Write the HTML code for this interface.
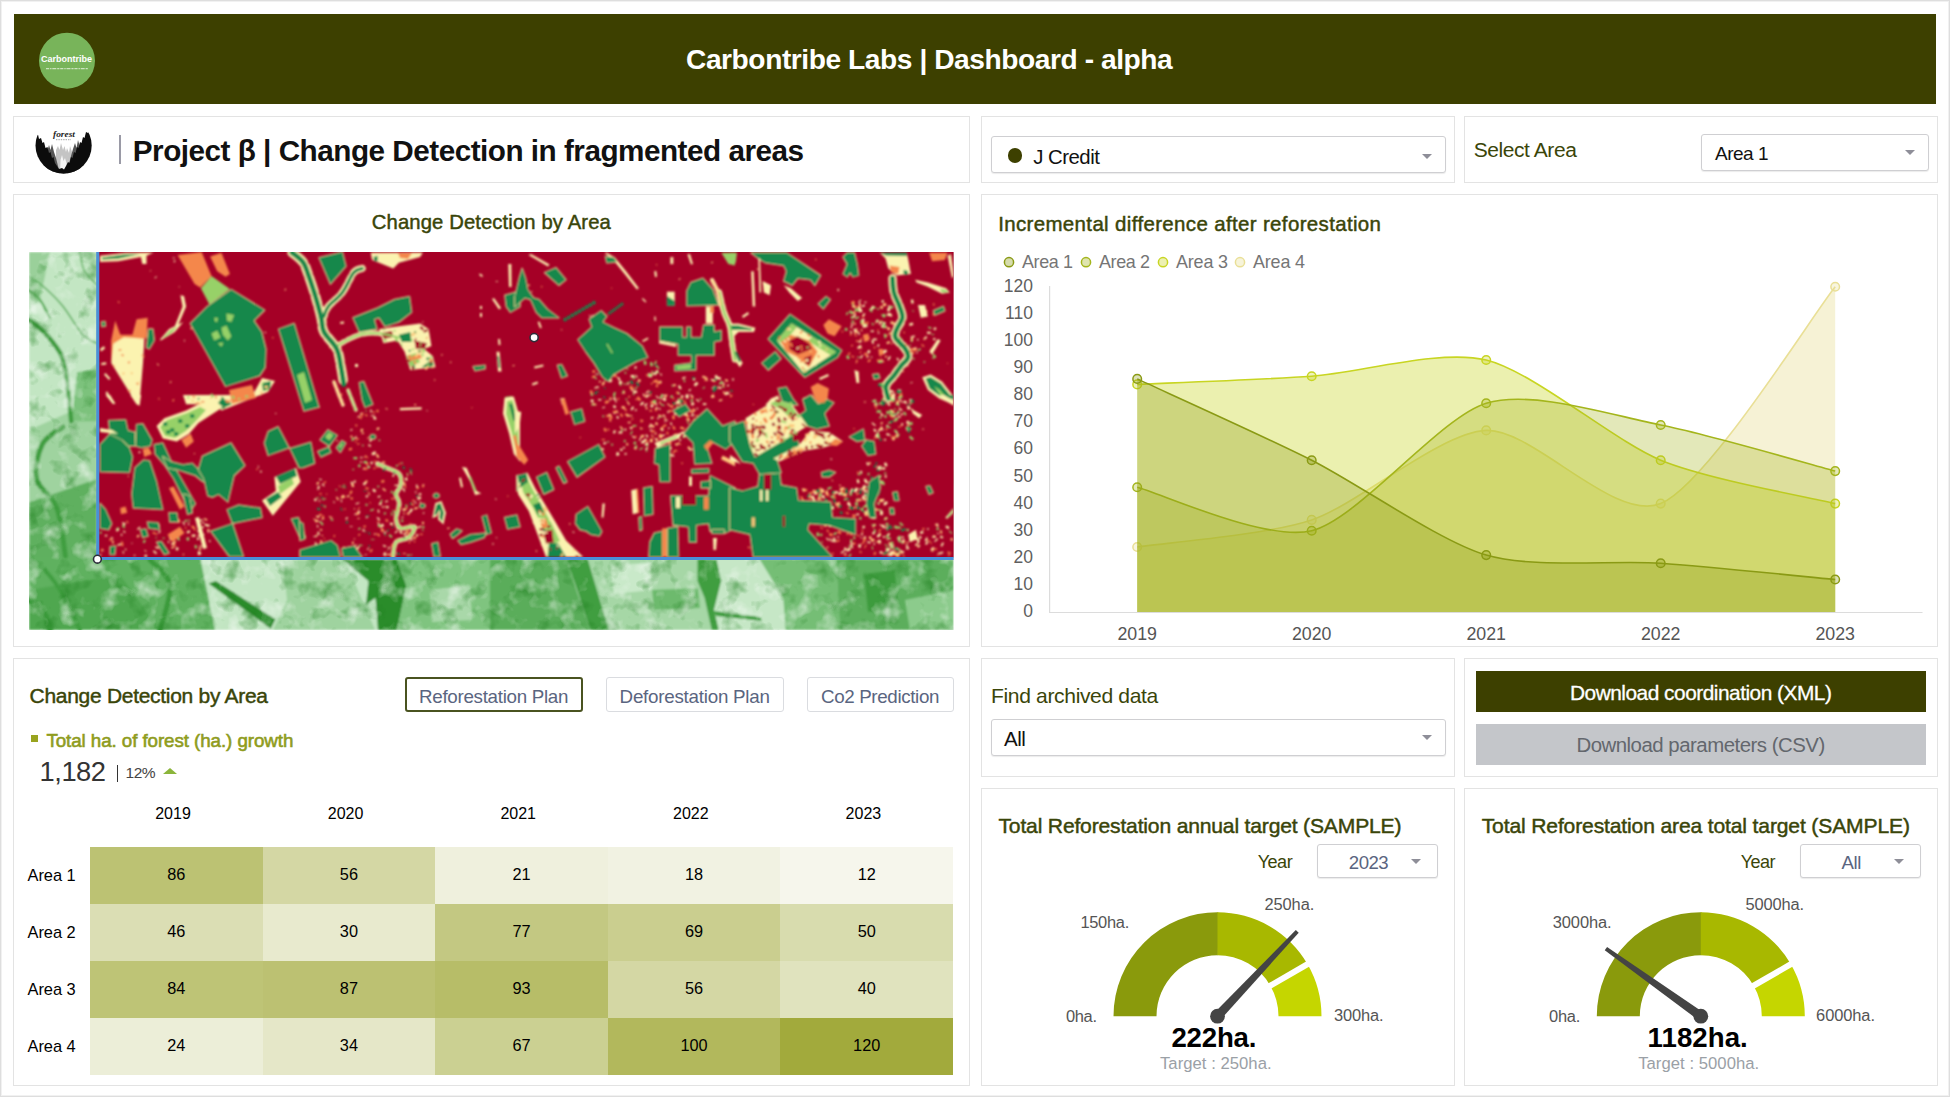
<!DOCTYPE html>
<html lang="en"><head><meta charset="utf-8"><title>Carbontribe Labs | Dashboard - alpha</title>
<style>
html,body{margin:0;padding:0;background:#fff;}
body{width:1950px;height:1097px;overflow:hidden;font-family:"Liberation Sans",sans-serif;}
#page{position:relative;width:1950px;height:1097px;background:#fff;box-shadow:inset 0 0 0 1px #dedede, inset 0 0 0 2px #f1f1f1;overflow:hidden;}
.t{position:absolute;white-space:pre;font-family:"Liberation Sans",sans-serif;display:block;}
.p{position:absolute;box-sizing:border-box;border:1px solid #e3e3e3;background:#fff;}
.sel{position:absolute;box-sizing:border-box;border:1px solid #cfcfd2;border-radius:3px;background:#fff;box-shadow:0 1px 1px rgba(0,0,0,0.08);}
.arr{position:absolute;width:0;height:0;border-left:5px solid transparent;border-right:5px solid transparent;border-top:5.5px solid #8e8e98;}
.btn{position:absolute;box-sizing:border-box;border:1px solid #dadce0;border-radius:3px;background:#fff;}
svg{position:absolute;left:0;top:0;}

</style></head>
<body>
<div id="page">
<div id="hdr" style="position:absolute;left:14px;top:14px;width:1922px;height:89.5px;background:#3d4000;"></div>
<div class="p" style="left:13px;top:116px;width:957px;height:67px;"></div>
<div class="p" style="left:981px;top:116px;width:474px;height:67px;"></div>
<div class="p" style="left:1464px;top:116px;width:474px;height:67px;"></div>
<div class="p" style="left:13px;top:194px;width:957px;height:453px;"></div>
<div class="p" style="left:981px;top:194px;width:957px;height:453px;"></div>
<div class="p" style="left:13px;top:658px;width:957px;height:428px;"></div>
<div class="p" style="left:981px;top:658px;width:474px;height:119px;"></div>
<div class="p" style="left:1464px;top:658px;width:474px;height:119px;"></div>
<div class="p" style="left:981px;top:788px;width:474px;height:298px;"></div>
<div class="p" style="left:1464px;top:788px;width:474px;height:298px;"></div>
<!-- title divider -->
<div style="position:absolute;left:119px;top:135px;width:2px;height:29px;background:#9a9aa6;"></div>
<!-- selects -->
<div class="sel" style="left:991px;top:136px;width:454.5px;height:37px;"></div>
<div style="position:absolute;left:1007.5px;top:148px;width:14.5px;height:14.5px;border-radius:50%;background:#3d4000;"></div>
<div class="arr" style="left:1422px;top:154px;"></div>
<div class="sel" style="left:1701px;top:134px;width:227.5px;height:36.5px;"></div>
<div class="arr" style="left:1905px;top:150px;"></div>
<div class="sel" style="left:991px;top:719px;width:454.5px;height:36.5px;"></div>
<div class="arr" style="left:1422px;top:734.5px;"></div>
<div class="sel" style="left:1317px;top:844px;width:120.5px;height:33.5px;"></div>
<div class="arr" style="left:1411px;top:858.5px;"></div>
<div class="sel" style="left:1800px;top:844px;width:120.5px;height:33.5px;"></div>
<div class="arr" style="left:1894px;top:858.5px;"></div>
<!-- plan buttons -->
<div class="btn" style="left:405px;top:677px;width:177.5px;height:34.5px;border:2px solid #4a5320;"></div>
<div class="btn" style="left:605.5px;top:677px;width:178.5px;height:34.5px;"></div>
<div class="btn" style="left:807px;top:677px;width:146.5px;height:34.5px;"></div>
<!-- kpi -->
<div style="position:absolute;left:30.5px;top:734.5px;width:7.5px;height:7.5px;background:#99a41f;"></div>
<div style="position:absolute;left:116.8px;top:765px;width:1.6px;height:17px;background:#333;"></div>
<div style="position:absolute;left:162.5px;top:768px;width:0;height:0;border-left:7px solid transparent;border-right:7px solid transparent;border-bottom:6.5px solid #8bb53b;"></div>
<!-- download buttons -->
<div style="position:absolute;left:1476px;top:670.5px;width:450px;height:41px;background:#3d4000;"></div>
<div style="position:absolute;left:1476px;top:723.5px;width:450px;height:41px;background:#c4c6ca;"></div>

<svg width="1950" height="1097" viewBox="0 0 1950 1097" style="pointer-events:none">
<g id="heat" shape-rendering="crispEdges">
<rect x="90.0" y="846.5" width="172.9" height="57.3" fill="rgb(188,194,115)"/>
<rect x="262.6" y="846.5" width="172.9" height="57.3" fill="rgb(212,215,164)"/>
<rect x="435.2" y="846.5" width="172.9" height="57.3" fill="rgb(239,240,221)"/>
<rect x="607.8" y="846.5" width="172.9" height="57.3" fill="rgb(241,242,226)"/>
<rect x="780.4" y="846.5" width="172.9" height="57.3" fill="rgb(246,246,236)"/>
<rect x="90.0" y="903.5" width="172.9" height="57.4" fill="rgb(219,222,180)"/>
<rect x="262.6" y="903.5" width="172.9" height="57.4" fill="rgb(232,234,206)"/>
<rect x="435.2" y="903.5" width="172.9" height="57.4" fill="rgb(195,200,130)"/>
<rect x="607.8" y="903.5" width="172.9" height="57.4" fill="rgb(202,206,143)"/>
<rect x="780.4" y="903.5" width="172.9" height="57.4" fill="rgb(216,220,174)"/>
<rect x="90.0" y="960.6" width="172.9" height="57.3" fill="rgb(190,196,118)"/>
<rect x="262.6" y="960.6" width="172.9" height="57.3" fill="rgb(188,193,114)"/>
<rect x="435.2" y="960.6" width="172.9" height="57.3" fill="rgb(183,189,104)"/>
<rect x="607.8" y="960.6" width="172.9" height="57.3" fill="rgb(212,215,164)"/>
<rect x="780.4" y="960.6" width="172.9" height="57.3" fill="rgb(224,227,190)"/>
<rect x="90.0" y="1017.6" width="172.9" height="57.4" fill="rgb(236,238,216)"/>
<rect x="262.6" y="1017.6" width="172.9" height="57.4" fill="rgb(229,231,200)"/>
<rect x="435.2" y="1017.6" width="172.9" height="57.4" fill="rgb(203,208,146)"/>
<rect x="607.8" y="1017.6" width="172.9" height="57.4" fill="rgb(178,184,92)"/>
<rect x="780.4" y="1017.6" width="172.9" height="57.4" fill="rgb(162,170,60)"/>
</g></svg>
<svg width="1950" height="1097" viewBox="0 0 1950 1097" style="pointer-events:none">
<defs><clipPath id="mapclip"><rect x="29" y="252" width="924.6" height="378"/></clipPath><clipPath id="redclip"><rect x="99" y="252" width="854.6" height="305.4"/></clipPath>
<filter id="soft" x="0" y="0" width="100%" height="100%"><feGaussianBlur stdDeviation="0.8"/></filter>
<filter id="tex" x="0" y="0" width="100%" height="100%" color-interpolation-filters="sRGB"><feTurbulence type="fractalNoise" baseFrequency="0.05" numOctaves="3" seed="4" result="n"/><feColorMatrix in="n" type="matrix" values="0 0 0 0 1  0 0 0 0 1  0 0 0 0 1  1.5 0 0 0 -0.78" result="lt"/><feColorMatrix in="n" type="matrix" values="0 0 0 0 0.12  0 0 0 0 0.5  0 0 0 0 0.12  0 -1.6 0 0 0.74" result="dk"/><feComposite in="lt" in2="SourceGraphic" operator="in" result="lt2"/><feComposite in="dk" in2="SourceGraphic" operator="in" result="dk2"/><feMerge><feMergeNode in="SourceGraphic"/><feMergeNode in="dk2"/><feMergeNode in="lt2"/></feMerge></filter></defs>
<g id="map" clip-path="url(#mapclip)">
<g filter="url(#tex)"><g filter="url(#soft)">
<rect x="29" y="252" width="925" height="378" fill="#c3e6c3"/>
<polygon points="29.0,430.0 97.0,400.0 97.0,560.0 29.0,560.0" fill="#9fd39f"/>
<polygon points="29.3,502.2 97.0,479.0 97.0,560.0 29.3,560.0" fill="#5eb05e"/>
<polygon points="77.0,372.2 97.0,369.3 97.0,421.3 71.2,421.3" fill="#7cc27c"/>
<polygon points="29.0,252.0 50.0,252.0 40.0,300.0 29.0,310.0" fill="#9ad09a"/>
<polygon points="29.0,557.0 200.0,557.0 215.0,630.0 29.0,630.0" fill="#5fb15f"/>
<polygon points="29.0,590.0 120.0,575.0 160.0,630.0 29.0,630.0" fill="#4fa74f"/>
<polygon points="215.8,562.0 282.5,560.0 287.3,600.0 273.0,630.0 220.5,630.0 227.7,612.0 213.4,573.8" fill="#c2e5c2"/>
<polygon points="208.6,583.4 215.8,581.0 275.4,619.2 270.6,628.7" fill="#2c8c2c"/>
<polygon points="283.0,560.0 345.0,560.0 375.0,630.0 273.0,630.0 287.0,600.0" fill="#9fd39f"/>
<polygon points="342.2,559.0 397.0,559.0 406.5,585.8 397.0,630.0 377.9,630.0 375.5,597.7 366.0,604.8 368.4,581.0" fill="#2c8c2c"/>
<polygon points="397.0,559.0 566.0,559.0 585.0,630.0 397.0,630.0 406.5,585.8" fill="#7fc47f"/>
<polygon points="430.0,590.0 470.0,585.0 472.0,620.0 432.0,622.0" fill="#a9d8a9"/>
<polygon points="490.0,559.0 566.0,559.0 590.0,630.0 490.0,630.0" fill="#5aad5a"/>
<polygon points="566.3,559.0 587.8,559.0 609.2,630.0 590.2,630.0 578.2,592.9" fill="#3f9e3f"/>
<polygon points="588.0,559.0 697.5,559.0 712.0,630.0 609.0,630.0" fill="#a6d7a6"/>
<polygon points="652.0,590.0 698.0,588.0 700.0,608.0 654.0,610.0" fill="#6dba6d"/>
<polygon points="610.0,565.0 650.0,563.0 652.0,590.0 614.0,594.0" fill="#c9e9c9"/>
<polygon points="697.5,559.0 716.5,559.0 721.3,581.0 714.2,609.6 718.9,630.0 711.8,630.0 704.6,597.7 697.5,581.0" fill="#3f9e3f"/>
<polygon points="716.5,559.0 759.5,559.0 783.3,597.7 785.7,630.0 718.9,630.0 714.2,609.6 721.3,581.0" fill="#c6e7c6"/>
<polygon points="714.0,611.0 760.0,617.0 762.0,621.0 716.0,616.0" fill="#3f9e3f"/>
<polygon points="759.5,559.0 836.0,559.0 840.0,630.0 785.7,630.0 783.3,597.7" fill="#74be74"/>
<polygon points="836.0,559.0 954.0,559.0 954.0,630.0 840.0,630.0" fill="#5cae5c"/>
<polygon points="864.0,574.0 895.0,570.0 898.0,608.0 868.0,612.0" fill="#3e9b3e"/>
<polygon points="905.0,600.0 954.0,590.0 954.0,630.0 910.0,630.0" fill="#8ccb8c"/>
<path d="M29.3,320.2 C31.9,322.3 39.5,326.8 45.0,333.0 C50.5,339.2 58.7,348.2 62.5,357.7 C66.3,367.2 66.5,379.4 68.0,390.0 C69.5,400.6 70.7,416.1 71.2,421.3" fill="none" stroke="#3f9e3f" stroke-width="4.5" stroke-linecap="round"/>
<path d="M62.5,427.0 C59.1,429.9 46.6,435.7 42.3,444.4 C38.0,453.1 34.2,468.4 36.6,479.0 C39.0,489.6 52.0,495.1 56.8,507.9 C61.6,520.7 64.0,548.0 65.4,556.0" fill="none" stroke="#3f9e3f" stroke-width="5" stroke-linecap="round"/>
<path d="M29.3,276.9 C31.5,278.3 36.8,280.7 42.3,285.5 C47.8,290.3 55.8,297.6 62.5,305.8 C69.2,314.0 77.0,328.4 82.8,334.6 C88.6,340.9 94.8,341.9 97.2,343.3" fill="none" stroke="#5aae5a" stroke-width="1.6" stroke-linecap="round"/>
<path d="M29.0,290.0 C30.8,291.7 36.5,295.3 40.0,300.0 C43.5,304.7 48.3,315.0 50.0,318.0" fill="none" stroke="#5aae5a" stroke-width="2.5" stroke-linecap="round"/>
<path d="M80.0,252.0 C80.7,255.0 81.2,264.5 84.0,270.0 C86.8,275.5 94.8,282.5 97.0,285.0" fill="none" stroke="#6db96d" stroke-width="1.6" stroke-linecap="round"/>
<path d="M45.0,570.0 C47.5,573.3 54.2,580.0 60.0,590.0 C65.8,600.0 76.7,623.3 80.0,630.0" fill="none" stroke="#3f9e3f" stroke-width="4" stroke-linecap="round"/>
<path d="M150.0,560.0 C153.3,564.2 168.3,573.3 170.0,585.0 C171.7,596.7 161.7,622.5 160.0,630.0" fill="none" stroke="#3a9a3a" stroke-width="5" stroke-linecap="round"/>
<path d="M29.0,600.0 C31.7,602.5 41.5,610.0 45.0,615.0 C48.5,620.0 49.2,627.5 50.0,630.0" fill="none" stroke="#3a9a3a" stroke-width="6" stroke-linecap="round"/>
</g></g>
<rect x="99" y="252" width="855" height="305.4" fill="#a50026"/>
<g clip-path="url(#redclip)"><g filter="url(#soft)">
<path d="M292.0,252.5 C293.8,254.1 300.1,258.2 302.8,262.0 C305.6,265.8 306.4,269.6 308.5,275.4 C310.6,281.2 313.4,289.5 315.5,296.6 C317.6,303.7 319.8,311.9 321.2,317.8 C322.6,323.7 321.4,326.8 324.0,332.0 C326.6,337.2 333.9,343.0 336.7,348.9 C339.5,354.8 339.8,361.4 341.0,367.3 C342.2,373.2 343.3,381.4 343.8,384.2" fill="none" stroke="#fbf3b0" stroke-width="9.5" stroke-linecap="round" stroke-dasharray="15.2 4.8 7.6 3.8"/>
<path d="M362.2,268.4 C360.8,269.1 357.0,268.6 353.7,272.6 C350.4,276.6 346.6,286.8 342.4,292.4 C338.2,298.0 331.4,302.5 328.3,306.5 C325.2,310.5 324.7,314.8 324.0,316.4" fill="none" stroke="#fbf3b0" stroke-width="7" stroke-linecap="round" stroke-dasharray="11.2 3.5 5.6 2.8"/>
<path d="M338.0,345.0 C341.6,343.3 352.4,336.7 359.3,334.8 C366.2,332.9 372.5,332.9 379.1,333.4 C385.7,333.9 395.6,336.9 398.9,337.6" fill="none" stroke="#fbf3b0" stroke-width="5" stroke-linecap="round" stroke-dasharray="8.0 2.5 4.0 2.0"/>
<path d="M334.0,382.0 C334.8,384.2 337.5,391.2 339.0,395.0 C340.5,398.8 342.3,403.3 343.0,405.0" fill="none" stroke="#fbf3b0" stroke-width="3.5" stroke-linecap="round" stroke-dasharray="5.6 1.8 2.8 1.4"/>
<path d="M348.0,390.0 C348.7,391.7 350.7,396.7 352.0,400.0 C353.3,403.3 355.3,408.3 356.0,410.0" fill="none" stroke="#fbf3b0" stroke-width="3.5" stroke-linecap="round" stroke-dasharray="5.6 1.8 2.8 1.4"/>
<path d="M377.5,463.9 C379.1,464.5 383.2,466.1 386.8,467.8 C390.4,469.5 396.9,471.1 399.2,474.0 C401.5,476.9 401.2,481.5 400.7,484.9 C400.2,488.3 396.4,491.1 396.1,494.2 C395.9,497.3 399.2,499.4 399.2,503.5 C399.2,507.6 395.9,514.8 396.1,518.9 C396.4,523.0 397.6,526.9 400.7,528.2 C403.8,529.5 413.3,525.2 414.6,526.7 C415.9,528.2 411.6,534.9 408.5,537.5 C405.4,540.1 398.7,539.1 396.1,542.2 C393.5,545.3 393.5,553.8 393.0,556.1" fill="none" stroke="#fbf3b0" stroke-width="4.6" stroke-linecap="round" stroke-dasharray="7.4 2.3 3.7 1.8"/>
<path d="M892.5,278.3 C892.7,280.6 892.7,287.7 893.9,292.4 C895.1,297.1 898.2,302.3 899.6,306.5 C901.0,310.7 902.9,314.0 902.4,317.8 C901.9,321.6 898.0,325.8 896.8,329.1 C895.6,332.4 894.0,334.3 895.4,337.6 C896.8,340.9 903.2,345.6 905.3,348.9 C907.4,352.2 908.8,354.6 908.1,357.4 C907.4,360.2 903.4,362.8 901.0,365.9 C898.6,369.0 896.4,372.4 893.9,375.8 C891.4,379.2 886.9,382.2 886.0,386.0 C885.1,389.8 887.9,396.3 888.3,398.4" fill="none" stroke="#fbf3b0" stroke-width="8.5" stroke-linecap="round" stroke-dasharray="13.6 4.2 6.8 3.4"/>
<path d="M719.2,292.4 C720.0,295.7 722.3,306.5 724.1,312.2 C725.9,317.9 728.4,320.6 729.8,326.3 C731.2,332.0 731.7,340.5 732.6,346.1 C733.5,351.7 734.6,357.7 735.0,360.0" fill="none" stroke="#fbf3b0" stroke-width="6" stroke-linecap="round" stroke-dasharray="9.6 3.0 4.8 2.4"/>
<path d="M712.0,280.0 C713.0,282.0 716.5,287.8 718.0,292.0 C719.5,296.2 720.5,302.8 721.0,305.0" fill="none" stroke="#fbf3b0" stroke-width="4" stroke-linecap="round" stroke-dasharray="6.4 2.0 3.2 1.6"/>
<path d="M357.2,417.1 359.5,415.2 360.2,415.9 357.8,417.8zM367.2,463.3 368.1,464.8 367.3,465.3 366.4,463.8zM367.3,466.0 370.1,466.0 370.1,467.4 367.3,467.4zM374.4,416.8 376.6,418.6 375.4,420.0 373.3,418.2zM371.4,409.4 371.9,412.6 370.6,412.8 370.1,409.6zM371.6,461.3 373.2,462.7 371.7,464.5 370.1,463.1zM360.5,460.9 361.8,461.4 361.3,462.9 360.0,462.4zM354.4,438.5 355.9,436.0 357.0,436.6 355.5,439.1zM359.7,414.1 362.0,412.2 362.6,412.9 360.3,414.8zM352.0,428.8 352.6,429.9 350.7,431.0 350.1,429.9zM362.7,468.4 365.1,467.5 365.5,468.8 363.1,469.7zM371.3,454.3 372.5,452.1 374.2,453.0 372.9,455.2zM360.1,458.0 361.0,456.4 362.4,457.2 361.5,458.8zM373.1,452.4 374.8,451.0 376.3,452.8 374.6,454.2zM373.2,453.0 375.1,454.6 374.4,455.5 372.5,453.9zM369.1,444.0 371.2,445.8 370.2,447.1 368.0,445.2zM370.8,415.2 374.7,415.2 374.7,416.3 370.8,416.3zM372.9,418.5 374.2,416.3 375.9,417.3 374.6,419.4zM369.0,441.0 370.3,438.8 372.0,439.8 370.8,442.1zM394.5,484.8 398.2,484.8 398.2,485.9 394.5,485.9zM349.8,526.2 352.5,526.2 352.5,527.1 349.8,527.1zM415.6,527.0 419.0,527.0 419.0,528.0 415.6,528.0zM363.0,529.1 364.9,529.8 364.1,531.7 362.3,531.1zM417.3,484.4 417.9,487.9 416.4,488.1 415.8,484.7zM335.7,545.3 338.2,547.4 337.6,548.2 335.1,546.2zM406.5,477.3 407.9,479.8 406.0,480.9 404.5,478.4zM341.7,499.5 342.2,502.0 341.1,502.2 340.7,499.7zM341.7,552.2 345.7,552.2 345.7,553.9 341.7,553.9zM420.1,501.0 421.2,502.9 420.4,503.3 419.3,501.4zM365.6,517.6 366.5,516.0 367.9,516.9 367.0,518.4zM355.4,503.6 359.1,502.3 359.5,503.3 355.8,504.6zM403.4,533.5 405.9,532.6 406.4,534.0 403.9,534.9zM395.3,521.9 398.8,521.9 398.8,522.8 395.3,522.8zM318.7,487.2 319.1,489.4 318.1,489.6 317.7,487.4zM319.5,478.4 322.0,479.4 321.6,480.5 319.1,479.6zM362.6,483.8 365.5,481.4 367.0,483.1 364.1,485.6zM322.4,548.6 324.4,548.6 324.4,549.5 322.4,549.5zM378.6,503.5 381.5,502.5 382.1,504.3 379.3,505.3zM345.2,518.5 347.2,516.9 348.2,518.1 346.2,519.7zM336.8,552.3 337.5,556.1 336.6,556.3 336.0,552.5zM322.3,483.5 324.8,485.6 324.0,486.6 321.5,484.5zM313.4,536.0 317.0,536.0 317.0,537.1 313.4,537.1zM399.1,538.0 400.3,540.1 399.5,540.5 398.3,538.4zM395.9,528.2 397.8,527.5 398.1,528.4 396.3,529.0zM385.0,501.3 387.6,500.3 388.0,501.7 385.5,502.6zM422.6,513.2 423.9,512.1 424.6,513.0 423.4,514.0zM351.3,484.5 353.2,484.5 353.2,485.7 351.3,485.7zM350.5,482.1 352.4,481.4 353.2,483.6 351.3,484.3zM356.7,513.9 358.6,510.6 360.5,511.6 358.5,515.0zM319.0,531.4 319.6,535.0 318.1,535.3 317.4,531.7zM418.4,527.1 420.4,525.4 421.4,526.6 419.4,528.3zM366.3,494.9 368.1,495.5 367.3,497.7 365.5,497.1zM368.3,548.0 369.0,549.2 367.4,550.0 366.8,548.9zM337.4,554.4 338.2,553.1 339.0,553.5 338.2,554.9zM355.8,548.5 358.6,546.1 359.9,547.6 357.1,550.0zM386.1,507.3 388.2,506.5 388.7,507.8 386.6,508.6zM313.7,499.6 315.4,498.2 316.9,500.0 315.2,501.4zM420.5,492.7 421.6,494.6 419.7,495.7 418.6,493.8zM355.0,547.0 355.7,548.2 354.4,548.9 353.7,547.8zM354.2,513.7 357.7,513.7 357.7,514.7 354.2,514.7zM394.5,532.5 397.4,530.1 398.2,531.1 395.3,533.5zM318.6,500.3 320.2,500.3 320.2,501.5 318.6,501.5zM354.4,546.3 355.6,544.2 356.7,544.8 355.5,546.9zM383.9,532.3 385.6,533.7 385.0,534.4 383.4,533.0zM319.2,555.0 320.5,555.0 320.5,557.0 319.2,557.0zM318.4,515.2 319.7,517.4 318.4,518.1 317.2,515.9zM395.0,492.8 395.6,493.9 393.7,495.0 393.1,493.9zM402.4,509.6 405.9,508.3 406.4,509.8 403.0,511.0zM381.8,506.0 384.2,506.9 383.9,507.9 381.4,507.0zM381.8,525.2 383.6,525.2 383.6,526.7 381.8,526.7zM318.5,520.5 321.0,522.6 320.5,523.3 317.9,521.1zM379.0,509.6 379.5,512.6 378.0,512.8 377.5,509.8zM317.9,524.9 318.4,527.4 317.2,527.6 316.7,525.1zM403.3,508.2 404.3,509.1 403.4,510.2 402.4,509.3zM400.9,517.4 403.7,516.4 404.0,517.2 401.2,518.3zM415.1,500.8 416.7,503.6 415.9,504.1 414.3,501.3zM387.8,547.6 389.1,546.5 390.4,548.1 389.1,549.2zM384.2,553.1 386.4,555.0 385.2,556.4 383.0,554.6zM396.7,494.0 397.7,495.7 396.2,496.6 395.1,494.9zM353.3,482.4 354.6,480.2 356.1,481.1 354.8,483.3zM379.4,522.9 379.7,524.7 377.9,525.0 377.6,523.2zM328.6,551.2 330.1,550.0 330.8,550.9 329.3,552.1zM383.2,544.7 386.4,545.9 385.9,547.2 382.7,546.1zM415.7,535.5 416.7,533.8 418.6,535.0 417.7,536.6zM371.9,509.9 373.4,508.7 374.0,509.4 372.5,510.6zM334.3,501.0 334.7,503.1 333.8,503.2 333.4,501.2zM316.2,542.1 316.7,545.3 315.2,545.6 314.6,542.4zM383.6,553.5 384.5,551.9 386.4,553.1 385.5,554.6zM410.1,539.1 412.2,538.3 412.8,540.0 410.7,540.8zM317.0,486.7 319.8,485.7 320.2,486.7 317.4,487.7zM316.9,489.4 319.2,487.5 319.8,488.2 317.5,490.1zM403.6,491.5 404.2,490.5 405.2,491.1 404.6,492.1zM400.2,530.6 402.8,532.8 401.6,534.2 399.0,532.0zM377.5,516.9 380.3,519.3 379.3,520.5 376.5,518.1zM383.6,532.2 386.1,531.3 386.5,532.5 384.0,533.4zM417.0,497.7 420.6,496.4 421.4,498.6 417.8,500.0zM389.9,522.7 392.9,522.7 392.9,524.9 389.9,524.9zM373.7,488.6 376.3,490.8 374.8,492.5 372.2,490.3zM387.2,505.6 389.1,507.1 387.9,508.6 386.1,507.0zM408.7,512.4 409.8,510.5 411.3,511.4 410.2,513.3zM392.0,476.3 393.3,474.1 394.7,474.9 393.4,477.1zM409.8,510.5 411.0,508.3 413.0,509.5 411.7,511.7zM380.2,525.5 382.6,523.5 384.1,525.2 381.7,527.2zM404.7,534.9 407.3,535.8 406.9,537.0 404.3,536.0zM376.0,463.1 378.4,461.1 379.1,461.8 376.7,463.8zM402.6,488.3 405.2,489.3 404.6,490.8 402.0,489.8zM377.5,496.3 380.2,495.4 380.7,496.8 378.0,497.7zM630.7,374.9 634.5,374.9 634.5,377.4 630.7,377.4zM595.8,374.5 596.6,373.1 597.9,373.9 597.1,375.3zM649.9,376.8 652.1,372.9 653.6,373.7 651.4,377.6zM631.5,386.4 633.7,390.2 631.8,391.3 629.6,387.5zM621.1,365.8 625.5,365.8 625.5,368.5 621.1,368.5zM658.0,369.9 658.6,372.9 656.3,373.3 655.8,370.3zM660.6,373.3 662.2,374.7 661.5,375.7 659.8,374.3zM648.4,374.5 650.2,375.2 649.8,376.2 648.0,375.5zM615.4,361.6 618.0,360.7 618.5,362.1 615.9,363.0zM595.8,386.6 598.8,386.6 598.8,388.1 595.8,388.1zM633.1,390.8 637.1,390.8 637.1,392.9 633.1,392.9zM650.2,372.9 650.9,376.9 648.5,377.3 647.8,373.3zM591.2,399.3 593.9,400.3 593.1,402.6 590.3,401.6zM632.1,360.5 634.4,358.5 635.6,359.9 633.2,361.9zM626.4,384.5 628.8,382.5 629.5,383.3 627.1,385.3zM634.1,368.1 635.3,366.0 637.0,367.0 635.8,369.1zM606.8,379.9 609.2,379.0 609.6,380.1 607.2,381.0zM608.7,381.1 611.2,379.0 612.6,380.8 610.2,382.8zM598.2,399.1 601.3,399.1 601.3,400.5 598.2,400.5zM618.8,376.7 620.8,380.2 619.2,381.1 617.2,377.7zM636.3,374.8 637.8,377.4 636.8,378.0 635.3,375.4zM615.7,366.0 617.3,366.6 616.4,369.0 614.8,368.5zM653.4,374.3 654.9,371.8 657.0,373.0 655.5,375.5zM615.4,366.5 617.0,369.2 614.7,370.5 613.1,367.8zM609.4,400.2 610.5,398.3 611.5,398.9 610.4,400.7zM645.5,392.8 648.7,390.0 649.5,391.0 646.3,393.7zM603.3,372.7 605.2,372.7 605.2,374.7 603.3,374.7zM638.9,379.8 640.5,379.8 640.5,381.0 638.9,381.0zM618.4,381.9 621.7,380.7 622.5,383.2 619.3,384.3zM597.9,367.8 600.8,365.4 601.6,366.3 598.7,368.7zM718.4,377.5 720.0,377.5 720.0,379.0 718.4,379.0zM693.6,384.4 696.8,381.7 698.5,383.7 695.3,386.4zM682.0,377.8 685.3,376.6 685.8,378.1 682.5,379.3zM696.6,398.7 699.6,401.2 698.8,402.2 695.8,399.7zM727.0,392.7 729.6,392.7 729.6,394.2 727.0,394.2zM718.4,386.2 721.7,387.4 721.0,389.3 717.7,388.1zM694.1,377.8 695.7,379.1 694.1,381.0 692.6,379.7zM711.2,378.7 714.2,379.8 713.6,381.4 710.6,380.3zM679.8,385.0 681.7,388.4 679.8,389.5 677.9,386.1zM712.1,386.9 715.3,388.1 714.6,389.7 711.5,388.6zM713.6,385.4 715.0,385.9 714.1,388.2 712.7,387.7zM724.4,393.5 727.2,391.2 728.9,393.2 726.1,395.6zM717.8,376.5 721.2,377.7 720.3,380.0 716.9,378.7zM702.9,403.2 706.3,403.2 706.3,405.1 702.9,405.1zM678.1,386.0 679.7,385.4 680.5,387.4 678.8,388.0zM680.6,396.5 681.4,395.2 683.0,396.1 682.2,397.5zM726.8,385.5 728.2,384.3 729.2,385.5 727.8,386.7zM688.3,390.4 690.3,388.8 691.2,389.8 689.2,391.5zM690.8,403.3 693.7,402.2 694.5,404.6 691.6,405.7zM724.2,382.5 725.0,383.9 723.2,384.9 722.4,383.5zM732.2,378.6 733.8,378.6 733.8,380.4 732.2,380.4zM716.5,374.7 718.5,378.2 716.4,379.4 714.4,376.0zM686.4,393.9 688.7,395.8 687.6,397.2 685.3,395.2zM661.1,429.8 663.5,428.9 664.0,430.3 661.6,431.2zM670.4,436.7 671.3,438.2 669.7,439.1 668.8,437.6zM649.4,429.9 651.7,429.1 652.1,430.1 649.8,431.0zM650.5,402.7 653.5,400.2 654.3,401.2 651.4,403.7zM616.0,454.0 618.8,453.0 619.5,455.0 616.7,456.0zM657.0,406.8 658.1,408.6 656.3,409.7 655.2,407.8zM658.8,447.2 661.0,449.1 659.5,450.9 657.3,449.0zM656.4,395.4 659.4,397.9 658.6,398.9 655.6,396.3zM643.8,405.4 646.7,403.0 647.7,404.2 644.8,406.6zM630.5,409.6 632.5,406.3 634.1,407.2 632.1,410.6zM617.7,415.8 619.1,418.1 617.5,419.0 616.2,416.7zM680.8,432.3 683.7,431.2 684.4,433.2 681.5,434.2zM635.9,446.4 636.9,448.2 634.9,449.3 633.9,447.6zM634.6,409.7 636.5,409.1 637.0,410.4 635.1,411.1zM601.7,447.8 604.2,448.7 603.6,450.2 601.2,449.3zM655.1,402.3 657.7,404.5 656.9,405.5 654.3,403.3zM618.5,431.4 622.3,431.4 622.3,433.4 618.5,433.4zM614.2,404.9 616.4,406.7 614.9,408.5 612.7,406.6zM663.4,416.2 664.1,414.9 665.5,415.7 664.8,417.0zM682.1,395.1 683.8,396.6 682.6,398.1 680.9,396.6zM638.8,440.3 640.6,437.1 641.6,437.7 639.8,440.9zM632.6,435.5 635.5,438.0 634.7,438.8 631.8,436.4zM672.1,454.5 674.5,455.4 674.1,456.7 671.6,455.8zM625.4,428.2 626.6,429.3 625.2,431.0 623.9,429.9zM612.7,398.4 615.3,397.4 615.9,399.1 613.4,400.0zM605.7,442.0 606.1,444.0 603.6,444.4 603.3,442.5zM659.8,407.7 660.8,409.4 659.6,410.1 658.6,408.3zM613.8,413.1 615.3,413.1 615.3,414.1 613.8,414.1zM622.2,448.4 622.6,450.7 620.4,451.1 620.0,448.8zM639.8,404.2 642.9,401.6 644.2,403.1 641.1,405.7zM690.5,393.9 693.5,396.4 692.8,397.3 689.8,394.8zM671.2,422.3 672.4,424.5 671.1,425.3 669.8,423.1zM690.7,397.4 691.7,395.6 693.6,396.7 692.6,398.4zM612.8,432.7 614.3,430.1 616.0,431.1 614.5,433.7zM693.4,412.6 694.0,416.4 692.9,416.6 692.3,412.8zM689.2,449.7 692.4,448.5 692.8,449.8 689.6,451.0zM657.0,418.5 658.6,417.3 659.4,418.2 657.8,419.5zM670.8,446.2 672.2,448.7 670.5,449.6 669.1,447.2zM644.1,438.9 646.9,438.9 646.9,440.6 644.1,440.6zM644.2,444.6 647.5,443.4 647.8,444.4 644.6,445.6zM646.9,434.2 648.5,436.8 647.0,437.7 645.4,435.0zM602.1,407.5 604.9,406.5 605.2,407.4 602.4,408.4zM668.5,410.8 668.9,413.0 667.6,413.2 667.2,411.0zM670.4,453.8 672.8,454.7 672.2,456.4 669.8,455.6zM623.9,446.4 625.2,447.5 624.0,448.9 622.7,447.9zM648.5,427.0 650.4,423.6 652.3,424.6 650.3,428.0zM678.1,400.4 678.4,401.9 676.3,402.3 676.0,400.7zM653.6,456.4 657.1,455.2 657.8,457.3 654.4,458.6zM660.2,452.4 663.2,451.3 663.9,453.2 660.9,454.3zM630.5,426.6 632.4,428.2 631.3,429.5 629.4,427.9zM661.0,396.1 661.6,399.8 660.6,400.0 660.0,396.3zM666.3,441.2 669.7,440.0 670.3,441.6 666.9,442.9zM640.9,441.6 644.5,440.3 645.2,442.4 641.6,443.7zM690.5,415.3 691.9,414.2 692.7,415.3 691.4,416.4zM643.1,440.2 645.1,438.6 646.3,440.1 644.4,441.7zM675.9,402.9 678.9,400.3 680.6,402.3 677.5,404.8zM645.0,396.4 647.7,394.1 649.2,395.9 646.5,398.1zM644.9,448.9 647.2,446.9 648.3,448.3 646.0,450.2zM686.7,395.1 689.0,397.0 687.4,398.9 685.1,397.0zM664.2,420.9 667.7,419.6 668.0,420.6 664.5,421.9zM618.5,452.1 618.9,454.3 616.7,454.7 616.3,452.5zM615.9,398.8 616.6,402.6 615.5,402.8 614.8,399.0zM624.3,453.4 626.3,452.7 626.9,454.3 624.9,455.1zM667.7,428.4 669.3,427.1 670.0,427.9 668.4,429.2zM645.5,443.0 648.4,443.0 648.4,445.1 645.5,445.1zM650.1,406.4 651.4,404.2 653.7,405.6 652.4,407.7zM692.0,431.8 695.8,430.4 696.6,432.7 692.8,434.0zM650.5,418.4 651.6,416.5 653.2,417.4 652.1,419.3zM679.3,412.8 681.9,414.9 680.4,416.7 677.8,414.5zM663.8,397.3 666.5,399.5 664.9,401.4 662.3,399.2zM686.1,395.8 688.4,393.9 689.1,394.7 686.8,396.6zM661.4,394.8 665.5,394.8 665.5,396.1 661.4,396.1zM694.8,438.1 697.4,440.4 696.7,441.3 694.0,439.0zM657.1,437.9 657.6,440.8 655.6,441.2 655.1,438.3zM687.7,409.6 688.0,411.5 685.8,411.9 685.4,410.0zM673.6,413.5 677.0,410.6 678.6,412.5 675.2,415.4zM685.6,412.5 688.9,415.2 687.4,417.0 684.1,414.2zM662.1,435.1 664.5,434.2 665.0,435.5 662.6,436.4zM678.9,440.1 680.4,438.8 681.4,440.1 680.0,441.3zM643.8,393.4 645.4,396.2 644.2,396.9 642.6,394.1zM682.5,435.5 685.8,434.3 686.6,436.6 683.4,437.8zM697.4,407.6 698.2,409.1 697.2,409.8 696.3,408.2zM908.9,323.7 912.6,322.4 913.4,324.7 909.8,326.0zM872.7,338.5 876.8,338.5 876.8,340.2 872.7,340.2zM866.3,357.0 868.7,356.1 869.0,357.1 866.7,358.0zM904.7,356.8 907.8,358.0 906.9,360.4 903.8,359.2zM857.9,301.9 860.7,299.5 861.4,300.4 858.6,302.8zM858.6,331.5 860.2,334.4 858.9,335.1 857.3,332.3zM913.1,299.4 913.8,303.3 911.5,303.7 910.8,299.8zM870.7,330.4 873.9,330.4 873.9,331.9 870.7,331.9zM899.6,346.7 903.3,346.7 903.3,348.2 899.6,348.2zM882.7,299.7 884.3,301.0 882.7,302.9 881.1,301.6zM912.2,348.4 916.1,347.0 916.9,349.2 913.0,350.6zM927.0,331.7 930.8,331.7 930.8,333.7 927.0,333.7zM870.6,357.0 871.7,356.2 872.5,357.2 871.5,358.1zM850.7,324.8 851.5,323.4 853.4,324.5 852.6,325.9zM875.2,321.3 877.7,319.2 879.3,321.0 876.7,323.1zM858.2,341.1 861.2,340.0 861.9,342.0 858.9,343.1zM896.7,303.6 898.8,302.9 899.2,304.2 897.1,304.9zM877.9,344.1 879.6,344.7 878.8,346.9 877.1,346.3zM877.6,332.6 879.1,332.0 879.6,333.3 878.0,333.9zM878.6,324.0 880.3,321.1 881.8,322.0 880.1,324.9zM889.4,305.1 890.9,307.8 889.4,308.7 887.8,306.0zM887.4,359.6 889.5,355.9 890.9,356.7 888.8,360.4zM850.9,330.5 852.4,333.0 851.2,333.6 849.8,331.2zM851.4,326.0 852.5,327.0 851.3,328.4 850.2,327.4zM853.3,329.3 855.9,328.4 856.8,330.8 854.2,331.8zM917.6,338.7 918.9,339.7 918.0,340.8 916.7,339.8zM902.8,347.1 905.4,349.3 904.6,350.2 902.0,348.0zM864.0,301.7 866.7,301.7 866.7,302.8 864.0,302.8zM910.4,336.7 914.4,335.2 915.0,336.8 910.9,338.3zM933.3,337.9 935.3,337.9 935.3,340.3 933.3,340.3zM935.0,327.1 936.6,328.4 934.9,330.4 933.3,329.1zM857.0,347.5 860.4,344.7 861.8,346.3 858.4,349.2zM882.3,352.1 885.6,349.3 887.3,351.2 883.9,354.0zM873.4,339.9 874.0,343.4 872.1,343.7 871.5,340.2zM904.2,347.7 905.9,347.7 905.9,349.0 904.2,349.0zM897.7,357.6 899.3,360.3 897.9,361.1 896.4,358.4zM866.9,352.5 868.5,349.8 870.6,351.0 869.0,353.8zM924.4,338.2 925.7,335.9 927.3,336.9 926.0,339.1zM916.1,352.4 917.6,351.8 918.0,353.1 916.5,353.6zM860.0,358.1 861.9,354.8 863.1,355.4 861.2,358.7zM862.1,315.9 863.8,312.9 865.4,313.8 863.7,316.8zM860.6,309.8 862.6,310.6 862.1,312.0 860.1,311.2zM882.5,321.9 885.6,321.9 885.6,324.0 882.5,324.0zM880.7,326.8 882.3,323.9 883.9,324.9 882.3,327.7zM861.5,305.8 864.7,304.6 865.3,306.0 862.0,307.2zM858.6,311.6 860.2,308.7 862.2,309.9 860.5,312.7zM860.4,302.7 861.0,306.2 859.3,306.5 858.7,303.0zM887.8,307.7 890.6,308.7 889.7,311.0 887.0,310.0zM889.5,312.7 892.6,315.3 891.2,317.1 888.0,314.4zM852.7,317.1 854.7,313.7 856.3,314.6 854.3,318.0zM870.2,308.9 872.3,305.4 874.5,306.6 872.4,310.2zM859.8,306.2 862.0,310.1 859.7,311.4 857.5,307.5zM863.4,320.4 865.7,324.3 863.5,325.6 861.3,321.6zM883.8,325.1 887.3,326.4 886.8,327.7 883.3,326.5zM861.4,319.1 864.6,319.1 864.6,321.0 861.4,321.0zM887.2,313.3 891.1,313.3 891.1,316.1 887.2,316.1zM866.2,324.2 868.0,325.7 866.6,327.5 864.7,325.9zM862.2,325.4 866.5,323.8 867.5,326.5 863.2,328.0zM882.3,325.6 885.0,325.6 885.0,327.6 882.3,327.6zM896.5,430.4 898.2,433.3 896.5,434.2 894.8,431.4zM900.1,398.3 902.5,402.4 901.5,402.9 899.2,398.9zM901.7,412.9 903.1,414.1 901.7,415.7 900.3,414.5zM881.5,426.3 883.6,430.0 882.3,430.8 880.2,427.0zM906.1,421.4 908.7,420.5 909.6,423.0 907.0,424.0zM872.4,422.3 875.9,425.2 875.0,426.2 871.5,423.2zM877.8,430.1 881.0,428.9 881.5,430.4 878.3,431.5zM892.1,415.2 895.4,415.2 895.4,417.2 892.1,417.2zM885.8,427.0 887.2,424.5 888.4,425.2 886.9,427.7zM903.8,400.4 907.1,401.5 906.3,403.7 903.0,402.5zM909.8,398.8 912.0,399.6 911.3,401.7 909.0,400.9zM909.1,405.8 910.7,408.6 908.2,410.1 906.6,407.3zM874.3,403.1 878.2,404.5 877.7,405.8 873.9,404.4zM880.1,414.1 881.6,412.9 883.5,415.2 882.0,416.4zM905.7,429.7 907.5,426.6 910.1,428.1 908.3,431.2zM874.1,399.7 875.6,399.2 876.4,401.5 874.9,402.0zM878.5,432.1 879.0,434.7 877.2,435.0 876.7,432.4zM890.0,395.4 893.7,394.1 894.6,396.8 891.0,398.1zM875.0,428.5 876.6,431.3 874.9,432.3 873.2,429.5zM899.4,407.4 902.6,410.1 901.6,411.3 898.4,408.6zM894.0,414.5 898.5,412.8 898.9,414.0 894.4,415.6zM886.7,432.9 890.1,434.2 889.4,436.0 886.0,434.7zM901.7,422.9 903.4,423.6 902.7,425.5 901.0,424.8zM889.8,400.2 892.0,396.3 894.4,397.7 892.2,401.5zM885.8,438.7 886.1,440.4 884.3,440.7 884.0,439.0zM876.9,433.7 879.0,437.4 877.0,438.6 874.8,434.8zM897.8,415.4 900.9,416.5 900.4,417.9 897.3,416.7zM911.8,408.3 913.2,410.6 912.1,411.3 910.8,408.9zM865.0,494.2 866.5,493.7 867.1,495.4 865.7,496.0zM871.3,517.6 876.0,517.6 876.0,519.1 871.3,519.1zM885.9,462.3 887.7,465.5 885.6,466.7 883.8,463.6zM879.4,513.9 881.1,511.1 882.7,512.0 881.0,514.9zM859.6,471.7 861.2,470.4 862.6,472.0 861.0,473.3zM877.6,504.4 878.8,502.4 879.9,503.1 878.7,505.1zM884.8,474.9 886.5,474.9 886.5,477.8 884.8,477.8zM876.6,467.0 880.5,465.5 881.2,467.3 877.2,468.8zM865.7,478.5 868.1,482.6 866.0,483.8 863.6,479.7zM882.0,467.6 885.3,467.6 885.3,469.6 882.0,469.6zM876.8,488.5 877.6,492.7 876.0,493.0 875.3,488.8zM883.1,503.7 886.4,500.9 888.0,502.9 884.8,505.7zM883.3,498.5 884.5,500.6 883.4,501.3 882.2,499.2zM863.2,490.8 866.3,489.7 866.9,491.5 863.8,492.6zM867.5,462.0 869.2,465.0 867.7,465.8 866.0,462.9zM881.1,509.9 883.4,511.8 882.2,513.3 879.9,511.3zM866.4,504.4 869.1,504.4 869.1,506.8 866.4,506.8zM881.6,512.3 883.4,513.8 882.0,515.5 880.2,514.0zM858.8,479.2 859.5,482.9 857.3,483.3 856.6,479.6zM861.4,489.1 863.9,484.8 866.4,486.2 863.9,490.5zM863.7,495.5 865.8,499.2 863.5,500.5 861.4,496.8zM881.2,467.5 881.6,469.8 879.2,470.3 878.7,467.9zM864.1,512.6 867.1,510.1 867.9,511.0 864.9,513.5zM881.3,479.9 883.6,481.8 881.7,484.0 879.4,482.1zM827.8,515.7 831.2,512.8 832.8,514.7 829.4,517.5zM853.6,491.3 856.0,487.2 858.5,488.7 856.1,492.7zM813.4,493.8 814.9,491.2 817.0,492.4 815.5,495.0zM820.6,489.6 822.3,488.2 823.9,490.1 822.2,491.5zM807.5,496.0 809.7,494.2 811.5,496.4 809.3,498.2zM867.4,501.8 869.6,498.0 871.2,498.9 869.0,502.7zM856.4,513.4 859.1,513.4 859.1,515.2 856.4,515.2zM813.1,495.3 815.2,498.9 813.1,500.2 811.0,496.5zM833.4,491.2 838.2,491.2 838.2,493.4 833.4,493.4zM838.0,493.8 841.0,491.3 842.4,493.0 839.4,495.5zM859.6,488.2 862.2,489.2 861.7,490.6 859.1,489.7zM813.5,513.3 815.2,510.5 817.4,511.8 815.8,514.6zM819.7,489.7 823.8,489.7 823.8,492.4 819.7,492.4zM823.5,494.8 825.1,497.5 823.0,498.8 821.4,496.0zM864.0,514.0 867.8,510.8 869.2,512.5 865.4,515.7zM831.5,506.4 834.4,507.4 833.7,509.5 830.7,508.4zM849.3,492.3 851.8,488.1 853.5,489.2 851.1,493.3zM863.7,494.0 868.1,494.0 868.1,496.4 863.7,496.4zM829.6,507.8 831.4,506.3 833.0,508.2 831.2,509.7zM812.0,501.9 813.6,499.0 815.7,500.2 814.0,503.1zM847.8,502.9 851.1,504.1 850.4,505.7 847.1,504.5zM807.7,502.1 810.5,502.1 810.5,504.1 807.7,504.1zM849.0,501.6 851.1,505.3 849.0,506.5 846.9,502.8zM892.3,554.1 895.0,551.8 895.8,552.8 893.1,555.0zM823.5,548.8 824.2,552.6 823.2,552.8 822.5,549.0zM848.5,527.3 849.6,528.3 848.6,529.5 847.5,528.6zM901.3,537.3 902.0,536.0 904.2,537.3 903.4,538.6zM820.8,550.0 822.2,547.7 823.3,548.4 822.0,550.7zM830.7,524.3 831.2,526.9 828.8,527.3 828.3,524.7zM853.0,542.7 853.8,544.0 852.1,545.0 851.4,543.7zM882.5,537.1 883.4,535.7 885.3,536.8 884.5,538.2zM915.2,537.2 918.7,538.5 917.9,540.8 914.3,539.5zM880.0,552.8 881.9,551.3 883.0,552.6 881.2,554.2zM880.5,539.7 881.2,543.2 878.6,543.7 877.9,540.1zM901.2,542.0 903.0,538.9 905.3,540.2 903.5,543.3zM924.6,539.9 925.9,538.8 927.4,540.6 926.1,541.7zM885.4,549.3 889.6,547.8 890.5,550.3 886.3,551.8zM860.5,543.9 861.1,547.4 858.7,547.8 858.1,544.4zM926.5,542.0 928.0,543.2 926.7,544.7 925.2,543.5zM926.9,528.7 928.4,528.1 928.9,529.5 927.4,530.1zM846.0,552.6 846.6,553.8 844.4,555.1 843.8,553.9zM835.2,537.6 835.5,539.0 832.9,539.5 832.7,538.0zM876.4,535.9 879.5,533.3 881.1,535.2 878.0,537.8zM874.6,532.4 874.9,534.0 873.2,534.3 873.0,532.7zM840.6,552.7 843.5,550.2 844.5,551.3 841.5,553.8zM830.6,538.1 832.5,541.4 831.4,542.0 829.6,538.7zM838.8,536.2 839.1,537.8 837.6,538.1 837.3,536.4zM938.8,552.9 942.8,551.4 943.4,553.1 939.4,554.5zM940.5,545.8 942.6,542.3 944.0,543.1 942.0,546.7zM917.9,539.3 919.9,537.7 920.7,538.6 918.7,540.3zM907.1,544.3 908.4,546.7 907.0,547.6 905.6,545.2zM865.4,535.9 866.3,537.5 864.1,538.8 863.2,537.2zM860.8,536.7 862.1,537.8 861.5,538.6 860.2,537.6zM932.3,536.1 935.9,536.1 935.9,537.7 932.3,537.7zM924.9,543.5 927.5,541.4 928.5,542.6 925.9,544.8zM846.2,547.4 846.7,550.4 844.5,550.8 843.9,547.8zM880.2,551.0 882.4,551.8 881.6,553.9 879.4,553.1zM905.9,547.6 909.2,547.6 909.2,549.3 905.9,549.3zM862.1,526.4 864.4,525.6 865.2,527.7 862.9,528.5zM871.7,533.2 873.6,531.6 874.9,533.1 873.0,534.7zM917.6,547.3 919.2,544.6 920.4,545.3 918.8,547.9zM861.7,533.0 863.2,534.3 862.1,535.5 860.6,534.3zM915.5,543.5 917.6,544.2 916.9,545.9 914.9,545.2zM849.7,543.3 851.1,541.0 852.3,541.7 851.0,544.1zM874.6,542.8 875.0,544.9 873.8,545.1 873.4,543.0zM940.0,530.7 942.1,530.7 942.1,532.9 940.0,532.9zM938.0,523.2 938.6,526.7 937.3,526.9 936.7,523.4zM886.4,539.1 887.5,538.2 888.5,539.4 887.3,540.3zM826.7,537.6 829.6,540.1 828.8,541.0 825.9,538.6zM930.4,549.2 933.2,546.8 934.5,548.3 931.7,550.7zM946.6,525.2 949.5,527.7 948.1,529.3 945.2,526.9zM924.6,540.4 926.6,537.0 927.8,537.8 925.9,541.1zM883.4,524.2 885.5,527.8 883.6,528.8 881.6,525.3zM833.3,539.1 836.0,540.1 835.1,542.6 832.4,541.6zM940.4,535.7 943.4,536.8 942.7,538.5 939.8,537.5zM934.1,541.0 937.3,538.2 938.3,539.3 935.0,542.0zM844.9,524.7 846.7,523.2 847.6,524.3 845.8,525.8zM880.2,523.9 882.5,525.9 881.7,526.8 879.4,524.9zM852.1,525.2 853.6,522.5 855.1,523.3 853.5,526.0zM817.8,547.3 819.7,545.6 820.8,546.9 818.9,548.6zM851.5,544.2 853.4,547.6 851.9,548.4 849.9,545.1zM846.4,549.9 849.5,547.3 851.1,549.2 848.0,551.8zM895.8,555.3 899.1,554.1 899.7,555.7 896.4,557.0zM919.8,535.4 921.9,537.2 920.9,538.4 918.7,536.6zM919.7,532.0 922.9,530.8 923.7,533.0 920.5,534.1zM948.4,526.0 948.7,527.6 947.3,527.9 947.0,526.2zM916.6,543.1 918.3,540.1 920.0,541.1 918.3,544.1zM894.5,550.5 895.3,551.9 893.5,552.9 892.8,551.5zM937.7,532.5 938.9,533.5 938.1,534.5 936.9,533.5zM867.6,541.1 870.8,542.2 870.3,543.7 867.1,542.5zM900.3,550.1 904.4,551.6 903.8,553.3 899.7,551.8zM887.4,526.1 888.1,530.3 886.5,530.6 885.7,526.4zM821.8,550.1 823.1,549.7 823.6,551.1 822.3,551.5zM895.9,549.1 897.8,547.5 899.0,549.0 897.1,550.5zM886.9,534.5 889.0,532.7 890.3,534.3 888.2,536.0zM889.6,554.2 893.1,551.3 894.9,553.5 891.4,556.4zM888.9,553.0 892.3,550.2 893.5,551.6 890.1,554.5zM889.2,553.2 891.2,554.0 890.2,556.5 888.3,555.8zM898.5,536.2 901.3,538.6 899.6,540.6 896.7,538.3zM890.4,548.3 892.7,544.4 894.4,545.4 892.2,549.3zM891.1,542.8 891.8,546.7 889.7,547.1 889.0,543.2zM144.9,549.7 146.6,551.2 146.0,552.0 144.2,550.5zM115.6,529.9 118.1,527.8 119.6,529.6 117.1,531.7zM186.5,531.4 189.5,530.3 190.3,532.3 187.3,533.4zM197.1,531.7 198.1,530.1 199.5,530.9 198.6,532.5zM120.5,535.2 121.5,533.6 122.6,534.2 121.7,535.9zM125.3,548.6 126.5,549.1 126.0,550.5 124.8,550.0zM102.3,521.0 102.6,522.3 100.9,522.6 100.7,521.3zM158.0,532.6 160.1,530.8 160.9,531.8 158.8,533.5zM171.2,543.4 174.8,543.4 174.8,544.9 171.2,544.9zM117.3,544.4 120.6,543.2 121.2,544.8 117.9,546.0zM101.9,549.7 103.9,550.4 103.6,551.3 101.6,550.5zM122.9,522.7 125.4,522.7 125.4,525.0 122.9,525.0zM122.8,522.1 124.2,524.5 123.3,525.0 121.9,522.6zM197.6,553.5 200.8,552.3 201.4,553.8 198.1,555.0zM168.9,540.7 169.3,543.0 168.2,543.2 167.8,540.9zM154.0,550.3 157.1,552.9 156.0,554.2 152.9,551.6zM192.4,534.6 195.4,534.6 195.4,536.8 192.4,536.8zM135.1,554.6 135.3,556.0 134.0,556.2 133.8,554.9zM105.9,521.3 108.1,520.5 108.4,521.3 106.2,522.1zM187.3,537.9 188.3,537.1 189.1,538.1 188.1,538.9zM178.4,532.6 178.9,535.2 177.4,535.5 177.0,532.9zM199.7,551.1 200.4,554.8 198.4,555.1 197.7,551.4zM159.4,523.8 160.1,527.2 158.1,527.6 157.5,524.1zM155.7,546.2 159.1,547.5 158.5,548.9 155.1,547.7zM183.4,521.4 185.2,524.6 184.1,525.2 182.3,522.0zM175.4,549.5 176.8,547.0 178.9,548.2 177.4,550.7zM107.1,534.7 107.3,536.2 105.0,536.6 104.7,535.1zM169.9,536.9 171.6,539.8 170.4,540.5 168.8,537.6zM136.9,528.9 139.8,526.5 140.7,527.6 137.8,530.0zM146.7,554.5 147.1,557.0 144.8,557.4 144.4,554.9zM98.4,556.0 101.0,553.8 101.7,554.6 99.1,556.8zM171.6,543.1 174.9,541.9 175.3,543.0 172.0,544.2zM123.9,530.4 125.7,531.9 124.8,533.0 123.0,531.5zM123.7,551.1 124.1,553.5 123.0,553.7 122.5,551.3zM111.5,536.8 113.6,538.5 113.0,539.3 110.8,537.5zM105.6,518.9 108.9,520.2 108.2,522.2 104.8,521.0zM188.5,522.8 189.7,525.0 188.8,525.5 187.6,523.4zM206.7,524.6 209.6,524.6 209.6,526.6 206.7,526.6zM199.1,520.3 202.4,519.1 202.8,520.3 199.5,521.5zM197.0,537.8 198.9,537.8 198.9,539.9 197.0,539.9zM201.7,522.8 203.4,521.4 204.2,522.4 202.5,523.7zM199.0,545.7 202.1,545.7 202.1,546.8 199.0,546.8zM202.7,534.5 203.9,533.5 204.7,534.4 203.5,535.4zM205.5,523.3 207.8,525.2 206.6,526.6 204.3,524.7zM201.9,539.0 204.9,540.1 204.1,542.3 201.1,541.2zM199.3,534.4 199.7,536.9 198.4,537.2 197.9,534.6zM208.6,530.5 209.0,532.8 207.9,533.0 207.5,530.7zM201.7,527.1 203.0,526.0 204.1,527.3 202.8,528.4zM888.1,402.4 890.7,404.7 889.5,406.1 886.9,403.9zM891.4,389.6 894.4,392.1 893.4,393.3 890.4,390.8zM897.5,389.5 901.2,389.5 901.2,392.5 897.5,392.5zM891.9,397.6 893.8,396.1 895.7,398.4 893.8,399.9zM888.4,390.8 890.8,390.8 890.8,392.6 888.4,392.6zM890.2,394.8 894.6,393.2 895.6,396.0 891.2,397.6zM882.8,397.8 887.5,397.8 887.5,399.4 882.8,399.4zM154.4,277.8 156.4,276.2 157.0,276.8 155.0,278.5zM300.6,349.5 302.2,350.8 301.3,351.9 299.7,350.5zM594.2,388.0 595.3,387.0 596.2,388.1 595.1,389.1zM838.7,288.7 839.1,290.9 837.8,291.2 837.4,288.9zM589.3,314.8 591.2,316.4 590.7,317.0 588.8,315.4zM679.4,392.4 680.2,393.8 679.2,394.4 678.4,393.0zM143.7,508.4 145.5,507.8 145.8,508.4 144.0,509.1zM900.4,327.8 900.9,326.8 902.0,327.5 901.4,328.4zM830.7,458.3 832.2,458.9 831.8,459.9 830.4,459.4zM422.1,322.0 422.9,321.2 423.6,322.1 422.8,322.8zM572.8,531.3 574.5,531.9 574.1,532.9 572.4,532.3zM496.0,536.9 497.4,538.0 497.0,538.6 495.6,537.4zM172.8,257.4 174.7,257.4 174.7,258.4 172.8,258.4zM173.5,262.0 174.5,260.1 175.6,260.7 174.5,262.6zM427.0,410.1 427.7,410.8 427.2,411.4 426.4,410.7zM495.5,498.3 496.7,499.3 496.1,500.0 494.9,499.0zM201.8,536.1 202.2,538.4 200.8,538.7 200.4,536.4zM138.2,452.3 139.8,451.0 140.7,452.2 139.2,453.5zM422.9,483.9 424.5,484.5 424.3,485.2 422.6,484.6zM910.2,382.7 912.4,381.9 912.7,382.7 910.5,383.5zM209.8,539.9 210.8,541.7 209.7,542.3 208.7,540.5zM319.5,406.6 319.7,407.7 318.7,407.8 318.5,406.7zM811.6,416.4 813.7,417.2 813.2,418.5 811.2,417.8zM118.3,441.9 120.4,441.9 120.4,442.9 118.3,442.9zM184.7,339.7 185.0,341.5 184.2,341.6 183.9,339.8zM409.5,335.9 412.0,335.9 412.0,336.6 409.5,336.6zM414.9,491.6 416.5,491.6 416.5,492.7 414.9,492.7zM772.4,420.6 772.8,422.8 771.6,423.0 771.2,420.9zM259.8,472.0 260.7,470.5 262.0,471.3 261.1,472.8zM591.6,315.0 593.0,314.5 593.4,315.6 592.0,316.1zM493.4,543.1 493.7,544.5 492.5,544.7 492.3,543.3zM275.1,413.8 275.6,412.8 276.5,413.3 276.0,414.3zM887.9,310.1 889.1,311.1 888.5,311.9 887.3,310.9zM598.8,358.7 599.8,360.5 598.4,361.2 597.4,359.5zM352.4,398.0 353.6,399.0 352.8,399.9 351.6,398.9zM364.3,555.0 366.7,554.1 366.9,554.8 364.5,555.6zM687.3,406.0 687.7,408.5 686.2,408.7 685.7,406.2zM257.1,345.1 259.2,344.4 259.6,345.2 257.4,346.0zM249.6,377.6 250.7,375.6 252.0,376.3 250.8,378.3zM658.1,417.4 659.3,415.4 659.9,415.7 658.7,417.8zM495.7,281.3 498.0,281.3 498.0,282.1 495.7,282.1zM738.7,497.8 740.4,497.2 740.9,498.6 739.2,499.2zM771.2,340.0 772.1,339.1 773.1,340.3 772.1,341.1zM258.2,465.5 259.3,467.4 258.7,467.8 257.5,465.8zM336.2,440.5 337.7,439.9 338.1,441.0 336.6,441.5zM131.3,543.7 132.0,542.6 132.6,543.0 132.0,544.1zM264.8,331.4 266.4,332.8 265.8,333.5 264.2,332.1zM530.7,291.9 532.0,290.8 532.5,291.4 531.2,292.5zM521.4,271.4 522.7,271.0 523.2,272.2 521.9,272.6z" fill="#fbf3b0"/>
<path d="M355.3,440.9 356.6,440.9 356.6,442.6 355.3,442.6zM365.5,414.2 367.8,415.0 367.2,416.6 365.0,415.8zM357.0,443.7 359.3,442.9 359.8,444.1 357.4,444.9zM373.5,410.9 375.0,412.2 374.0,413.4 372.4,412.1zM365.5,455.1 368.2,457.3 367.3,458.4 364.6,456.1zM374.8,460.2 376.3,461.5 375.3,462.6 373.8,461.4zM376.4,466.8 378.0,466.8 378.0,467.9 376.4,467.9zM361.0,413.9 363.7,413.0 364.1,413.9 361.4,414.9zM364.1,467.1 367.5,468.4 366.8,470.2 363.4,468.9zM359.4,415.8 361.9,418.0 360.9,419.2 358.3,417.1zM373.1,468.4 374.8,466.9 375.8,468.0 374.0,469.5zM364.9,414.7 365.8,414.0 367.3,415.8 366.4,416.6zM355.7,424.3 357.5,425.0 356.9,426.6 355.1,426.0zM362.2,413.3 362.8,417.0 361.5,417.2 360.8,413.5zM365.7,463.3 368.0,462.5 368.8,464.6 366.5,465.4zM376.4,409.8 378.6,409.8 378.6,412.2 376.4,412.2zM355.4,438.2 358.9,438.2 358.9,439.8 355.4,439.8zM348.4,448.7 351.6,447.5 352.4,449.6 349.2,450.8zM391.6,554.2 393.4,555.7 392.4,556.9 390.6,555.4zM408.0,528.7 408.7,532.5 407.2,532.7 406.5,529.0zM323.1,482.9 325.5,480.9 326.4,482.1 324.0,484.1zM344.6,486.4 345.2,487.4 343.1,488.6 342.5,487.6zM380.9,480.8 383.9,479.7 384.7,481.9 381.7,483.0zM319.5,493.1 321.5,493.1 321.5,494.4 319.5,494.4zM404.7,507.7 407.3,507.7 407.3,509.6 404.7,509.6zM342.8,485.8 344.0,483.8 344.8,484.2 343.6,486.2zM357.8,534.9 359.6,533.4 360.6,534.5 358.7,536.0zM411.9,500.8 413.7,499.3 414.6,500.4 412.9,501.9zM414.4,538.2 416.2,535.1 417.3,535.7 415.5,538.8zM323.7,515.2 324.3,518.6 322.7,518.9 322.1,515.5zM396.8,508.8 398.0,510.8 396.6,511.6 395.4,509.6zM323.5,538.9 324.1,537.8 325.0,538.3 324.4,539.4zM349.1,493.6 351.0,490.3 352.7,491.3 350.8,494.6zM319.2,513.8 321.5,513.8 321.5,516.1 319.2,516.1zM411.4,504.7 412.4,503.0 414.4,504.2 413.5,505.9zM404.9,484.6 406.5,487.4 405.2,488.1 403.6,485.4zM413.5,541.8 414.3,540.5 415.7,541.3 414.9,542.6zM380.7,530.8 383.2,528.7 384.6,530.3 382.0,532.5zM341.2,496.0 342.8,496.0 342.8,498.2 341.2,498.2zM423.8,484.6 424.3,487.0 422.2,487.4 421.8,484.9zM371.1,549.4 372.6,549.4 372.6,551.0 371.1,551.0zM357.5,511.5 359.3,514.6 357.5,515.6 355.7,512.5zM369.4,502.6 370.6,502.1 371.0,503.2 369.7,503.6zM318.3,545.6 321.3,543.1 322.3,544.3 319.3,546.8zM334.0,534.8 335.3,535.2 334.5,537.2 333.3,536.8zM339.2,485.3 340.6,486.5 340.0,487.2 338.6,486.0zM391.5,497.6 394.1,498.5 393.6,499.9 391.0,499.0zM325.8,494.2 327.0,493.2 327.5,493.9 326.4,494.9zM365.7,486.9 368.9,488.1 368.3,489.8 365.1,488.6zM350.1,498.7 351.2,496.9 353.2,498.0 352.1,499.9zM395.3,539.3 396.2,538.5 397.3,539.8 396.3,540.6zM357.4,510.1 359.2,506.9 360.1,507.4 358.2,510.6zM416.3,488.7 417.8,486.2 419.4,487.1 418.0,489.6zM419.8,533.7 422.7,533.7 422.7,535.1 419.8,535.1zM363.2,526.0 365.4,525.2 366.0,527.0 363.8,527.8zM398.2,508.8 399.4,506.6 401.5,507.8 400.2,510.0zM406.2,514.0 407.1,512.5 408.5,513.3 407.6,514.8zM369.4,551.7 371.0,548.9 372.6,549.8 371.0,552.6zM345.2,508.3 345.9,509.3 344.6,510.1 343.9,509.0zM409.7,541.1 410.7,541.9 409.3,543.6 408.3,542.7zM409.2,523.5 411.0,522.9 411.4,523.8 409.6,524.5zM385.1,533.8 386.2,535.6 385.3,536.2 384.2,534.3zM399.8,462.7 400.8,463.6 399.5,465.1 398.5,464.3zM376.8,521.5 379.6,520.5 380.0,521.6 377.2,522.6zM377.5,532.9 380.3,535.3 379.1,536.7 376.3,534.3zM386.3,518.7 388.6,520.6 387.3,522.2 385.0,520.3zM390.9,544.5 393.1,544.5 393.1,546.4 390.9,546.4zM407.4,533.7 410.6,532.6 411.0,533.8 407.8,534.9zM644.4,394.2 646.6,396.1 645.8,397.0 643.6,395.2zM657.9,380.0 658.6,384.1 657.0,384.4 656.3,380.3zM591.5,377.1 594.3,374.8 595.5,376.2 592.7,378.5zM592.0,372.0 593.3,369.8 595.5,371.0 594.2,373.3zM652.8,380.7 656.8,379.2 657.6,381.4 653.7,382.9zM604.5,401.5 608.4,400.1 609.2,402.5 605.4,403.9zM650.5,383.7 652.1,382.3 653.0,383.3 651.3,384.7zM647.1,373.9 648.2,375.8 646.8,376.6 645.7,374.7zM656.2,384.5 658.4,385.3 657.6,387.4 655.4,386.6zM631.0,385.6 632.2,387.8 630.4,388.9 629.1,386.7zM614.0,374.3 617.3,375.5 616.6,377.4 613.3,376.2zM627.9,396.8 629.4,395.5 630.4,396.7 628.9,398.0zM612.5,366.2 615.2,368.4 614.2,369.6 611.5,367.4zM656.6,381.2 660.8,382.7 660.1,384.6 655.9,383.1zM630.2,389.5 632.0,386.3 633.9,387.4 632.1,390.5zM591.5,390.0 593.1,392.7 590.9,394.0 589.3,391.3zM597.6,359.8 599.1,360.3 598.6,361.6 597.1,361.1zM677.9,391.1 679.2,393.3 677.1,394.5 675.8,392.3zM731.7,394.4 732.7,396.1 730.4,397.5 729.4,395.8zM704.3,379.2 707.2,379.2 707.2,380.9 704.3,380.9zM722.9,384.4 724.9,386.1 723.7,387.6 721.7,385.9zM689.4,431.9 692.2,434.2 691.6,435.0 688.8,432.6zM680.0,426.7 683.2,426.7 683.2,429.0 680.0,429.0zM649.5,409.7 652.2,409.7 652.2,411.5 649.5,411.5zM637.8,399.5 639.8,397.8 641.3,399.6 639.3,401.3zM693.7,438.5 694.5,439.9 692.6,441.0 691.8,439.6zM672.3,399.1 673.3,397.3 674.6,398.1 673.6,399.8zM625.0,408.3 627.1,410.1 626.0,411.4 623.9,409.6zM635.2,399.0 639.1,397.5 639.6,398.9 635.7,400.3zM605.3,427.6 607.0,430.7 605.0,431.9 603.3,428.8zM675.5,402.3 676.7,403.3 675.1,405.2 673.9,404.2zM608.6,414.6 609.0,416.8 606.5,417.2 606.1,415.0zM668.7,453.3 671.0,455.3 670.3,456.1 668.0,454.1zM621.5,413.3 623.2,416.3 621.5,417.3 619.8,414.2zM669.0,409.4 672.1,410.6 671.4,412.6 668.2,411.4zM691.7,410.4 693.5,407.4 694.4,407.9 692.6,410.9zM687.4,417.4 689.1,416.8 689.5,417.9 687.8,418.5zM684.7,399.9 686.4,402.9 685.5,403.4 683.8,400.5zM681.4,397.1 682.9,399.6 681.5,400.4 680.1,397.8zM649.0,395.1 650.5,393.9 651.7,395.2 650.2,396.5zM654.1,416.7 654.3,418.0 652.3,418.3 652.1,417.0zM674.7,449.5 677.6,450.6 677.2,451.8 674.2,450.8zM678.4,442.0 681.4,444.5 680.8,445.2 677.7,442.7zM689.8,411.7 692.3,409.6 693.7,411.3 691.3,413.4zM634.5,436.1 636.1,435.5 636.8,437.4 635.2,438.0zM612.0,415.2 612.6,418.7 610.9,419.1 610.3,415.5zM610.7,417.3 611.5,421.4 609.5,421.8 608.7,417.6zM649.8,424.8 651.2,425.3 650.9,426.4 649.4,425.8zM672.4,453.2 674.0,450.2 675.4,451.0 673.7,453.9zM617.1,399.8 618.3,397.7 619.3,398.3 618.1,400.4zM622.4,405.8 625.1,406.8 624.3,409.0 621.6,408.1zM631.0,419.5 633.0,417.8 633.7,418.6 631.7,420.3zM632.6,425.7 633.8,426.2 633.0,428.5 631.7,428.1zM626.6,413.0 627.6,414.7 625.7,415.9 624.6,414.1zM641.0,427.9 643.2,427.9 643.2,429.0 641.0,429.0zM686.1,416.8 687.4,414.5 689.1,415.6 687.8,417.8zM601.6,439.1 605.0,439.1 605.0,440.3 601.6,440.3zM611.4,397.0 611.7,398.9 609.5,399.3 609.1,397.4zM612.9,410.7 616.8,410.7 616.8,412.9 612.9,412.9zM607.3,429.1 608.8,428.6 609.4,430.2 608.0,430.8zM638.6,396.2 639.3,397.4 637.7,398.3 637.0,397.1zM650.1,403.1 651.5,400.8 652.5,401.4 651.2,403.7zM684.9,401.4 686.1,403.4 685.1,404.0 684.0,402.0zM656.6,438.5 658.4,438.5 658.4,440.5 656.6,440.5zM673.9,433.6 677.5,433.6 677.5,434.8 673.9,434.8zM695.1,415.0 697.8,415.0 697.8,416.2 695.1,416.2zM682.8,428.5 684.7,427.8 685.2,429.4 683.4,430.0zM640.9,421.6 642.8,420.0 643.6,420.9 641.7,422.5zM691.6,396.0 693.5,397.7 692.4,399.0 690.4,397.3zM660.9,427.6 664.2,424.9 665.4,426.3 662.1,429.1zM697.0,433.2 699.2,433.2 699.2,435.6 697.0,435.6zM663.7,424.4 666.6,424.4 666.6,426.0 663.7,426.0zM649.9,438.5 652.6,438.5 652.6,440.4 649.9,440.4zM668.5,441.4 671.5,441.4 671.5,444.1 668.5,444.1zM673.9,425.7 675.8,428.9 673.9,430.0 672.1,426.8zM656.3,408.2 657.5,410.3 655.6,411.4 654.4,409.3zM692.6,420.4 693.9,418.1 696.2,419.4 694.9,421.7zM674.4,415.3 675.0,419.0 672.5,419.5 671.9,415.8zM696.6,417.6 698.1,418.2 697.2,420.6 695.7,420.1zM677.2,405.2 679.1,408.5 678.1,409.0 676.2,405.7zM658.7,435.3 661.0,437.2 660.2,438.1 657.9,436.1zM693.5,422.1 696.9,424.9 695.4,426.7 692.0,423.8zM646.7,439.4 648.4,442.3 646.8,443.2 645.1,440.3zM684.4,407.1 686.8,408.0 685.9,410.4 683.5,409.5zM687.8,430.7 691.9,429.2 692.3,430.5 688.3,431.9zM650.7,431.1 654.3,429.8 655.0,431.8 651.4,433.1zM652.5,436.5 654.6,437.3 654.2,438.5 652.1,437.7zM676.3,407.5 677.9,408.1 677.2,410.0 675.6,409.4zM640.5,419.6 642.3,419.6 642.3,422.2 640.5,422.2zM668.1,431.6 668.6,434.4 666.8,434.8 666.3,432.0zM670.8,404.8 673.7,405.9 672.9,408.2 669.9,407.1zM652.4,401.8 655.4,404.3 654.4,405.5 651.4,403.0zM865.2,352.3 868.6,355.2 867.1,357.0 863.7,354.1zM934.1,303.0 934.6,305.8 933.5,306.0 933.0,303.2zM913.4,348.6 917.0,348.6 917.0,350.9 913.4,350.9zM911.7,353.2 912.8,351.2 914.8,352.4 913.7,354.3zM922.0,343.9 924.6,346.0 923.7,347.1 921.1,344.9zM858.8,341.4 861.1,337.5 862.3,338.3 860.1,342.1zM854.5,334.4 857.3,335.4 856.8,336.6 854.1,335.6zM852.4,344.6 853.1,345.8 851.6,346.7 850.9,345.4zM906.7,343.8 907.1,345.8 905.0,346.2 904.7,344.1zM932.6,313.2 935.1,313.2 935.1,315.6 932.6,315.6zM850.8,302.5 853.4,300.4 854.1,301.2 851.5,303.4zM849.6,334.9 850.7,333.0 852.1,333.8 851.0,335.7zM855.6,340.9 857.1,339.7 858.2,341.0 856.7,342.2zM851.3,301.6 854.8,301.6 854.8,303.9 851.3,303.9zM909.1,351.4 911.2,347.8 913.3,349.0 911.2,352.6zM904.9,352.8 907.4,351.9 908.3,354.3 905.8,355.2zM847.6,353.9 849.7,352.2 850.7,353.4 848.6,355.1zM878.6,321.0 883.0,321.0 883.0,322.1 878.6,322.1zM867.2,361.1 869.8,358.9 871.0,360.4 868.4,362.6zM856.6,306.9 860.0,304.1 861.0,305.3 857.6,308.2zM862.4,315.4 864.5,317.1 863.6,318.2 861.5,316.4zM855.4,362.9 856.8,360.5 857.9,361.1 856.5,363.5zM903.0,332.6 903.7,331.4 905.2,332.3 904.5,333.5zM879.9,354.8 881.7,356.3 881.1,357.0 879.3,355.5zM878.7,329.6 878.9,331.1 877.4,331.4 877.1,329.9zM860.2,351.0 861.4,351.4 860.7,353.3 859.5,352.9zM884.6,334.8 888.2,334.8 888.2,336.0 884.6,336.0zM855.7,360.3 857.4,359.6 857.8,360.7 856.1,361.3zM873.3,347.4 874.8,346.2 875.8,347.5 874.4,348.7zM851.5,355.4 854.4,356.5 854.0,357.7 851.1,356.6zM865.2,323.2 867.5,321.3 868.9,322.9 866.6,324.8zM930.3,348.7 932.3,348.7 932.3,350.3 930.3,350.3zM877.0,359.4 880.8,359.4 880.8,361.8 877.0,361.8zM866.6,335.9 870.2,337.2 869.6,338.7 866.1,337.4zM892.0,400.7 892.4,402.9 891.0,403.2 890.6,401.0zM873.5,438.0 875.9,436.0 876.7,437.0 874.3,438.9zM885.1,429.2 887.3,428.4 887.8,429.8 885.6,430.6zM895.8,435.0 896.7,436.6 894.3,438.0 893.3,436.4zM888.4,395.6 891.9,394.3 892.7,396.5 889.2,397.8zM898.4,396.4 900.6,392.7 902.8,394.0 900.7,397.7zM875.2,404.4 877.3,408.1 876.0,408.8 873.9,405.1zM897.9,426.7 902.4,425.0 902.8,426.1 898.3,427.7zM890.8,413.9 893.9,416.5 892.3,418.3 889.2,415.8zM892.1,435.2 892.7,438.6 891.5,438.8 890.9,435.4zM855.8,493.9 857.5,492.5 858.8,494.0 857.1,495.5zM871.3,490.6 875.9,488.9 876.8,491.2 872.1,492.9zM868.0,495.0 872.3,496.6 871.4,499.1 867.0,497.6zM856.9,472.1 858.5,471.5 859.2,473.3 857.6,473.9zM874.3,493.3 876.2,494.9 875.4,495.8 873.5,494.2zM826.2,492.3 829.6,495.1 828.2,496.7 824.9,493.9zM801.9,496.0 804.2,500.1 802.5,501.0 800.2,497.0zM798.6,503.8 802.0,501.0 803.5,502.7 800.1,505.6zM808.1,492.9 812.3,491.4 813.0,493.5 808.9,495.0zM835.2,494.9 835.8,498.4 834.2,498.7 833.6,495.1zM840.9,490.5 843.9,490.5 843.9,493.0 840.9,493.0zM808.8,496.8 811.0,496.0 811.9,498.6 809.8,499.4zM821.2,487.5 822.0,492.2 819.8,492.6 819.0,487.8zM846.0,511.9 849.1,513.1 848.6,514.4 845.5,513.3zM847.6,508.9 848.9,506.7 851.0,507.9 849.7,510.1zM799.8,506.5 801.3,509.2 799.9,510.0 798.3,507.4zM804.8,503.0 805.5,506.9 802.9,507.4 802.2,503.5zM823.1,509.6 825.3,509.6 825.3,511.1 823.1,511.1zM803.7,488.0 807.5,489.4 806.7,491.6 802.9,490.2zM852.3,514.4 855.7,514.4 855.7,517.2 852.3,517.2zM829.7,532.8 833.0,534.1 832.1,536.5 828.8,535.3zM930.4,541.1 932.0,543.9 931.2,544.3 929.6,541.6zM859.2,552.1 859.9,550.8 862.0,552.0 861.2,553.3zM838.8,530.3 841.6,532.6 840.0,534.5 837.2,532.2zM941.4,530.1 942.1,534.2 940.9,534.4 940.2,530.3zM903.8,540.0 905.6,543.1 904.7,543.7 902.9,540.5zM903.2,554.5 904.9,556.0 904.1,557.0 902.3,555.5zM848.3,532.6 849.1,534.0 847.1,535.2 846.3,533.7zM851.6,532.5 852.1,535.4 850.4,535.7 849.9,532.8zM827.6,529.3 829.1,531.8 827.8,532.5 826.4,530.0zM835.8,540.8 839.3,539.5 839.8,541.0 836.3,542.2zM857.0,535.8 858.7,534.4 859.6,535.4 857.9,536.8zM862.6,529.3 863.3,533.3 862.4,533.4 861.7,529.5zM933.3,548.3 936.9,548.3 936.9,549.8 933.3,549.8zM913.2,531.6 913.9,535.2 912.3,535.5 911.7,531.9zM863.9,547.9 866.0,544.2 866.9,544.7 864.8,548.4zM862.6,539.5 864.8,537.6 866.4,539.5 864.2,541.4zM947.1,552.4 948.6,551.2 949.8,552.6 948.3,553.9zM948.0,555.9 950.1,552.1 951.1,552.7 948.9,556.4zM878.1,532.1 880.2,528.5 881.3,529.2 879.3,532.7zM831.3,553.6 833.6,552.7 834.0,553.8 831.7,554.6zM916.6,536.7 917.9,537.8 916.4,539.5 915.2,538.4zM886.4,555.3 888.0,552.5 889.0,553.1 887.5,555.9zM861.7,543.1 862.8,544.1 862.0,545.1 860.8,544.1zM862.2,541.9 864.4,541.1 865.0,542.7 862.8,543.5zM820.4,526.9 823.3,527.9 822.9,529.1 820.0,528.0zM922.1,528.6 924.1,527.8 924.7,529.4 922.7,530.2zM874.9,551.8 876.5,553.1 874.8,555.2 873.2,553.8zM844.0,553.7 847.0,556.2 846.3,557.1 843.3,554.6zM927.5,538.9 930.0,541.0 929.2,541.9 926.8,539.8zM896.4,556.7 898.3,553.3 900.3,554.4 898.4,557.8zM852.8,543.3 854.3,542.0 855.8,543.7 854.2,545.1zM894.7,551.3 897.0,553.3 896.4,554.0 894.0,552.0zM107.4,523.3 108.5,525.1 107.6,525.6 106.5,523.8zM127.3,520.5 128.6,522.9 127.5,523.5 126.1,521.2zM179.8,518.9 180.5,522.4 178.3,522.8 177.7,519.3zM194.5,527.9 195.9,530.3 194.7,531.0 193.3,528.6zM122.0,541.0 123.6,543.8 122.6,544.4 120.9,541.6zM174.5,531.8 176.6,531.8 176.6,533.0 174.5,533.0zM192.5,525.2 195.4,527.6 193.9,529.3 191.0,527.0zM122.3,543.0 123.7,545.5 122.1,546.4 120.6,543.9zM173.5,543.6 176.3,546.0 175.4,547.0 172.6,544.6zM108.9,539.5 110.9,537.8 112.3,539.5 110.3,541.2zM168.7,520.6 170.0,520.6 170.0,521.7 168.7,521.7zM156.1,533.2 157.6,534.4 156.9,535.2 155.4,534.0zM185.3,526.8 186.7,527.9 185.9,528.9 184.5,527.8zM152.9,531.8 156.1,533.0 155.6,534.5 152.3,533.3zM100.4,551.2 102.0,548.3 103.4,549.1 101.8,552.0zM161.9,542.5 163.3,545.1 161.8,546.0 160.3,543.4zM610.8,287.9 612.0,287.5 612.3,288.2 611.1,288.7zM580.4,436.8 581.0,437.7 579.9,438.3 579.4,437.5zM540.8,286.7 541.8,285.8 542.6,286.8 541.6,287.7zM842.7,330.6 843.0,332.4 841.9,332.6 841.6,330.8zM752.8,403.7 754.3,404.2 754.0,405.1 752.5,404.5zM620.0,350.8 620.4,352.9 618.9,353.2 618.6,351.0zM362.1,415.7 363.1,416.5 362.5,417.2 361.5,416.4zM172.1,401.0 173.3,398.9 174.5,399.6 173.3,401.7zM470.9,408.0 472.3,406.9 472.7,407.4 471.4,408.6zM681.7,462.3 683.0,462.7 682.5,464.2 681.2,463.7zM748.4,546.2 750.2,547.6 749.3,548.7 747.5,547.2zM159.2,397.7 159.6,399.8 158.7,400.0 158.3,397.8zM947.9,362.8 948.0,363.9 947.2,364.1 947.0,363.0zM783.8,512.0 784.8,511.6 785.2,512.7 784.2,513.1zM874.7,323.2 876.0,322.7 876.3,323.5 875.0,324.0zM815.5,258.6 816.6,259.0 816.1,260.4 815.0,260.0zM272.3,336.9 273.8,337.4 273.4,338.6 271.8,338.0zM655.8,264.2 656.9,263.9 657.4,265.2 656.3,265.6zM853.1,428.6 854.6,428.1 854.9,429.0 853.4,429.5zM817.2,366.8 819.2,366.8 819.2,368.0 817.2,368.0zM118.7,300.9 119.7,302.7 118.6,303.3 117.6,301.5zM812.3,397.2 813.4,396.3 814.1,397.1 813.0,398.0zM596.3,317.7 596.7,319.8 595.9,319.9 595.5,317.8zM520.8,271.3 521.4,270.3 522.1,270.7 521.5,271.7zM213.5,482.5 214.5,480.7 215.4,481.3 214.4,483.1zM255.9,469.4 257.6,468.0 258.3,468.8 256.6,470.2zM403.7,533.8 404.8,534.2 404.5,535.0 403.4,534.6zM376.0,453.8 377.3,453.8 377.3,455.3 376.0,455.3zM340.4,395.3 341.6,393.2 342.7,393.8 341.5,395.9zM507.9,495.3 508.7,495.9 507.8,496.9 507.1,496.3z" fill="#f4874c"/>
<path d="M366.2,410.1 366.9,411.3 365.9,411.8 365.2,410.7zM361.9,444.8 363.2,444.4 363.8,445.9 362.4,446.4zM357.6,465.7 359.4,464.1 361.0,465.9 359.1,467.5zM367.3,467.5 369.5,465.7 370.5,466.9 368.3,468.7zM378.2,440.6 379.1,439.2 380.5,440.0 379.7,441.4zM353.4,457.0 357.3,457.0 357.3,459.2 353.4,459.2zM354.0,468.8 354.2,470.0 352.5,470.3 352.3,469.1zM351.2,440.2 353.0,437.1 354.8,438.1 353.0,441.3zM353.3,409.9 354.0,408.6 355.4,409.4 354.6,410.7zM363.4,461.0 367.2,461.0 367.2,463.3 363.4,463.3zM323.8,507.1 324.9,505.2 326.3,506.0 325.2,507.9zM322.2,499.3 325.7,498.0 326.1,499.1 322.6,500.4zM395.4,492.2 395.9,495.4 393.6,495.8 393.1,492.6zM365.9,503.5 367.8,504.2 367.1,506.1 365.2,505.4zM370.9,539.2 374.5,539.2 374.5,540.1 370.9,540.1zM387.3,549.2 388.7,550.4 388.2,551.1 386.8,549.9zM358.0,528.3 360.4,527.4 360.9,529.0 358.5,529.9zM410.2,555.3 411.7,554.1 412.4,554.8 410.9,556.0zM330.7,518.4 333.5,519.5 333.0,520.9 330.2,519.8zM422.1,529.0 423.9,530.5 423.3,531.2 421.5,529.7zM358.4,544.7 362.4,544.7 362.4,546.1 358.4,546.1zM422.5,525.7 424.7,526.5 424.0,528.5 421.8,527.7zM319.9,521.4 322.0,521.4 322.0,523.1 319.9,523.1zM320.6,524.0 322.3,522.5 323.7,524.2 322.0,525.6zM335.8,488.9 337.3,489.4 336.8,490.7 335.3,490.1zM315.8,497.6 319.0,497.6 319.0,498.5 315.8,498.5zM383.5,513.4 385.1,512.0 386.3,513.4 384.7,514.8zM369.9,510.1 373.5,508.8 373.9,509.9 370.3,511.2zM377.2,485.8 379.3,485.8 379.3,487.3 377.2,487.3zM412.6,531.8 413.1,534.7 411.1,535.1 410.6,532.1zM379.6,502.5 381.3,499.5 382.7,500.3 380.9,503.3zM407.1,504.5 407.6,507.2 405.7,507.5 405.3,504.8zM402.0,519.2 403.7,520.6 402.3,522.3 400.6,520.9zM393.3,509.7 395.0,512.6 393.9,513.1 392.3,510.2zM392.1,512.2 392.7,515.7 391.5,515.9 390.8,512.5zM390.4,492.5 391.6,490.4 393.2,491.4 392.0,493.4zM397.4,464.5 398.2,465.8 396.3,466.9 395.6,465.6zM377.6,525.3 380.3,524.3 381.1,526.5 378.4,527.5zM406.8,473.1 408.1,473.1 408.1,475.1 406.8,475.1zM401.0,462.8 402.0,462.0 403.2,463.4 402.2,464.2zM410.3,471.0 412.3,474.4 411.3,474.9 409.4,471.6zM389.7,533.9 392.6,536.4 391.3,537.9 388.4,535.5zM409.2,554.3 409.5,555.9 407.1,556.3 406.9,554.7zM394.4,512.0 397.0,512.0 397.0,513.5 394.4,513.5zM594.8,376.4 597.2,378.3 596.2,379.5 593.9,377.5zM626.6,368.2 628.7,368.9 628.2,370.0 626.2,369.3zM591.4,403.6 595.5,403.6 595.5,405.5 591.4,405.5zM656.5,372.1 658.2,371.4 658.8,373.1 657.1,373.7zM633.6,376.3 635.4,377.0 634.5,379.4 632.7,378.8zM633.0,393.1 634.7,393.7 634.2,395.2 632.5,394.5zM620.8,364.8 624.1,362.1 625.6,363.9 622.3,366.7zM613.6,392.6 615.6,391.9 616.2,393.6 614.3,394.3zM651.3,373.7 652.8,375.0 651.6,376.4 650.1,375.1zM625.0,371.6 626.7,373.1 625.8,374.1 624.1,372.7zM660.6,403.6 664.6,405.1 664.2,406.2 660.1,404.8zM653.9,363.8 655.8,360.6 657.1,361.4 655.3,364.6zM646.0,360.5 646.7,364.6 644.2,365.0 643.4,361.0zM659.6,397.4 661.7,393.8 663.7,395.0 661.6,398.6zM634.0,389.1 637.0,386.6 637.7,387.4 634.7,390.0zM598.6,360.9 600.3,359.5 601.0,360.3 599.3,361.8zM623.5,383.8 625.3,383.1 625.7,384.3 623.9,384.9zM623.4,389.9 625.1,391.3 624.0,392.6 622.3,391.2zM656.4,365.3 659.7,368.1 658.7,369.3 655.4,366.5zM621.6,392.7 623.3,392.1 623.8,393.4 622.1,394.1zM652.3,362.1 653.0,366.1 650.5,366.5 649.8,362.5zM619.4,384.3 621.1,383.6 621.7,385.2 620.0,385.9zM614.8,393.3 615.5,397.2 613.6,397.6 612.9,393.6zM648.0,373.8 652.4,373.8 652.4,375.9 648.0,375.9zM604.2,380.8 606.3,377.1 607.2,377.6 605.1,381.3zM626.6,382.9 628.2,381.5 629.1,382.6 627.5,383.9zM591.7,393.0 593.6,394.6 592.1,396.3 590.2,394.7zM601.7,371.6 603.1,370.4 604.7,372.4 603.3,373.5zM679.0,392.3 679.4,394.3 678.3,394.5 678.0,392.5zM700.0,398.0 701.7,399.4 700.9,400.4 699.2,399.0zM679.0,404.2 680.8,402.7 682.0,404.2 680.2,405.7zM702.4,388.2 704.4,386.5 705.2,387.4 703.1,389.1zM722.5,385.8 724.6,386.6 724.1,387.9 722.0,387.1zM672.4,384.5 673.5,386.3 672.4,387.0 671.3,385.1zM690.1,400.2 692.8,399.2 693.6,401.1 690.8,402.1zM718.7,383.4 721.9,380.6 723.4,382.4 720.1,385.1zM670.0,396.1 672.6,395.2 673.3,397.0 670.7,397.9zM683.3,380.1 684.8,379.5 685.6,381.7 684.1,382.2zM653.0,402.2 655.2,400.4 656.4,401.8 654.2,403.6zM633.9,448.2 635.8,445.1 637.6,446.1 635.8,449.3zM646.6,444.3 648.4,445.8 647.4,446.9 645.6,445.4zM611.6,443.5 613.3,444.1 612.7,445.8 611.0,445.2zM602.1,416.5 603.0,415.0 604.4,415.9 603.6,417.4zM679.1,397.8 680.6,400.5 678.9,401.5 677.4,398.8zM652.8,400.0 656.4,400.0 656.4,402.2 652.8,402.2zM633.1,442.9 635.1,441.3 636.6,443.1 634.6,444.7zM645.5,451.3 646.5,449.5 647.7,450.2 646.6,452.0zM659.7,414.5 662.4,416.9 661.4,418.1 658.6,415.8zM621.5,428.9 623.1,429.5 622.4,431.7 620.7,431.1zM629.9,434.3 631.9,430.8 633.0,431.4 630.9,434.9zM632.5,425.0 636.5,425.0 636.5,426.5 632.5,426.5zM626.7,398.2 627.5,399.5 626.0,400.3 625.2,399.1zM673.8,434.5 677.6,435.9 676.9,437.9 673.1,436.5zM606.7,441.8 609.0,441.0 609.4,442.1 607.2,442.9zM678.2,405.8 679.4,407.8 677.4,408.9 676.2,407.0zM683.5,436.0 684.6,437.8 683.5,438.5 682.4,436.6zM687.5,420.7 689.4,424.0 688.5,424.5 686.6,421.2zM672.1,438.5 674.9,438.5 674.9,440.2 672.1,440.2zM639.0,449.0 642.7,447.6 643.1,448.7 639.4,450.0zM624.3,439.7 626.0,440.3 625.2,442.4 623.5,441.7zM909.4,345.7 910.1,344.4 911.2,345.0 910.5,346.3zM862.4,320.1 863.1,324.2 860.8,324.6 860.1,320.5zM932.1,357.3 935.7,356.0 936.3,357.6 932.7,358.9zM848.1,355.1 849.9,358.2 847.7,359.5 845.9,356.4zM845.7,314.5 847.3,311.7 848.6,312.5 847.0,315.3zM918.5,350.0 920.6,348.2 921.3,349.0 919.1,350.8zM885.8,333.8 886.6,337.9 884.5,338.3 883.7,334.1zM857.0,356.8 860.2,356.8 860.2,357.8 857.0,357.8zM910.7,339.5 912.8,339.5 912.8,342.1 910.7,342.1zM844.8,328.1 847.4,328.1 847.4,330.7 844.8,330.7zM931.7,333.9 934.1,333.9 934.1,334.9 931.7,334.9zM923.9,361.0 925.4,361.6 924.9,362.9 923.5,362.4zM878.2,361.0 882.4,361.0 882.4,362.9 878.2,362.9zM928.5,326.6 931.8,327.8 931.3,329.1 928.0,327.9zM877.7,319.5 878.0,321.1 876.3,321.4 876.0,319.8zM899.9,337.2 901.7,337.8 900.8,340.2 899.0,339.6zM877.7,307.8 879.3,308.4 878.6,310.1 877.1,309.5zM933.1,353.4 936.2,356.0 935.0,357.3 931.9,354.7zM862.4,323.9 866.2,323.9 866.2,325.0 862.4,325.0zM913.0,357.7 914.4,357.7 914.4,359.8 913.0,359.8zM881.2,320.1 883.8,322.4 883.2,323.1 880.6,320.9zM917.9,348.8 920.0,348.8 920.0,350.7 917.9,350.7zM913.1,310.0 913.9,311.5 913.0,312.1 912.2,310.5zM882.0,315.8 884.6,313.6 886.3,315.7 883.7,317.9zM872.6,307.5 874.5,305.9 876.0,307.7 874.1,309.3zM855.2,307.9 859.3,309.3 858.3,311.9 854.3,310.4zM850.9,315.9 853.3,315.9 853.3,318.8 850.9,318.8zM850.5,310.0 853.8,312.8 852.1,314.7 848.8,311.9zM872.8,322.8 874.0,324.8 872.7,325.5 871.5,323.5zM869.8,308.6 872.9,311.2 871.8,312.5 868.7,310.0zM852.7,320.2 854.3,321.5 852.7,323.4 851.1,322.0zM854.7,317.8 858.9,316.3 859.5,317.8 855.2,319.4zM881.4,314.3 884.4,314.3 884.4,315.9 881.4,315.9zM892.2,305.2 893.6,307.6 891.4,308.9 890.0,306.5zM885.1,323.2 886.0,328.1 883.1,328.6 882.3,323.7zM853.5,303.5 854.3,307.7 852.6,308.0 851.8,303.8zM886.3,414.9 886.8,417.6 884.6,418.0 884.1,415.3zM886.2,425.5 890.7,427.1 890.2,428.4 885.7,426.8zM872.3,400.0 876.2,400.0 876.2,402.2 872.3,402.2zM888.1,422.1 890.7,422.1 890.7,423.5 888.1,423.5zM874.8,403.2 877.3,402.3 878.0,404.2 875.5,405.1zM890.2,413.0 894.8,414.7 894.2,416.6 889.5,414.9zM887.2,411.2 888.0,412.7 887.0,413.3 886.1,411.8zM907.3,426.0 908.7,428.4 906.7,429.5 905.3,427.2zM876.6,410.2 881.1,410.2 881.1,412.8 876.6,412.8zM879.1,433.1 880.0,437.9 877.8,438.3 876.9,433.5zM885.9,412.9 887.3,410.5 889.7,412.0 888.4,414.4zM890.4,398.9 892.6,398.9 892.6,400.7 890.4,400.7zM895.9,437.1 898.0,433.4 899.9,434.4 897.7,438.1zM904.9,411.4 906.8,414.8 904.9,415.8 903.0,412.5zM910.3,435.6 913.9,438.7 912.5,440.4 908.9,437.3zM893.2,420.1 896.9,417.0 898.7,419.1 895.0,422.2zM910.8,427.6 911.8,429.3 909.6,430.6 908.6,428.8zM894.9,429.3 898.1,432.0 896.8,433.5 893.7,430.8zM897.5,397.3 902.2,395.6 902.9,397.5 898.2,399.2zM896.7,412.3 897.9,410.3 900.2,411.6 899.0,413.6zM879.1,416.8 881.8,416.8 881.8,418.2 879.1,418.2zM892.1,399.5 894.6,398.6 895.5,401.2 893.1,402.1zM893.8,409.1 895.0,408.1 896.0,409.2 894.8,410.2zM890.5,409.2 893.8,411.9 891.9,414.1 888.7,411.4zM908.9,422.8 912.1,421.7 913.0,424.2 909.8,425.4zM878.8,403.4 880.7,401.8 882.3,403.7 880.3,405.3zM872.0,500.0 873.8,498.5 875.7,500.7 873.9,502.3zM864.7,510.5 866.3,513.3 864.9,514.2 863.2,511.3zM883.7,518.2 887.2,516.9 888.0,519.1 884.5,520.4zM883.1,480.5 885.2,484.2 882.9,485.5 880.8,481.9zM865.1,506.2 866.3,504.3 868.3,505.4 867.2,507.4zM862.4,507.0 865.6,504.4 866.7,505.7 863.5,508.3zM876.9,502.5 880.2,502.5 880.2,503.8 876.9,503.8zM868.6,472.6 870.0,473.8 868.5,475.6 867.1,474.4zM880.6,466.3 882.4,466.3 882.4,467.5 880.6,467.5zM879.7,474.7 881.8,475.5 880.8,478.2 878.7,477.4zM860.1,508.7 862.9,507.7 863.8,510.2 861.0,511.2zM878.1,509.2 881.4,509.2 881.4,510.8 878.1,510.8zM869.0,500.7 873.3,502.2 872.6,504.2 868.3,502.7zM878.2,481.4 881.1,480.4 882.0,482.7 879.0,483.8zM857.6,474.3 861.9,472.7 862.3,473.8 858.0,475.4zM884.2,472.5 886.3,472.5 886.3,474.1 884.2,474.1zM859.2,516.9 861.5,516.9 861.5,519.6 859.2,519.6zM873.7,482.6 875.2,483.2 874.4,485.6 872.8,485.1zM870.3,501.4 871.9,504.1 870.9,504.6 869.4,501.9zM866.3,502.7 867.7,501.5 869.1,503.1 867.6,504.3zM843.7,493.1 844.1,495.3 841.4,495.8 841.0,493.6zM851.9,493.0 852.3,495.2 849.5,495.7 849.1,493.5zM827.1,488.0 831.2,486.5 831.9,488.2 827.7,489.7zM866.4,512.4 869.0,510.2 870.8,512.4 868.2,514.6zM826.9,510.6 831.8,510.6 831.8,513.0 826.9,513.0zM817.8,496.3 820.1,492.5 822.4,493.8 820.2,497.7zM855.7,500.4 857.0,498.0 858.6,498.9 857.2,501.3zM843.6,498.8 846.6,497.7 847.2,499.6 844.3,500.7zM830.3,496.0 833.2,495.0 834.1,497.5 831.2,498.5zM865.0,498.9 868.8,495.7 870.7,497.9 866.8,501.1zM856.3,501.8 858.6,503.7 856.7,505.9 854.4,504.0zM854.9,536.1 855.4,539.1 853.7,539.4 853.2,536.4zM908.7,528.7 909.1,531.0 906.9,531.4 906.5,529.0zM897.7,538.3 899.3,535.6 901.1,536.6 899.5,539.4zM901.8,542.6 903.2,542.6 903.2,544.0 901.8,544.0zM885.6,535.7 887.9,534.8 888.7,537.0 886.5,537.9zM891.1,547.6 895.1,549.1 894.8,549.9 890.8,548.5zM884.6,552.6 885.6,554.1 883.5,555.4 882.6,553.8zM833.2,534.1 835.9,531.8 837.2,533.3 834.5,535.6zM936.0,529.3 937.2,527.3 939.3,528.6 938.2,530.5zM848.5,545.2 851.8,546.4 851.4,547.4 848.1,546.3zM818.8,532.3 819.4,535.9 816.9,536.4 816.3,532.8zM821.2,533.3 822.8,534.7 821.3,536.5 819.7,535.1zM884.8,544.0 888.5,545.4 888.2,546.3 884.5,545.0zM841.3,527.9 844.3,530.4 843.2,531.7 840.2,529.2zM850.6,538.9 852.7,539.7 851.8,542.0 849.8,541.3zM909.6,535.3 911.5,538.5 910.6,539.0 908.8,535.8zM911.4,538.2 912.8,540.7 911.8,541.3 910.4,538.8zM871.7,524.2 876.0,524.2 876.0,526.0 871.7,526.0zM872.8,546.3 873.3,549.6 872.2,549.8 871.6,546.5zM821.4,541.3 823.0,541.9 822.7,542.9 821.0,542.3zM875.3,529.0 875.9,532.5 874.2,532.8 873.6,529.3zM914.1,532.2 917.4,535.0 915.8,537.0 912.4,534.2zM899.1,525.9 901.1,527.6 899.8,529.2 897.8,527.5zM843.3,527.0 844.3,528.7 843.0,529.4 842.0,527.7zM848.3,556.6 850.2,553.4 851.5,554.2 849.7,557.4zM949.4,530.5 952.4,533.1 951.7,533.9 948.6,531.3zM897.8,548.1 900.8,549.2 900.3,550.7 897.2,549.6zM888.1,537.0 891.2,538.1 890.6,539.7 887.5,538.6zM894.7,525.3 898.6,526.7 897.7,529.2 893.8,527.8zM886.5,546.4 888.6,548.2 887.6,549.5 885.5,547.7zM896.5,554.4 898.2,551.5 900.3,552.7 898.6,555.6zM890.4,547.2 891.5,545.2 893.2,546.2 892.0,548.2zM898.6,538.9 901.7,541.5 900.4,543.0 897.3,540.4zM885.3,523.6 887.8,522.6 888.7,525.1 886.2,526.0zM896.4,547.0 897.7,549.2 895.7,550.3 894.5,548.1zM900.2,522.0 903.7,524.9 902.5,526.3 899.1,523.4zM895.2,551.4 896.9,554.4 895.6,555.2 893.9,552.2zM890.3,541.8 893.4,541.8 893.4,544.8 890.3,544.8zM164.5,537.4 164.7,538.7 162.8,539.0 162.6,537.8zM99.2,532.7 100.9,531.3 102.0,532.7 100.4,534.1zM196.6,544.9 197.2,548.2 195.0,548.6 194.4,545.2zM123.1,524.6 125.5,526.7 124.2,528.3 121.7,526.2zM184.3,520.5 186.9,519.6 187.5,521.2 184.9,522.2zM142.7,542.2 144.2,539.5 145.9,540.5 144.4,543.2zM156.0,536.9 157.0,537.8 156.3,538.7 155.2,537.8zM189.3,518.9 189.9,522.2 189.0,522.4 188.4,519.1zM179.3,536.9 179.9,540.5 177.9,540.8 177.2,537.3zM188.0,537.3 189.5,539.8 187.5,541.0 186.0,538.4zM118.2,527.1 119.1,528.5 117.0,529.7 116.2,528.3zM881.4,400.2 882.9,397.7 884.6,398.7 883.2,401.3zM882.8,383.3 884.3,386.0 882.5,387.0 881.0,384.3zM887.3,394.1 889.5,395.9 887.6,398.1 885.5,396.3zM898.4,390.4 898.9,393.2 897.3,393.5 896.8,390.7zM878.4,383.8 882.8,382.2 883.6,384.4 879.2,386.0zM895.2,403.8 898.7,402.5 899.2,403.9 895.7,405.2zM899.3,403.4 899.6,405.5 897.6,405.9 897.3,403.7zM881.6,387.4 884.4,386.4 885.1,388.3 882.3,389.3z" fill="#97d168"/>
<path d="M363.9,456.5 365.2,457.0 364.9,457.9 363.6,457.4zM367.3,437.5 369.1,437.5 369.1,438.7 367.3,438.7zM360.1,430.9 361.5,428.5 363.5,429.6 362.1,432.1zM377.7,454.0 379.5,457.2 377.7,458.2 375.9,455.1zM374.0,435.5 375.3,436.6 374.2,438.0 372.8,436.9zM350.1,437.1 351.2,435.3 352.6,436.1 351.5,437.9zM376.2,428.8 378.5,426.9 379.8,428.5 377.5,430.5zM361.6,432.6 363.9,432.6 363.9,433.9 361.6,433.9zM385.5,505.5 385.8,507.4 384.8,507.6 384.5,505.7zM317.0,533.7 317.5,536.4 316.4,536.6 315.9,533.9zM320.3,528.7 322.4,529.5 321.8,531.0 319.7,530.3zM346.5,495.9 349.2,494.9 349.8,496.5 347.1,497.4zM321.5,534.7 323.3,535.3 322.9,536.2 321.1,535.6zM403.1,552.9 405.6,552.9 405.6,554.1 403.1,554.1zM380.3,526.2 381.9,527.5 381.2,528.3 379.7,527.0zM383.2,487.8 386.2,490.3 385.2,491.5 382.2,488.9zM375.7,533.3 376.0,534.6 374.0,535.0 373.8,533.6zM321.3,518.2 324.1,518.2 324.1,519.6 321.3,519.6zM314.0,518.2 317.1,520.7 316.2,521.7 313.2,519.1zM316.2,515.6 319.1,516.7 318.6,518.1 315.7,517.0zM353.6,508.8 354.5,508.0 355.4,509.0 354.4,509.8zM369.3,491.9 369.9,495.2 368.8,495.4 368.2,492.1zM342.9,546.8 344.3,546.3 344.9,548.0 343.5,548.5zM353.6,538.7 354.9,538.2 355.3,539.3 354.0,539.8zM402.8,509.9 404.5,508.5 405.7,509.9 404.0,511.3zM314.7,521.1 317.0,519.2 318.5,520.9 316.2,522.8zM327.1,552.9 329.1,549.5 330.5,550.3 328.5,553.7zM413.9,508.0 417.4,506.8 418.0,508.5 414.5,509.7zM357.4,517.9 359.7,517.9 359.7,518.9 357.4,518.9zM316.1,483.4 318.3,481.5 319.6,483.0 317.3,484.9zM328.0,546.4 329.9,545.8 330.6,547.7 328.8,548.4zM329.1,516.0 332.6,517.3 332.2,518.4 328.7,517.1zM423.8,521.8 424.2,523.9 422.2,524.3 421.8,522.1zM321.7,540.1 322.3,543.7 320.6,544.0 319.9,540.4zM382.0,528.1 382.9,529.6 381.6,530.4 380.7,528.8zM342.9,494.5 345.4,496.6 343.9,498.4 341.4,496.2zM404.7,531.7 408.3,531.7 408.3,533.2 404.7,533.2zM413.1,536.8 415.9,537.8 415.3,539.2 412.6,538.3zM364.4,481.9 366.6,480.1 367.8,481.6 365.7,483.4zM353.7,483.7 354.2,486.8 352.1,487.2 351.6,484.1zM352.3,541.5 354.1,542.1 353.4,544.3 351.5,543.6zM337.2,496.5 339.1,499.7 337.7,500.5 335.8,497.3zM404.5,481.8 406.0,484.6 404.4,485.5 402.8,482.8zM381.9,461.6 385.1,461.6 385.1,462.9 381.9,462.9zM393.8,519.4 396.1,517.4 397.7,519.2 395.3,521.2zM408.9,512.0 409.5,514.9 408.2,515.1 407.7,512.2zM391.1,554.6 393.4,556.6 392.7,557.4 390.4,555.4zM386.9,553.8 390.5,553.8 390.5,555.2 386.9,555.2zM403.0,513.1 404.3,512.6 404.9,514.1 403.5,514.6zM401.7,478.9 403.0,478.4 403.7,480.3 402.4,480.8zM598.7,381.3 600.6,380.6 601.1,382.0 599.2,382.7zM637.3,381.3 638.7,379.0 641.0,380.3 639.6,382.6zM627.8,400.9 630.0,404.6 628.7,405.3 626.5,401.6zM628.5,359.8 628.8,361.7 626.2,362.1 625.9,360.2zM592.5,402.8 596.6,404.3 596.3,405.4 592.1,403.9zM652.5,370.8 653.1,374.1 651.9,374.3 651.3,371.0zM624.1,391.1 625.3,393.1 623.8,394.0 622.6,391.9zM660.0,380.2 662.2,382.0 660.9,383.6 658.7,381.8zM601.4,384.7 603.4,381.3 605.2,382.3 603.2,385.7zM713.3,394.1 714.9,396.9 713.4,397.7 711.8,394.9zM725.4,379.0 728.2,380.0 727.5,381.9 724.7,380.8zM712.1,394.9 713.8,396.4 712.2,398.2 710.5,396.8zM673.4,384.1 675.7,384.1 675.7,386.2 673.4,386.2zM724.0,391.0 725.8,394.2 724.5,394.9 722.7,391.8zM712.3,380.3 715.6,379.1 716.3,381.2 713.1,382.3zM667.7,403.1 670.5,405.5 669.8,406.4 666.9,404.0zM702.7,375.5 706.7,377.0 706.0,379.0 702.0,377.5zM718.5,400.1 722.0,398.9 722.6,400.4 719.1,401.6zM707.3,377.4 707.9,380.9 706.6,381.1 706.0,377.6zM640.2,435.8 643.7,434.6 644.5,436.8 641.0,438.0zM627.7,421.7 630.7,421.7 630.7,423.2 627.7,423.2zM608.2,414.4 610.6,413.5 611.5,415.8 609.0,416.7zM664.1,397.7 666.2,394.1 667.6,394.9 665.5,398.5zM664.8,417.2 666.4,417.8 665.6,420.0 664.0,419.4zM629.6,415.2 632.3,415.2 632.3,416.4 629.6,416.4zM686.6,430.2 687.7,431.2 687.0,432.1 685.8,431.1zM616.9,409.9 618.5,412.8 617.4,413.4 615.8,410.5zM658.7,414.4 661.2,415.3 660.6,417.1 658.0,416.2zM620.4,426.1 623.3,428.5 622.3,429.6 619.5,427.2zM622.0,406.1 625.3,407.3 624.6,409.1 621.3,407.9zM627.2,413.9 629.6,414.8 628.7,417.1 626.4,416.3zM640.7,427.1 641.9,429.2 640.9,429.8 639.7,427.7zM659.8,429.4 660.9,427.5 663.1,428.7 662.0,430.6zM676.0,444.7 678.9,442.3 679.8,443.4 676.9,445.9zM688.7,446.1 691.1,448.2 689.6,450.0 687.2,447.9zM634.4,447.4 636.7,448.2 636.2,449.7 633.8,448.8zM663.8,414.2 664.5,415.5 662.7,416.6 661.9,415.3zM656.9,422.0 658.2,424.3 656.2,425.4 654.9,423.1zM628.0,443.1 628.4,445.2 626.3,445.6 626.0,443.5zM684.0,414.5 687.8,414.5 687.8,415.7 684.0,415.7zM689.5,434.9 689.7,436.3 688.3,436.5 688.0,435.1zM674.8,443.5 676.4,442.9 677.1,444.8 675.5,445.4zM658.7,436.1 660.1,433.6 662.4,434.9 660.9,437.4zM686.7,418.1 690.3,419.4 689.7,421.2 686.1,419.9zM659.4,437.7 662.0,435.6 663.0,436.7 660.4,438.9zM653.4,424.6 654.7,426.9 652.5,428.1 651.2,425.9zM660.2,401.3 661.2,403.0 659.8,403.8 658.8,402.1zM649.4,440.2 652.2,439.1 653.1,441.6 650.3,442.7zM688.1,427.0 690.2,428.7 688.5,430.7 686.4,429.0zM651.0,434.9 652.6,434.4 653.1,435.8 651.5,436.4zM647.1,406.5 647.6,409.2 645.9,409.5 645.4,406.8zM655.2,432.2 656.8,432.7 655.9,435.0 654.4,434.4zM692.6,410.5 694.6,408.9 695.9,410.4 693.9,412.1zM642.1,435.2 643.5,436.4 642.6,437.5 641.2,436.3zM923.0,338.8 924.4,337.5 925.7,339.1 924.3,340.3zM859.3,347.9 860.0,346.6 862.2,347.8 861.4,349.1zM856.1,305.6 856.4,307.4 854.1,307.8 853.8,306.0zM855.9,328.4 857.8,328.4 857.8,329.4 855.9,329.4zM884.8,356.3 886.8,355.6 887.3,357.1 885.3,357.8zM855.3,322.4 855.8,324.9 854.4,325.1 854.0,322.7zM924.9,311.3 926.5,310.0 927.8,311.6 926.2,312.9zM888.7,332.6 892.2,332.6 892.2,334.2 888.7,334.2zM910.4,340.0 911.8,337.6 913.6,338.6 912.2,341.1zM886.3,342.3 889.6,341.1 890.3,343.1 887.0,344.3zM881.2,358.7 884.4,361.4 883.6,362.4 880.4,359.7zM853.8,332.7 857.0,330.0 858.3,331.6 855.1,334.2zM860.6,329.6 861.9,329.1 862.6,331.1 861.3,331.6zM851.9,306.3 853.8,304.6 855.2,306.3 853.2,308.0zM862.0,322.5 863.6,321.1 865.2,323.0 863.5,324.4zM861.0,324.1 862.8,322.6 863.8,323.8 862.0,325.3zM879.6,307.1 881.6,305.4 883.5,307.7 881.5,309.3zM882.4,304.1 885.7,302.8 886.6,305.4 883.3,306.6zM887.7,326.9 890.5,328.0 889.6,330.6 886.8,329.5zM891.1,320.9 895.1,322.4 894.1,324.9 890.1,323.5zM853.3,311.2 855.4,311.2 855.4,313.8 853.3,313.8zM907.9,423.6 909.6,425.0 908.5,426.3 906.8,424.9zM891.7,439.5 893.3,436.7 895.5,438.0 893.9,440.8zM881.8,421.8 883.1,422.8 881.5,424.8 880.2,423.7zM895.6,435.6 897.3,434.1 898.7,435.8 897.0,437.2zM895.8,403.1 897.7,399.8 899.8,401.0 897.9,404.3zM891.6,409.2 895.2,412.2 894.0,413.5 890.5,410.5zM878.4,429.4 881.9,426.5 883.0,427.9 879.6,430.8zM908.7,403.0 910.2,401.7 911.9,403.7 910.4,405.0zM879.3,499.0 883.2,499.0 883.2,501.9 879.3,501.9zM863.3,487.4 865.7,487.4 865.7,489.4 863.3,489.4zM864.0,498.6 865.3,500.9 864.4,501.5 863.0,499.2zM868.8,462.0 870.6,462.0 870.6,464.4 868.8,464.4zM867.2,511.6 867.9,515.8 865.3,516.2 864.5,512.0zM866.5,501.7 870.8,501.7 870.8,503.7 866.5,503.7zM869.7,481.5 871.7,483.2 870.5,484.5 868.6,482.9zM874.0,507.5 878.6,509.2 878.0,511.0 873.3,509.3zM884.3,519.2 885.8,516.7 887.0,517.4 885.6,519.9zM855.8,500.0 859.4,500.0 859.4,501.6 855.8,501.6zM859.6,498.0 862.1,500.2 861.1,501.5 858.5,499.3zM827.8,490.4 828.5,494.3 826.1,494.7 825.4,490.8zM839.3,488.4 843.8,486.7 844.8,489.5 840.3,491.1zM843.8,493.0 847.3,494.3 846.3,496.9 842.8,495.7zM821.7,490.2 824.5,490.2 824.5,492.6 821.7,492.6zM835.1,503.4 839.6,501.8 840.4,504.2 836.0,505.8zM815.9,491.7 817.9,491.7 817.9,494.5 815.9,494.5zM817.3,497.6 821.4,497.6 821.4,499.8 817.3,499.8zM802.1,488.3 804.2,489.1 803.7,490.4 801.6,489.7zM853.8,507.5 855.7,505.9 856.7,507.1 854.8,508.7zM866.0,497.8 869.3,497.8 869.3,499.6 866.0,499.6zM802.3,489.9 804.7,489.0 805.5,491.1 803.0,492.0zM833.1,491.5 835.6,493.6 834.4,495.0 831.9,492.9zM838.1,504.0 838.7,507.5 837.2,507.7 836.6,504.3zM813.2,489.6 816.5,490.8 815.8,492.9 812.4,491.7zM867.4,506.7 870.8,503.8 872.3,505.6 868.9,508.4zM821.0,489.6 823.5,489.6 823.5,492.1 821.0,492.1zM916.3,545.0 919.8,545.0 919.8,546.3 916.3,546.3zM823.8,525.5 827.0,522.8 828.4,524.5 825.3,527.2zM892.1,553.9 893.7,551.2 896.0,552.6 894.5,555.3zM894.9,553.2 898.7,553.2 898.7,555.8 894.9,555.8zM890.5,553.2 892.0,552.7 892.5,554.1 891.1,554.7zM876.5,540.8 880.3,542.2 879.8,543.5 876.0,542.1zM951.5,537.7 953.5,539.3 951.9,541.1 950.0,539.5zM931.1,549.0 933.6,549.0 933.6,551.4 931.1,551.4zM826.3,547.5 827.7,546.3 828.6,547.3 827.1,548.5zM935.7,523.4 938.0,525.3 937.0,526.5 934.6,524.6zM888.3,541.9 891.7,543.2 891.3,544.3 887.9,543.1zM844.5,527.6 846.8,526.8 847.2,527.8 844.9,528.7zM933.3,534.9 934.8,534.9 934.8,537.0 933.3,537.0zM901.5,550.5 902.8,551.6 902.0,552.6 900.7,551.5zM906.3,543.0 907.1,541.5 908.6,542.3 907.7,543.8zM872.4,527.5 874.7,523.6 875.6,524.2 873.4,528.0zM868.4,537.4 870.3,535.8 872.0,537.9 870.1,539.5zM879.5,533.1 881.0,533.1 881.0,535.6 879.5,535.6zM937.0,555.0 938.6,552.2 939.5,552.7 937.9,555.5zM870.8,538.8 874.4,538.8 874.4,541.5 870.8,541.5zM899.9,551.7 902.7,552.7 902.3,554.0 899.5,553.0zM182.5,555.0 183.4,553.4 184.4,554.0 183.5,555.6zM171.1,547.0 173.8,546.0 174.4,547.8 171.7,548.7zM191.6,534.8 193.3,535.4 192.8,536.8 191.1,536.2zM136.4,536.3 138.5,534.5 139.7,536.0 137.6,537.7zM113.3,540.3 113.9,543.5 112.3,543.8 111.8,540.5zM172.7,543.9 174.6,540.6 176.3,541.5 174.3,544.8zM206.8,529.7 209.2,528.8 209.8,530.5 207.4,531.3zM204.2,518.0 207.5,519.2 206.9,520.7 203.7,519.5zM200.7,547.5 201.2,550.1 199.1,550.4 198.7,547.9zM711.0,262.6 712.4,261.4 713.2,262.3 711.8,263.5zM441.0,355.2 441.7,354.0 442.8,354.6 442.1,355.8zM754.8,462.6 757.2,461.7 757.4,462.5 755.0,463.3zM190.7,327.3 192.5,328.8 191.7,329.7 190.0,328.2zM922.2,429.5 922.9,428.3 924.0,428.9 923.3,430.1zM178.6,286.5 179.8,286.5 179.8,287.3 178.6,287.3zM285.9,329.6 286.1,330.7 284.9,330.9 284.7,329.8zM678.4,279.6 680.1,278.1 680.7,278.8 679.0,280.2zM770.5,429.6 771.7,428.5 772.4,429.3 771.1,430.3zM699.9,304.7 702.3,303.8 702.7,304.9 700.3,305.8zM561.0,329.3 562.4,329.8 562.1,330.6 560.7,330.1zM694.5,290.5 694.8,291.9 693.4,292.2 693.1,290.7zM340.9,496.5 342.8,497.2 342.4,498.4 340.5,497.7zM450.4,361.4 451.5,361.8 451.0,363.2 449.9,362.8zM223.8,271.3 224.8,269.6 226.0,270.3 225.0,272.1zM259.1,394.1 261.3,393.3 261.8,394.7 259.6,395.6zM149.7,270.7 151.1,270.2 151.3,270.9 149.9,271.4zM447.0,528.0 449.2,527.2 449.7,528.4 447.5,529.2zM528.9,284.0 530.2,285.2 529.4,286.2 528.0,285.0zM890.9,343.7 892.2,342.6 892.8,343.4 891.5,344.5zM863.9,401.5 865.9,401.5 865.9,402.5 863.9,402.5zM683.1,427.6 683.3,429.0 682.0,429.2 681.7,427.8zM839.8,484.4 841.2,485.6 840.4,486.6 838.9,485.4zM906.9,366.3 908.5,365.0 909.0,365.6 907.4,366.9zM330.2,346.9 330.4,348.1 329.2,348.3 329.0,347.1zM756.9,268.5 758.2,268.5 758.2,270.1 756.9,270.1zM536.7,550.1 537.0,551.9 536.0,552.1 535.7,550.2zM902.3,371.9 903.2,370.2 904.1,370.8 903.2,372.4zM127.5,476.5 128.2,475.4 129.2,476.0 128.6,477.1zM169.7,382.7 170.7,381.1 171.6,381.6 170.7,383.3zM414.2,404.0 416.2,404.0 416.2,405.2 414.2,405.2zM514.2,440.7 516.0,441.3 515.5,442.7 513.7,442.1zM406.8,475.5 407.9,475.1 408.2,476.1 407.1,476.5zM512.4,365.4 514.3,364.7 514.7,365.8 512.8,366.5zM385.7,408.0 387.8,408.7 387.4,409.7 385.4,409.0zM435.1,379.2 435.4,380.6 434.3,380.8 434.0,379.4zM831.8,479.4 833.5,480.9 832.9,481.6 831.2,480.1zM195.0,453.0 195.1,454.0 193.9,454.2 193.8,453.2zM568.9,523.5 570.1,523.1 570.6,524.3 569.3,524.8zM284.3,290.3 285.4,288.5 286.3,288.9 285.2,290.8zM157.3,363.3 159.2,364.9 158.6,365.7 156.7,364.1z" fill="#fdc77a"/>
<path d="M365.6,515.4 369.5,515.4 369.5,516.4 365.6,516.4zM369.6,545.1 370.0,547.4 368.9,547.6 368.5,545.3zM323.5,548.5 324.1,552.3 322.5,552.6 321.8,548.8zM340.9,486.4 342.2,485.3 343.2,486.6 342.0,487.7zM404.0,536.8 406.2,538.7 405.4,539.7 403.1,537.9zM369.2,532.0 370.5,534.1 369.4,534.7 368.2,532.6zM345.9,521.2 348.1,521.2 348.1,523.2 345.9,523.2zM320.8,497.6 322.3,496.4 323.3,497.7 321.9,498.9zM320.8,504.3 323.9,505.4 323.5,506.4 320.4,505.3zM411.9,502.5 412.2,504.4 410.0,504.7 409.7,502.9zM415.9,495.7 417.2,494.6 418.7,496.4 417.4,497.5zM365.1,530.7 366.6,531.9 365.8,532.8 364.4,531.6zM344.5,484.6 346.3,487.8 345.2,488.5 343.4,485.2zM317.4,507.6 320.6,508.8 320.0,510.6 316.8,509.4zM341.1,507.6 342.7,510.3 341.8,510.9 340.2,508.1zM363.5,490.4 367.3,490.4 367.3,491.3 363.5,491.3zM384.6,532.4 386.3,535.5 385.4,536.0 383.7,533.0zM382.5,469.8 385.2,467.5 386.4,469.0 383.7,471.3zM393.1,472.5 394.7,471.9 395.4,473.7 393.7,474.3zM410.7,468.1 412.7,471.6 411.4,472.3 409.4,468.9zM397.4,498.6 397.7,500.1 396.8,500.3 396.5,498.8zM403.9,466.1 405.2,468.4 403.7,469.2 402.4,466.9zM388.8,529.6 389.1,531.2 387.0,531.6 386.7,529.9zM396.9,552.4 400.2,553.6 399.6,555.3 396.2,554.1zM391.6,526.5 393.6,525.8 394.0,527.0 392.0,527.7zM397.3,524.7 399.6,525.6 399.2,526.7 396.9,525.8zM597.8,373.4 599.2,373.9 598.8,375.2 597.3,374.7zM652.6,370.9 655.2,371.8 654.8,373.1 652.2,372.1zM653.8,364.6 658.2,364.6 658.2,365.7 653.8,365.7zM594.1,393.6 595.4,391.2 597.4,392.4 596.0,394.7zM603.8,396.1 605.8,397.8 605.0,398.8 603.0,397.1zM616.8,368.6 618.8,372.1 616.6,373.4 614.6,369.9zM598.3,390.3 598.7,392.4 597.6,392.6 597.2,390.5zM631.6,380.0 633.7,383.6 631.7,384.8 629.6,381.1zM649.0,393.5 650.4,391.1 651.9,392.0 650.5,394.4zM637.3,381.5 639.6,385.4 637.8,386.4 635.6,382.5zM605.0,387.1 605.8,388.4 604.6,389.1 603.8,387.8zM713.8,378.8 716.0,378.1 716.8,380.3 714.6,381.1zM716.7,385.3 717.5,389.6 716.1,389.8 715.3,385.5zM680.5,399.2 683.8,400.4 682.9,402.9 679.6,401.7zM692.0,377.5 694.3,376.7 695.0,378.7 692.7,379.5zM713.2,386.2 716.7,387.5 715.9,389.8 712.4,388.5zM675.1,401.9 675.5,404.6 673.0,405.1 672.5,402.4zM712.3,391.3 713.8,388.8 715.7,389.9 714.2,392.5zM730.1,389.7 732.9,390.7 732.5,392.0 729.7,390.9zM907.1,427.8 909.1,426.1 910.9,428.2 908.9,429.9zM909.2,403.3 910.8,403.3 910.8,405.3 909.2,405.3zM892.1,420.1 893.2,422.0 890.9,423.4 889.8,421.4zM894.1,413.0 896.7,413.0 896.7,414.4 894.1,414.4zM909.5,428.7 910.2,432.3 907.9,432.7 907.2,429.1zM879.1,440.1 880.2,438.2 882.2,439.3 881.1,441.3zM906.0,404.9 908.2,404.1 908.6,405.2 906.4,406.0zM912.7,399.0 914.4,402.1 911.9,403.6 910.1,400.5zM877.2,492.1 879.8,493.0 878.9,495.7 876.3,494.7zM866.8,493.7 867.1,495.5 865.1,495.8 864.8,494.0zM873.3,466.7 875.8,464.6 876.9,465.9 874.4,468.0zM859.8,489.3 861.6,488.6 862.4,490.9 860.6,491.5zM876.0,462.1 877.5,462.7 877.0,464.3 875.4,463.7zM876.7,469.0 879.5,469.0 879.5,471.1 876.7,471.1zM871.6,476.2 874.8,478.9 873.3,480.7 870.0,478.0zM880.0,490.3 880.9,491.9 879.5,492.7 878.6,491.1zM867.0,485.6 869.5,487.7 868.4,488.9 865.9,486.8zM865.1,491.9 866.9,493.3 865.7,494.7 864.0,493.3zM829.3,509.1 832.1,511.4 830.4,513.4 827.6,511.1zM841.4,510.8 843.0,513.5 841.1,514.7 839.5,511.9zM847.6,497.6 849.6,499.3 848.5,500.6 846.5,498.9zM834.7,500.4 836.3,501.7 834.7,503.7 833.1,502.4zM847.0,488.1 847.9,492.9 845.8,493.3 844.9,488.4zM856.1,507.2 859.2,506.1 860.1,508.7 857.0,509.8zM810.7,511.2 812.2,513.8 810.1,515.0 808.6,512.4zM815.6,490.2 819.5,488.8 820.4,491.4 816.5,492.8zM827.0,509.3 831.2,507.7 832.0,509.8 827.7,511.3zM861.9,510.2 864.5,510.2 864.5,511.7 861.9,511.7zM832.4,490.7 834.8,491.6 833.9,494.1 831.5,493.3zM833.4,498.2 835.6,499.0 834.8,501.1 832.6,500.3zM838.4,505.4 841.0,504.4 842.0,507.1 839.4,508.1zM824.2,504.5 827.1,503.4 827.9,505.7 825.0,506.7zM806.9,497.2 809.1,493.3 810.5,494.1 808.3,498.0zM850.9,492.3 853.1,488.4 854.9,489.5 852.7,493.3zM814.0,512.4 817.6,512.4 817.6,514.8 814.0,514.8zM858.8,491.7 861.5,491.7 861.5,494.1 858.8,494.1zM830.2,505.5 834.3,505.5 834.3,506.9 830.2,506.9zM825.1,498.2 828.1,499.2 827.2,501.6 824.3,500.5zM849.7,505.9 854.2,507.6 853.3,510.1 848.7,508.5zM845.0,491.6 847.4,491.6 847.4,493.9 845.0,493.9zM866.6,496.6 867.7,494.7 869.2,495.5 868.0,497.5zM865.6,494.7 867.7,493.0 868.7,494.1 866.6,495.8zM797.0,507.5 801.2,506.0 802.0,508.3 797.9,509.8zM890.5,524.6 892.8,528.6 891.2,529.6 888.9,525.6zM900.8,529.5 905.3,527.9 906.0,530.0 901.6,531.7zM885.9,529.6 887.9,526.1 890.0,527.3 888.0,530.8zM896.1,546.6 898.4,550.8 897.2,551.5 894.8,547.4zM883.8,552.4 887.7,551.0 888.5,553.0 884.6,554.4zM886.2,400.9 886.6,403.5 884.8,403.8 884.4,401.2zM897.3,389.5 901.6,391.1 900.6,393.9 896.3,392.3zM883.4,400.5 883.9,403.5 881.3,404.0 880.7,401.0zM878.5,383.6 882.6,385.1 881.9,386.9 877.8,385.4zM884.1,402.1 884.6,405.2 882.0,405.7 881.5,402.5z" fill="#15884b"/>
<polygon points="99.9,255.7 125.3,252.8 153.6,252.5 146.5,255.7 146.5,264.1 142.3,264.1 140.9,257.1 118.3,261.3 99.9,262.0" fill="#fbf3b0"/>
<polygon points="102.0,257.5 124.0,254.5 140.0,254.0 118.0,258.8 102.0,259.5" fill="#15884b"/>
<polygon points="177.6,255.0 201.6,252.1 211.5,276.1 200.2,287.4 194.6,283.9" fill="#f4874c"/>
<polygon points="210.1,256.4 221.4,252.8 229.9,274.0 225.6,276.8 217.2,271.2" fill="#f4874c"/>
<polygon points="200.9,288.2 211.5,276.1 229.9,289.0 209.4,304.4" fill="#97d168"/>
<polygon points="190.3,323.5 207.3,306.5 231.3,289.6 264.5,310.1 253.9,320.7 261.7,332.0 265.9,348.9 265.2,367.3 259.6,375.8 225.6,386.4" fill="#15884b" stroke="#f0dc96" stroke-width="1.5" stroke-linejoin="round" paint-order="stroke"/>
<polygon points="211.5,333.4 217.2,330.5 220.7,337.6 214.3,340.4" fill="#97d168"/>
<polygon points="221.4,327.7 226.4,325.6 231.3,336.2 227.8,340.4 222.8,334.8" fill="#97d168"/>
<polygon points="226.4,313.6 234.1,315.0 231.3,322.1 227.1,320.7" fill="#97d168"/>
<polygon points="214.3,317.8 217.9,317.8 217.2,322.1 215.0,321.4" fill="#97d168"/>
<polygon points="217.9,343.3 223.5,342.6 221.4,346.8" fill="#97d168"/>
<polygon points="111.2,340.4 115.2,320.7 120.4,334.8 132.4,334.8 136.6,319.2 147.7,317.8 146.5,338.3 132.4,340.4 118.3,351.7 111.2,361.6" fill="#f4874c"/>
<polygon points="113.3,343.8 123.9,337.2 144.4,338.8 143.0,363.0 139.5,404.0 136.6,404.0 111.2,363.0" fill="#fbf3b0"/>
<polygon points="148.6,329.1 152.9,329.1 154.3,340.4 149.3,348.9 146.5,347.5" fill="#15884b" stroke="#f0dc96" stroke-width="1.5" stroke-linejoin="round" paint-order="stroke"/>
<polygon points="159.9,339.7 169.1,329.1 183.3,322.1 174.8,331.9 160.7,340.4" fill="#fbf3b0"/>
<polygon points="163.0,337.5 170.0,330.5 178.0,326.0 172.5,332.0 164.0,338.0" fill="#97d168"/>
<polygon points="180.4,295.2 184.0,295.9 186.1,306.5 177.6,326.3 174.8,326.3 182.6,306.5" fill="#fbf3b0"/>
<polygon points="100.0,349.0 104.0,346.0 105.0,348.5 101.0,351.5" fill="#fbf3b0"/>
<polygon points="101.3,363.0 106.2,362.3 106.2,364.5 101.3,365.0" fill="#fbf3b0"/>
<polygon points="105.5,373.0 110.5,378.6 109.0,380.0 104.0,374.5" fill="#fbf3b0"/>
<polygon points="107.0,391.3 115.4,404.0 113.0,404.0 105.5,393.0" fill="#fbf3b0"/>
<polygon points="101.5,322.0 105.0,321.5 105.5,326.0 102.0,326.5" fill="#15884b" stroke="#f0dc96" stroke-width="1.5" stroke-linejoin="round" paint-order="stroke"/>
<polygon points="278.6,329.1 294.2,323.5 319.0,407.0 304.0,411.0" fill="#15884b" stroke="#f0dc96" stroke-width="1.5" stroke-linejoin="round" paint-order="stroke"/>
<polygon points="297.0,375.0 304.0,372.0 312.0,400.0 305.0,403.0" fill="#97d168"/>
<polygon points="183.0,395.0 252.7,395.0 262.0,378.0 275.0,381.0 268.0,392.0 237.2,404.3 221.7,410.5 213.9,404.3 186.1,404.3" fill="#fbf3b0"/>
<polygon points="229.0,390.0 252.0,385.0 256.0,398.0 232.0,404.0" fill="#f4874c"/>
<polygon points="222.0,398.0 232.0,404.0 224.0,408.0 218.0,403.0" fill="#15884b"/>
<polygon points="262.0,383.0 271.0,381.0 270.0,389.0 263.0,391.0" fill="#15884b"/>
<polygon points="100.1,444.6 110.1,433.7 122.5,439.9 128.7,446.1 132.6,457.0 129.5,472.5 100.1,471.7" fill="#15884b" stroke="#f0dc96" stroke-width="1.5" stroke-linejoin="round" paint-order="stroke"/>
<polygon points="108.6,420.6 125.6,419.8 128.0,430.6 134.9,432.2 134.9,446.1 128.7,446.1 122.5,439.9 110.1,433.7" fill="#15884b" stroke="#f0dc96" stroke-width="1.5" stroke-linejoin="round" paint-order="stroke"/>
<polygon points="136.5,424.4 142.7,423.7 152.0,439.9 150.4,446.1 141.1,447.7 135.7,446.1" fill="#15884b" stroke="#f0dc96" stroke-width="1.5" stroke-linejoin="round" paint-order="stroke"/>
<polygon points="134.9,467.8 143.5,460.1 149.6,460.8 156.6,481.8 162.8,509.6 133.4,508.1 131.8,494.2" fill="#15884b" stroke="#f0dc96" stroke-width="1.5" stroke-linejoin="round" paint-order="stroke"/>
<polygon points="154.3,444.6 162.8,443.0 170.6,460.1 183.0,481.8 195.4,503.5 189.2,512.7 183.0,497.3 173.7,478.7 164.4,464.7 155.1,453.9" fill="#15884b" stroke="#f0dc96" stroke-width="1.5" stroke-linejoin="round" paint-order="stroke"/>
<polygon points="162.8,457.0 170.6,461.6 183.0,464.7 192.3,463.2 201.5,472.5 206.2,478.7 203.1,481.8 195.4,475.6 186.1,472.5 176.8,469.4 167.5,467.8" fill="#15884b" stroke="#f0dc96" stroke-width="1.5" stroke-linejoin="round" paint-order="stroke"/>
<polygon points="202.3,456.2 231.0,443.0 244.9,465.5 234.1,475.6 227.9,501.9 218.6,494.2 212.4,497.3 207.7,495.7 203.9,478.7 198.5,469.4" fill="#15884b" stroke="#f0dc96" stroke-width="1.5" stroke-linejoin="round" paint-order="stroke"/>
<polygon points="264.3,443.0 268.2,431.4 278.2,426.8 289.1,447.7 268.2,455.4" fill="#15884b" stroke="#f0dc96" stroke-width="1.5" stroke-linejoin="round" paint-order="stroke"/>
<polygon points="289.9,448.5 310.8,442.3 314.7,463.2 303.0,467.8 299.2,467.8" fill="#15884b" stroke="#f0dc96" stroke-width="1.5" stroke-linejoin="round" paint-order="stroke"/>
<polygon points="274.4,477.1 296.1,467.8 300.7,481.8 272.8,515.8 262.0,500.4 275.9,491.1" fill="#fbf3b0"/>
<polygon points="276.0,476.5 295.0,468.5 297.0,476.0 280.0,484.0" fill="#15884b"/>
<polygon points="278.0,486.0 292.0,478.0 294.0,484.0 280.0,494.0" fill="#97d168"/>
<polygon points="266.0,499.0 278.0,492.0 282.0,497.0 270.0,506.0" fill="#15884b"/>
<polygon points="227.1,509.6 238.7,505.0 260.4,508.1 262.0,517.4 232.5,523.6" fill="#15884b" stroke="#f0dc96" stroke-width="1.5" stroke-linejoin="round" paint-order="stroke"/>
<polygon points="210.8,531.3 232.5,523.6 243.4,556.5 229.4,556.5" fill="#15884b" stroke="#f0dc96" stroke-width="1.5" stroke-linejoin="round" paint-order="stroke"/>
<polygon points="291.4,518.9 298.4,517.4 305.4,537.5 300.7,539.1" fill="#15884b" stroke="#f0dc96" stroke-width="1.5" stroke-linejoin="round" paint-order="stroke"/>
<polygon points="100.1,503.5 105.5,509.6 111.7,523.6 108.6,529.8 100.1,528.2" fill="#15884b" stroke="#f0dc96" stroke-width="1.5" stroke-linejoin="round" paint-order="stroke"/>
<polygon points="169.0,512.7 176.8,512.7 178.3,522.0 169.8,522.0" fill="#15884b" stroke="#f0dc96" stroke-width="1.5" stroke-linejoin="round" paint-order="stroke"/>
<polygon points="147.3,522.0 158.2,522.8 159.7,529.8 148.9,528.2" fill="#15884b" stroke="#f0dc96" stroke-width="1.5" stroke-linejoin="round" paint-order="stroke"/>
<polygon points="156.6,542.2 161.3,541.4 169.0,553.0 164.4,554.6" fill="#15884b" stroke="#f0dc96" stroke-width="1.5" stroke-linejoin="round" paint-order="stroke"/>
<polygon points="140.4,529.8 145.8,529.0 148.1,536.0 142.7,537.5" fill="#15884b" stroke="#f0dc96" stroke-width="1.5" stroke-linejoin="round" paint-order="stroke"/>
<polygon points="110.1,546.8 115.6,546.1 114.8,554.6 110.1,554.6" fill="#15884b" stroke="#f0dc96" stroke-width="1.5" stroke-linejoin="round" paint-order="stroke"/>
<polygon points="183.0,494.2 189.2,495.7 192.3,512.7 187.6,514.3" fill="#15884b" stroke="#f0dc96" stroke-width="1.5" stroke-linejoin="round" paint-order="stroke"/>
<polygon points="156.6,426.0 164.4,418.2 186.1,410.5 198.5,404.3 215.5,402.7 220.1,408.9 198.5,422.9 189.2,433.7 176.8,441.5 162.8,438.4" fill="#fbf3b0"/>
<polygon points="160.0,427.0 167.0,420.0 187.0,413.0 200.0,407.0 206.0,410.0 196.0,421.0 186.0,431.0 175.0,438.0 165.0,436.0" fill="#97d168"/>
<polygon points="163.0,422.5 167.0,422.0 167.5,425.5 163.5,426.0" fill="#15884b"/>
<polygon points="170.0,428.5 174.0,428.0 174.5,431.5 170.5,432.0" fill="#15884b"/>
<polygon points="178.0,419.5 182.0,419.0 182.5,422.5 178.5,423.0" fill="#15884b"/>
<polygon points="185.0,424.5 189.0,424.0 189.5,427.5 185.5,428.0" fill="#15884b"/>
<polygon points="190.0,414.5 194.0,414.0 194.5,417.5 190.5,418.0" fill="#15884b"/>
<polygon points="174.0,432.5 178.0,432.0 178.5,435.5 174.5,436.0" fill="#15884b"/>
<polygon points="166.0,430.5 170.0,430.0 170.5,433.5 166.5,434.0" fill="#15884b"/>
<polygon points="181.4,439.9 190.7,433.7 193.8,441.5 186.1,447.7" fill="#f4874c"/>
<polygon points="169.0,488.0 173.7,486.4 184.5,506.6 179.9,509.6" fill="#f4874c"/>
<polygon points="167.5,534.4 179.9,526.7 184.5,532.9 172.1,542.2" fill="#f4874c"/>
<polygon points="142.7,449.2 148.9,447.7 152.0,453.9 144.2,457.0" fill="#f4874c"/>
<polygon points="120.2,508.1 125.6,506.6 127.2,512.7 121.0,514.3" fill="#f4874c"/>
<polygon points="105.5,395.0 110.1,395.0 114.8,402.7 112.5,403.5" fill="#fbf3b0"/>
<polygon points="130.3,395.0 141.1,395.0 139.6,405.8 136.5,404.3" fill="#fbf3b0"/>
<polygon points="100.0,428.0 112.0,430.0 118.0,434.0 100.0,432.0" fill="#fbf3b0"/>
<polygon points="195.0,518.0 199.0,517.0 207.0,548.0 203.0,549.0" fill="#fbf3b0"/>
<polygon points="319.1,257.8 342.4,252.1 345.9,266.2 330.4,283.9" fill="#15884b" stroke="#f0dc96" stroke-width="1.5" stroke-linejoin="round" paint-order="stroke"/>
<polygon points="353.0,317.8 377.7,307.9 394.7,299.5 409.5,296.6 411.6,312.2 398.9,322.1 390.4,324.9 384.8,326.3 379.1,317.8 374.2,319.2 377.0,329.1 359.3,332.0" fill="#15884b" stroke="#f0dc96" stroke-width="1.5" stroke-linejoin="round" paint-order="stroke"/>
<polygon points="379.1,329.1 398.9,326.3 420.1,323.5 428.6,329.1 431.4,346.1 424.3,348.9 432.8,356.0 435.6,367.3 410.2,370.1 404.6,351.7 397.5,340.4 383.4,343.3" fill="#fbf3b0"/>
<polygon points="414.5,340.4 427.2,343.3 424.3,348.9 415.9,348.9" fill="#a50026"/>
<polygon points="381.0,333.0 392.0,331.0 393.0,337.0 384.0,339.0" fill="#a50026"/>
<polygon points="398.9,334.8 410.2,332.0 411.6,341.9 401.7,341.9" fill="#15884b"/>
<polygon points="421.5,367.3 432.8,358.8 433.5,367.3" fill="#15884b"/>
<polygon points="406.0,356.0 416.0,353.0 420.0,362.0 410.0,367.0" fill="#97d168"/>
<polygon points="408.0,357.0 420.0,354.0 422.0,358.0 410.0,361.0" fill="#f4874c"/>
<polygon points="370.7,252.8 422.9,252.5 420.1,257.1 398.9,262.7 393.3,268.4 379.1,262.7 372.1,259.9" fill="#fbf3b0"/>
<polygon points="373.5,257.1 377.7,255.7 377.7,261.3 374.2,261.3" fill="#15884b"/>
<polygon points="398.0,253.0 412.0,253.0 408.0,259.0 400.0,258.0" fill="#f4874c"/>
<polygon points="504.9,295.2 520.0,291.0 520.0,306.5 510.5,312.2 506.3,306.5" fill="#15884b" stroke="#f0dc96" stroke-width="1.5" stroke-linejoin="round" paint-order="stroke"/>
<polygon points="473.1,366.6 485.1,365.2 485.1,368.7 475.2,370.8" fill="#15884b" stroke="#f0dc96" stroke-width="1.5" stroke-linejoin="round" paint-order="stroke"/>
<polygon points="496.5,351.7 499.5,351.7 501.5,371.5 498.0,371.5" fill="#fbf3b0"/>
<polygon points="497.3,356.0 499.0,356.0 500.3,368.0 498.6,368.0" fill="#15884b"/>
<polygon points="508.3,264.0 511.3,264.0 511.5,287.0 509.0,287.0" fill="#fbf3b0"/>
<polygon points="492.0,299.0 494.0,298.0 501.0,308.0 499.0,309.5" fill="#fbf3b0"/>
<polygon points="479.0,273.5 482.0,274.5 483.0,277.0 480.0,276.0" fill="#fbf3b0"/>
<polygon points="480.0,306.0 482.0,306.0 482.0,309.0 480.0,309.0" fill="#fbf3b0"/>
<polygon points="480.0,313.0 482.0,313.0 482.0,317.0 480.0,317.0" fill="#fbf3b0"/>
<polygon points="498.0,339.0 500.0,339.0 500.5,345.0 498.5,345.0" fill="#fbf3b0"/>
<polygon points="340.0,322.0 344.0,321.5 344.0,323.5 340.5,324.0" fill="#fbf3b0"/>
<polygon points="355.0,364.0 358.0,364.0 358.0,367.0 355.0,367.0" fill="#fbf3b0"/>
<polygon points="359.3,382.8 363.6,381.4 372.8,404.3 365.1,407.4 362.2,400.0" fill="#15884b" stroke="#f0dc96" stroke-width="1.5" stroke-linejoin="round" paint-order="stroke"/>
<polygon points="504.9,397.0 512.0,396.0 513.0,405.0 506.0,405.0" fill="#97d168"/>
<polygon points="320.1,439.9 327.9,429.9 337.2,435.3 329.4,446.1" fill="#15884b" stroke="#f0dc96" stroke-width="1.5" stroke-linejoin="round" paint-order="stroke"/>
<polygon points="325.0,437.0 329.0,432.0 333.5,435.0 329.5,440.5" fill="#97d168"/>
<polygon points="317.8,451.5 328.7,446.9 331.0,452.3 320.9,457.0" fill="#15884b" stroke="#f0dc96" stroke-width="1.5" stroke-linejoin="round" paint-order="stroke"/>
<polygon points="336.4,447.7 341.8,440.7 345.7,443.0 340.3,452.3" fill="#15884b" stroke="#f0dc96" stroke-width="1.5" stroke-linejoin="round" paint-order="stroke"/>
<polygon points="338.5,447.0 341.8,442.5 343.5,443.5 340.3,449.0" fill="#97d168"/>
<polygon points="300.0,549.9 331.0,540.6 337.2,545.3 340.3,556.9 300.0,556.9" fill="#15884b" stroke="#f0dc96" stroke-width="1.5" stroke-linejoin="round" paint-order="stroke"/>
<polygon points="341.8,548.4 354.2,546.1 362.0,556.9 343.4,556.9" fill="#15884b" stroke="#f0dc96" stroke-width="1.5" stroke-linejoin="round" paint-order="stroke"/>
<polygon points="300.0,522.0 303.1,523.6 304.6,539.1 300.0,540.6" fill="#15884b" stroke="#f0dc96" stroke-width="1.5" stroke-linejoin="round" paint-order="stroke"/>
<polygon points="504.5,517.4 516.9,515.1 520.0,526.7 507.6,529.0" fill="#15884b" stroke="#f0dc96" stroke-width="1.5" stroke-linejoin="round" paint-order="stroke"/>
<polygon points="482.0,516.6 486.7,515.1 491.3,532.9 486.7,534.4" fill="#15884b" stroke="#f0dc96" stroke-width="1.5" stroke-linejoin="round" paint-order="stroke"/>
<polygon points="458.0,540.6 470.4,534.4 485.9,532.9 484.4,537.5 470.4,542.2 461.1,544.5" fill="#15884b" stroke="#f0dc96" stroke-width="1.5" stroke-linejoin="round" paint-order="stroke"/>
<polygon points="450.3,534.4 456.5,529.0 461.9,530.6 458.0,534.4 452.6,538.3" fill="#15884b" stroke="#f0dc96" stroke-width="1.5" stroke-linejoin="round" paint-order="stroke"/>
<polygon points="431.7,543.7 437.9,542.2 440.2,556.5 434.0,556.5" fill="#15884b" stroke="#f0dc96" stroke-width="1.5" stroke-linejoin="round" paint-order="stroke"/>
<polygon points="432.2,518.0 435.3,503.0 441.5,500.9 446.0,512.7 443.5,524.6 438.0,519.5 438.4,509.6 436.8,516.5" fill="#fbf3b0"/>
<polygon points="433.6,516.5 436.5,504.5 440.6,503.0 444.0,512.7 442.3,521.5 439.5,518.0 440.3,509.6 436.4,514.0" fill="#15884b"/>
<polygon points="439.3,495.7 438.4,497.4 436.3,498.1 434.2,497.4 433.3,495.7 434.2,494.0 436.3,493.3 438.4,494.0" fill="#15884b" stroke="#f0dc96" stroke-width="1.5" stroke-linejoin="round" paint-order="stroke"/>
<polygon points="425.2,505.8 424.4,507.4 422.4,508.0 420.4,507.4 419.6,505.8 420.4,504.2 422.4,503.6 424.4,504.2" fill="#15884b" stroke="#f0dc96" stroke-width="1.5" stroke-linejoin="round" paint-order="stroke"/>
<polygon points="375.8,436.8 374.9,438.5 372.8,439.2 370.7,438.5 369.8,436.8 370.7,435.1 372.8,434.4 374.9,435.1" fill="#15884b" stroke="#f0dc96" stroke-width="1.5" stroke-linejoin="round" paint-order="stroke"/>
<polygon points="504.5,398.1 513.8,396.5 520.0,418.2 520.0,461.6 513.8,453.9 509.2,433.7 503.0,413.6" fill="#fbf3b0"/>
<polygon points="507.0,401.0 512.5,400.0 518.0,420.0 519.0,452.0 515.0,447.0 511.5,432.0 506.0,414.0" fill="#97d168"/>
<polygon points="509.0,404.0 512.0,403.5 516.0,420.0 513.5,421.0" fill="#15884b"/>
<polygon points="513.0,436.0 516.0,435.0 519.5,455.0 517.0,455.0" fill="#f4874c"/>
<polygon points="516.9,475.6 520.0,475.6 520.0,491.1 516.9,491.1" fill="#15884b" stroke="#f0dc96" stroke-width="1.5" stroke-linejoin="round" paint-order="stroke"/>
<polygon points="461.9,467.0 466.6,467.8 476.6,491.1 481.3,493.4 475.1,494.9 470.4,481.8" fill="#fbf3b0"/>
<polygon points="469.0,477.0 471.0,476.5 476.5,491.0 474.5,492.0" fill="#97d168"/>
<polygon points="399.9,407.9 421.6,407.2 421.6,409.6 399.9,410.2" fill="#fbf3b0"/>
<polygon points="459.0,478.0 461.0,477.5 463.0,487.0 461.0,487.5" fill="#fbf3b0"/>
<polygon points="577.9,339.7 592.0,327.0 589.2,319.2 601.2,310.8 606.8,316.4 602.6,322.1 613.9,327.7 626.6,333.4 642.2,346.1 647.8,357.4 636.5,361.6 613.9,374.3 608.3,381.4 602.6,377.2 594.1,363.0 585.7,351.7" fill="#15884b" stroke="#f0dc96" stroke-width="1.5" stroke-linejoin="round" paint-order="stroke"/>
<polygon points="606.3,344.3 607.6,343.6 613.0,352.9 611.7,353.6" fill="#97d168"/>
<polygon points="544.7,272.6 556.0,267.7 565.9,279.7 558.8,285.3" fill="#15884b" stroke="#f0dc96" stroke-width="1.5" stroke-linejoin="round" paint-order="stroke"/>
<polygon points="528.5,255.0 531.0,254.0 549.5,264.5 548.0,266.5" fill="#fbf3b0"/>
<polygon points="515.0,296.6 519.2,278.3 522.1,268.4 525.6,278.3 527.7,289.6 533.4,298.0 539.0,299.5 547.5,309.3 558.8,317.8 541.8,317.8 536.2,312.2 530.5,299.5 524.9,298.0 515.0,306.5" fill="#15884b" stroke="#f0dc96" stroke-width="1.5" stroke-linejoin="round" paint-order="stroke"/>
<polygon points="557.4,365.2 561.6,364.5 567.3,375.8 561.6,377.9" fill="#15884b" stroke="#f0dc96" stroke-width="1.5" stroke-linejoin="round" paint-order="stroke"/>
<polygon points="604.7,253.0 606.5,252.6 614.9,257.5 626.2,271.6 638.9,288.2 636.9,289.6 624.2,273.6 612.9,259.5" fill="#fbf3b0"/>
<polygon points="605.4,256.4 613.9,257.8 616.7,262.0 606.8,262.7" fill="#15884b" stroke="#f0dc96" stroke-width="1.5" stroke-linejoin="round" paint-order="stroke"/>
<polygon points="686.7,291.0 690.9,282.5 702.9,278.3 712.8,289.6 718.5,305.1 686.7,305.8" fill="#15884b" stroke="#f0dc96" stroke-width="1.5" stroke-linejoin="round" paint-order="stroke"/>
<polygon points="666.9,291.7 674.7,291.7 674.7,305.8 666.9,305.8" fill="#fbf3b0"/>
<polygon points="666.9,296.0 674.7,301.0 674.7,305.8 666.9,305.8" fill="#15884b"/>
<polygon points="659.8,327.0 682.4,327.0 682.4,337.6 686.7,337.6 686.7,327.0 690.9,327.0 690.9,337.6 701.5,337.6 703.6,324.9 714.2,324.9 714.2,332.0 721.3,330.5 721.3,340.4 714.2,341.8 714.2,355.3 695.9,355.3 695.9,370.1 674.7,370.8 674.7,365.2 691.6,363.0 691.6,355.3 678.2,355.3 678.2,344.0 659.8,340.4" fill="#15884b" stroke="#f0dc96" stroke-width="1.5" stroke-linejoin="round" paint-order="stroke"/>
<polygon points="676.0,366.0 691.0,364.0 691.0,368.5 677.0,369.8" fill="#97d168"/>
<polygon points="705.8,306.5 712.8,306.5 712.8,323.5 705.8,323.5" fill="#fbf3b0"/>
<polygon points="710.0,306.5 714.0,306.5 714.0,313.0 710.0,313.0" fill="#f4874c"/>
<polygon points="721.3,252.8 735.0,252.8 735.0,265.5 728.4,264.1" fill="#97d168"/>
<polygon points="659.0,341.0 676.0,344.5 676.0,347.0 659.0,343.5" fill="#fbf3b0"/>
<polygon points="534.1,366.6 543.3,364.5 543.3,366.5 534.5,368.6" fill="#fbf3b0"/>
<polygon points="532.0,383.5 537.6,381.4 538.0,383.4 532.5,385.5" fill="#fbf3b0"/>
<polygon points="560.2,398.4 564.5,398.0 565.5,405.0 562.0,405.0" fill="#fbf3b0"/>
<polygon points="654.2,271.2 656.3,271.0 657.0,276.8 655.0,277.0" fill="#fbf3b0"/>
<polygon points="654.2,316.4 655.6,316.4 656.0,320.7 654.6,320.7" fill="#fbf3b0"/>
<polygon points="670.4,257.1 673.3,257.1 673.3,264.1 670.4,264.1" fill="#fbf3b0"/>
<polygon points="687.4,254.2 690.0,254.0 693.0,264.1 691.0,264.5" fill="#fbf3b0"/>
<polygon points="642.9,298.0 646.4,301.6 645.4,302.6 641.9,299.0" fill="#fbf3b0"/>
<polygon points="642.2,340.4 647.8,337.6 648.5,339.0 643.0,342.0" fill="#fbf3b0"/>
<polygon points="537.6,322.1 539.5,321.5 541.8,327.7 540.0,328.3" fill="#fbf3b0"/>
<polygon points="564.5,321.8 567.4,320.1 565.8,317.3 562.9,319.0" fill="#15884b"/>
<polygon points="568.1,319.7 571.0,318.0 569.4,315.2 566.5,316.9" fill="#15884b"/>
<polygon points="571.7,317.6 574.6,315.9 573.0,313.1 570.1,314.8" fill="#15884b"/>
<polygon points="575.3,315.5 578.2,313.8 576.6,311.0 573.7,312.8" fill="#15884b"/>
<polygon points="578.9,313.4 581.8,311.7 580.2,308.9 577.3,310.7" fill="#15884b"/>
<polygon points="582.4,311.3 585.4,309.6 583.8,306.9 580.8,308.6" fill="#15884b"/>
<polygon points="586.0,309.2 589.0,307.5 587.4,304.8 584.4,306.5" fill="#15884b"/>
<polygon points="589.6,307.2 592.6,305.4 591.0,302.7 588.0,304.4" fill="#15884b"/>
<polygon points="593.2,305.1 596.2,303.4 594.5,300.6 591.6,302.3" fill="#15884b"/>
<polygon points="609.1,315.1 611.1,313.5 609.6,311.4 607.5,312.9" fill="#15884b"/>
<polygon points="611.6,313.2 613.7,311.7 612.1,309.6 610.1,311.1" fill="#15884b"/>
<polygon points="614.1,311.4 616.2,309.9 614.7,307.8 612.6,309.3" fill="#15884b"/>
<polygon points="616.7,309.6 618.7,308.0 617.2,305.9 615.1,307.4" fill="#15884b"/>
<polygon points="619.2,307.7 621.3,306.2 619.7,304.1 617.7,305.6" fill="#15884b"/>
<polygon points="621.7,305.9 623.8,304.4 622.3,302.3 620.2,303.8" fill="#15884b"/>
<polygon points="567.7,461.6 598.7,444.6 604.9,457.0 577.0,477.1" fill="#15884b" stroke="#f0dc96" stroke-width="1.5" stroke-linejoin="round" paint-order="stroke"/>
<polygon points="570.8,412.0 581.6,408.9 584.7,421.3 574.6,424.4" fill="#15884b" stroke="#f0dc96" stroke-width="1.5" stroke-linejoin="round" paint-order="stroke"/>
<polygon points="560.7,399.6 564.6,398.1 569.2,413.6 565.4,415.1" fill="#f4874c"/>
<polygon points="536.7,477.1 546.8,472.5 553.7,489.5 543.7,494.2" fill="#15884b" stroke="#f0dc96" stroke-width="1.5" stroke-linejoin="round" paint-order="stroke"/>
<polygon points="556.1,467.8 559.2,466.3 566.9,481.8 563.8,483.3" fill="#15884b" stroke="#f0dc96" stroke-width="1.5" stroke-linejoin="round" paint-order="stroke"/>
<polygon points="576.2,514.3 587.8,506.6 601.8,531.3 599.4,536.0 590.9,534.4 586.3,531.3 580.1,529.8 575.4,523.6" fill="#15884b" stroke="#f0dc96" stroke-width="1.5" stroke-linejoin="round" paint-order="stroke"/>
<polygon points="516.5,475.6 527.4,472.5 535.1,488.0 553.7,518.9 566.1,540.6 583.2,556.9 546.0,556.9 539.8,540.6 528.9,511.2 518.1,494.2" fill="#fbf3b0"/>
<polygon points="521.0,482.0 528.0,480.0 540.0,503.0 552.0,524.0 560.0,541.0 552.0,545.0 544.0,530.0 533.0,508.0 523.0,492.0" fill="#97d168"/>
<polygon points="517.3,475.6 526.6,473.2 528.2,481.8 519.6,488.0" fill="#15884b"/>
<polygon points="549.1,542.2 558.4,543.7 566.1,556.9 547.5,556.9" fill="#15884b"/>
<polygon points="533.0,505.0 540.0,502.0 544.0,512.0 538.0,515.0" fill="#15884b"/>
<polygon points="542.9,531.3 552.2,529.8 553.7,542.2 546.0,543.7" fill="#a50026"/>
<polygon points="540.0,520.0 546.0,518.0 548.0,526.0 542.0,528.0" fill="#f4874c"/>
<polygon points="515.0,441.5 519.6,446.1 528.2,460.1 524.3,464.7 516.5,457.0" fill="#f4874c"/>
<polygon points="515.0,410.5 521.2,412.0 519.6,426.0 515.0,433.7" fill="#fbf3b0"/>
<polygon points="643.6,488.0 652.1,486.4 652.9,514.3 644.4,515.8" fill="#15884b" stroke="#f0dc96" stroke-width="1.5" stroke-linejoin="round" paint-order="stroke"/>
<polygon points="631.2,490.3 637.4,488.7 638.9,512.7 632.7,514.3" fill="#fbf3b0"/>
<polygon points="636.0,489.0 638.0,488.7 639.4,512.7 637.4,513.0" fill="#f4874c"/>
<polygon points="638.9,517.4 641.3,516.6 642.0,529.8 639.7,530.6" fill="#15884b" stroke="#f0dc96" stroke-width="1.5" stroke-linejoin="round" paint-order="stroke"/>
<polygon points="602.5,503.5 604.9,503.5 603.5,517.4 601.5,517.4" fill="#fbf3b0"/>
<polygon points="655.2,448.5 669.9,444.6 669.9,481.8 659.9,481.8 659.1,464.7 654.4,463.2" fill="#15884b" stroke="#f0dc96" stroke-width="1.5" stroke-linejoin="round" paint-order="stroke"/>
<polygon points="683.9,433.7 693.2,421.3 707.1,408.9 722.6,426.0 735.0,421.3 735.0,441.5 725.7,449.2 711.8,441.5 707.1,447.7 711.8,463.2 694.7,463.9 693.2,443.0" fill="#15884b" stroke="#f0dc96" stroke-width="1.5" stroke-linejoin="round" paint-order="stroke"/>
<polygon points="670.7,495.7 708.7,495.7 710.2,475.6 735.0,488.0 735.0,528.2 725.7,532.9 710.2,531.3 708.7,523.6 696.3,525.1 696.3,542.2 689.3,542.2 688.5,526.7 673.0,525.1" fill="#15884b" stroke="#f0dc96" stroke-width="1.5" stroke-linejoin="round" paint-order="stroke"/>
<polygon points="704.0,497.0 708.7,497.0 708.7,509.6 704.0,509.6" fill="#f4874c"/>
<polygon points="676.0,497.0 680.0,497.0 680.0,508.0 676.0,508.0" fill="#fbf3b0"/>
<polygon points="682.0,495.0 696.0,495.0 696.0,505.0 682.0,505.0" fill="#a50026"/>
<polygon points="649.0,556.9 649.8,542.2 654.4,532.9 662.2,531.3 662.2,556.9" fill="#15884b" stroke="#f0dc96" stroke-width="1.5" stroke-linejoin="round" paint-order="stroke"/>
<polygon points="662.2,528.2 667.6,528.2 667.6,556.9 662.2,556.9" fill="#f4874c"/>
<polygon points="667.6,528.2 677.7,526.7 678.5,556.9 667.6,556.9" fill="#15884b" stroke="#f0dc96" stroke-width="1.5" stroke-linejoin="round" paint-order="stroke"/>
<polygon points="691.6,469.4 708.7,468.6 708.7,472.5 691.6,473.2" fill="#15884b" stroke="#f0dc96" stroke-width="1.5" stroke-linejoin="round" paint-order="stroke"/>
<polygon points="701.0,481.8 710.2,481.0 710.2,488.0 701.0,488.0" fill="#15884b" stroke="#f0dc96" stroke-width="1.5" stroke-linejoin="round" paint-order="stroke"/>
<polygon points="654.4,443.0 669.9,436.8 682.3,432.2 679.2,438.4 669.9,441.5 657.5,447.7" fill="#fbf3b0"/>
<polygon points="660.0,442.5 670.0,438.5 678.0,435.5 676.0,438.0 668.0,441.0 661.0,444.5" fill="#97d168"/>
<polygon points="673.0,410.5 685.4,404.3 690.1,410.5 679.2,416.7" fill="#15884b" stroke="#f0dc96" stroke-width="1.5" stroke-linejoin="round" paint-order="stroke"/>
<polygon points="704.0,446.1 710.2,439.9 713.3,443.0 707.1,450.8" fill="#f4874c"/>
<polygon points="722.6,455.4 735.0,461.6 735.0,466.3 721.0,459.3" fill="#fdc77a"/>
<polygon points="689.0,476.5 692.0,476.5 692.0,486.0 689.0,486.0" fill="#fbf3b0"/>
<polygon points="712.0,530.0 724.0,530.0 724.0,533.5 712.0,533.5" fill="#15884b" stroke="#f0dc96" stroke-width="1.5" stroke-linejoin="round" paint-order="stroke"/>
<polygon points="713.0,538.0 717.0,538.0 716.0,550.0 713.5,550.0" fill="#fbf3b0"/>
<polygon points="751.2,252.8 786.5,252.8 820.5,275.4 814.8,285.3 810.6,279.7 797.8,278.3 792.2,285.3 783.7,281.1 786.5,271.2 783.7,265.5 765.3,262.7 758.3,258.5" fill="#15884b" stroke="#f0dc96" stroke-width="1.5" stroke-linejoin="round" paint-order="stroke"/>
<polygon points="843.1,257.1 847.3,252.8 854.4,252.8 857.2,264.1 858.6,275.4 853.0,276.9 850.1,272.6 847.3,276.9 843.1,274.0 847.3,264.1" fill="#15884b" stroke="#f0dc96" stroke-width="1.5" stroke-linejoin="round" paint-order="stroke"/>
<polygon points="879.8,252.8 906.7,252.8 908.1,258.5 910.9,274.0 896.8,275.4 888.3,268.4 885.5,258.5" fill="#fbf3b0"/>
<polygon points="879.8,252.8 906.7,252.8 907.0,256.0 886.0,255.5" fill="#15884b"/>
<polygon points="889.7,265.5 899.6,267.0 898.2,274.0 891.1,272.6" fill="#f4874c"/>
<polygon points="903.8,269.8 908.1,271.2 907.5,275.0 903.5,274.0" fill="#15884b"/>
<polygon points="929.3,252.8 947.6,252.8 944.8,259.9 932.1,261.3" fill="#f4874c"/>
<polygon points="947.6,255.7 951.0,254.0 954.0,276.0 952.0,278.3" fill="#fbf3b0"/>
<polygon points="915.1,279.7 927.9,282.5 946.2,288.2 949.8,292.4 942.0,293.8 927.9,286.7 916.6,282.5" fill="#fbf3b0"/>
<polygon points="940.0,289.0 947.0,290.0 948.0,292.5 942.0,292.5" fill="#97d168"/>
<polygon points="933.5,310.8 943.4,306.5 944.8,310.8 934.9,315.0" fill="#15884b" stroke="#f0dc96" stroke-width="1.5" stroke-linejoin="round" paint-order="stroke"/>
<polygon points="918.0,305.1 925.0,305.1 927.9,316.4 920.8,317.8" fill="#fbf3b0"/>
<polygon points="818.3,303.7 826.1,296.6 830.3,299.5 823.3,308.7" fill="#15884b" stroke="#f0dc96" stroke-width="1.5" stroke-linejoin="round" paint-order="stroke"/>
<polygon points="823.3,324.9 828.9,319.3 841.7,326.3 834.6,336.2 827.5,333.4" fill="#f4874c"/>
<polygon points="768.2,339.0 790.1,314.3 841.7,350.3 837.4,357.4 804.9,377.2 797.8,370.1" fill="#15884b" stroke="#f0dc96" stroke-width="1.5" stroke-linejoin="round" paint-order="stroke"/>
<polygon points="777.0,340.4 791.5,323.5 836.0,352.0 803.5,373.0" fill="#fbf3b0"/>
<polygon points="777.0,340.4 791.5,323.5 797.0,327.0 783.0,344.0" fill="#97d168"/>
<polygon points="812.0,337.0 836.0,352.0 831.0,355.5 808.0,341.0" fill="#97d168"/>
<polygon points="780.9,341.9 790.8,334.8 809.1,340.5 817.6,351.8 809.1,367.3 797.8,357.4 786.5,351.8" fill="#f4874c"/>
<polygon points="789.4,340.5 797.8,336.2 809.1,343.3 812.0,348.9 797.8,354.6 789.4,348.9" fill="#a50026"/>
<polygon points="804.0,358.0 812.0,355.0 810.0,365.0 805.0,364.0" fill="#a50026"/>
<polygon points="761.8,363.1 775.2,351.8 780.9,358.8 768.2,370.1" fill="#15884b" stroke="#f0dc96" stroke-width="1.5" stroke-linejoin="round" paint-order="stroke"/>
<polygon points="810.6,387.1 817.6,382.9 828.9,388.5 827.5,399.8 820.5,405.0 814.8,398.4" fill="#f4874c"/>
<polygon points="778.1,388.5 786.5,387.1 793.6,399.8 797.8,405.0 783.7,405.0 780.9,397.0" fill="#15884b" stroke="#f0dc96" stroke-width="1.5" stroke-linejoin="round" paint-order="stroke"/>
<polygon points="803.5,398.4 812.0,395.6 814.8,405.0 804.9,405.0" fill="#15884b" stroke="#f0dc96" stroke-width="1.5" stroke-linejoin="round" paint-order="stroke"/>
<polygon points="765.3,405.0 771.0,398.4 778.1,395.6 780.9,405.0" fill="#fbf3b0"/>
<polygon points="730.0,323.5 738.5,323.5 755.4,327.7 754.0,332.0 738.5,332.0 732.8,337.6 735.7,351.8 742.7,363.1 739.9,367.3 732.8,357.4 730.0,341.9" fill="#fbf3b0"/>
<polygon points="730.0,325.5 738.5,325.5 752.0,328.8 751.5,330.3 738.5,329.8 730.0,330.0" fill="#15884b"/>
<polygon points="734.0,352.0 736.5,351.0 741.0,361.0 739.0,362.5" fill="#15884b"/>
<polygon points="751.2,271.2 753.7,271.2 755.2,306.5 752.7,306.5" fill="#fbf3b0"/>
<polygon points="758.3,258.5 760.0,258.5 761.2,292.4 759.4,292.4" fill="#fbf3b0"/>
<polygon points="762.5,281.1 771.0,285.3 769.6,295.2 763.9,292.4" fill="#fbf3b0"/>
<polygon points="783.7,285.3 790.8,288.2 802.1,298.0 797.8,300.9 789.4,292.4" fill="#fbf3b0"/>
<polygon points="730.0,252.8 737.0,252.8 735.7,262.7 730.0,264.1" fill="#97d168"/>
<polygon points="922.2,377.2 930.7,374.4 942.0,381.4 954.0,397.0 954.0,405.0 939.2,398.4 927.9,389.9" fill="#fbf3b0"/>
<polygon points="925.5,378.5 930.5,377.0 941.0,383.5 951.5,397.0 951.0,401.0 940.0,396.0 929.5,388.5" fill="#15884b"/>
<polygon points="934.0,386.0 940.0,390.0 946.0,397.0 941.0,396.0" fill="#97d168"/>
<polygon points="872.7,374.4 878.4,373.7 879.8,377.9 874.2,379.3" fill="#15884b" stroke="#f0dc96" stroke-width="1.5" stroke-linejoin="round" paint-order="stroke"/>
<polygon points="854.4,370.1 858.6,371.5 859.3,382.9 856.5,382.9" fill="#fbf3b0"/>
<polygon points="862.8,334.8 868.5,333.4 869.2,340.5 864.3,341.9" fill="#f4874c"/>
<polygon points="878.4,348.9 883.3,348.9 884.0,354.6 879.1,355.3" fill="#f4874c"/>
<polygon points="929.3,351.8 937.8,339.0 940.6,340.5 932.1,354.6" fill="#fbf3b0"/>
<polygon points="742.0,316.0 748.0,312.0 749.0,314.0 743.0,318.0" fill="#fbf3b0"/>
<polygon points="819.0,378.0 828.0,374.0 829.0,376.0 820.0,380.0" fill="#fbf3b0"/>
<polygon points="730.0,488.0 742.4,491.1 757.9,486.4 759.4,474.0 779.6,472.5 781.1,484.9 796.6,488.0 798.2,500.4 830.7,501.9 832.3,517.4 855.5,519.0 855.5,534.5 829.2,525.2 809.0,523.6 807.5,529.8 832.3,556.9 753.2,556.9 750.1,534.5 730.0,529.8" fill="#15884b" stroke="#f0dc96" stroke-width="1.5" stroke-linejoin="round" paint-order="stroke"/>
<polygon points="764.1,474.0 771.1,474.0 771.1,489.5 764.1,489.5" fill="#a50026"/>
<polygon points="782.7,515.9 785.0,515.9 785.0,526.7 782.7,526.7" fill="#a50026"/>
<polygon points="751.7,517.4 754.8,517.4 754.8,526.7 751.7,526.7" fill="#fdc77a"/>
<polygon points="760.0,490.0 762.5,490.0 762.5,501.0 760.0,501.0" fill="#fbf3b0"/>
<polygon points="766.0,490.0 768.5,490.0 768.5,501.0 766.0,501.0" fill="#fbf3b0"/>
<polygon points="730.0,426.0 743.9,421.3 750.1,446.1 754.8,457.0 795.1,433.7 799.7,446.1 776.5,458.5 781.1,472.5 759.4,474.0 753.2,463.2 742.4,461.6 730.0,441.5" fill="#15884b" stroke="#f0dc96" stroke-width="1.5" stroke-linejoin="round" paint-order="stroke"/>
<polygon points="802.8,399.6 810.6,395.0 818.3,404.3 827.6,399.6 833.8,402.7 824.5,413.6 829.2,426.0 816.8,429.1 807.5,426.0 799.7,415.1 805.9,410.5" fill="#15884b" stroke="#f0dc96" stroke-width="1.5" stroke-linejoin="round" paint-order="stroke"/>
<polygon points="813.7,395.0 827.6,395.0 824.5,402.7 818.3,402.7" fill="#f4874c"/>
<polygon points="745.5,418.2 776.5,399.6 792.0,404.3 799.7,415.1 807.5,426.0 795.1,433.7 754.8,457.0 750.1,446.1" fill="#fbf3b0"/>
<polygon points="770.0,403.5 778.0,400.0 791.0,404.5 798.0,415.0 790.0,418.0 782.0,410.0" fill="#97d168"/>
<polygon points="798.2,446.1 810.6,430.6 829.2,432.2 843.1,441.5 823.0,447.7 804.4,450.8 779.6,461.6 773.4,458.5" fill="#fbf3b0"/>
<polygon points="835.4,438.4 843.1,441.5 836.9,446.1 828.0,445.0" fill="#f4874c"/>
<polygon points="790.0,452.0 806.0,448.0 800.0,453.0 782.0,460.0" fill="#f4874c"/>
<polygon points="792.0,433.7 798.2,432.2 799.7,439.9 793.5,441.5" fill="#a50026"/>
<polygon points="815.0,431.0 825.0,434.0 822.0,437.0 814.0,434.0" fill="#a50026"/>
<polygon points="849.3,436.8 863.3,429.1 864.8,439.9 857.1,441.5" fill="#15884b" stroke="#f0dc96" stroke-width="1.5" stroke-linejoin="round" paint-order="stroke"/>
<polygon points="861.7,446.1 866.4,439.9 874.1,441.5 875.7,453.9 867.9,455.4" fill="#15884b" stroke="#f0dc96" stroke-width="1.5" stroke-linejoin="round" paint-order="stroke"/>
<polygon points="821.4,472.5 829.2,470.2 835.4,472.5 829.2,477.1 822.2,477.1" fill="#15884b" stroke="#f0dc96" stroke-width="1.5" stroke-linejoin="round" paint-order="stroke"/>
<polygon points="866.4,503.5 869.5,481.8 878.8,475.6 880.3,488.0 874.1,503.5 875.7,517.4 869.5,517.4" fill="#15884b" stroke="#f0dc96" stroke-width="1.5" stroke-linejoin="round" paint-order="stroke"/>
<polygon points="926.0,486.4 929.9,485.7 933.0,492.6 929.1,494.2" fill="#15884b" stroke="#f0dc96" stroke-width="1.5" stroke-linejoin="round" paint-order="stroke"/>
<polygon points="892.7,492.6 897.4,491.8 898.9,500.4 894.3,500.4" fill="#15884b" stroke="#f0dc96" stroke-width="1.5" stroke-linejoin="round" paint-order="stroke"/>
<polygon points="889.6,508.1 893.5,508.1 894.3,514.3 890.4,514.3" fill="#15884b" stroke="#f0dc96" stroke-width="1.5" stroke-linejoin="round" paint-order="stroke"/>
<polygon points="939.2,395.0 953.6,395.0 953.6,405.8 946.9,401.2" fill="#fbf3b0"/>
<polygon points="944.0,395.0 953.6,395.0 953.6,400.0 949.0,398.0" fill="#15884b"/>
<polygon points="911.3,408.9 922.2,415.1 919.1,418.2 912.9,413.6" fill="#fbf3b0"/>
<polygon points="945.4,517.4 953.6,508.1 953.6,512.8 946.9,519.0" fill="#fbf3b0"/>
<polygon points="947.0,516.5 953.0,509.5 953.4,511.5 948.0,517.8" fill="#97d168"/>
<polygon points="908.2,534.5 916.0,529.8 917.5,539.1 909.7,542.2" fill="#fbf3b0"/>
<polygon points="730.0,455.0 736.0,459.0 741.0,464.0 730.0,460.0" fill="#fbf3b0"/>
<path d="M777.4,434.0 778.9,436.4 776.5,437.8 775.1,435.3zM785.3,428.5 786.1,432.9 784.1,433.3 783.3,428.9zM774.4,441.1 776.5,441.9 775.7,444.1 773.6,443.3zM766.8,407.0 767.5,410.8 764.3,411.4 763.7,407.6zM749.2,440.4 752.6,440.4 752.6,442.0 749.2,442.0zM759.3,426.6 760.0,430.5 757.6,431.0 756.9,427.0zM759.2,423.0 760.2,421.2 762.8,422.8 761.8,424.5zM788.9,424.3 794.3,424.3 794.3,427.5 788.9,427.5zM777.3,432.3 781.2,430.9 782.2,433.7 778.3,435.1zM753.4,444.5 755.2,446.0 754.0,447.5 752.1,446.0zM752.8,423.3 755.0,423.3 755.0,425.8 752.8,425.8zM759.2,409.3 763.4,409.3 763.4,411.8 759.2,411.8zM804.8,434.3 809.4,432.6 810.3,434.9 805.6,436.6zM795.3,450.7 797.4,447.1 799.2,448.1 797.1,451.7zM801.5,446.9 801.9,449.2 799.0,449.7 798.6,447.5zM796.1,449.3 798.5,450.1 797.7,452.2 795.4,451.3zM794.5,447.0 795.8,449.3 793.5,450.6 792.2,448.3zM829.3,434.5 830.1,438.6 827.8,439.0 827.0,434.9zM803.1,440.7 805.1,437.1 807.4,438.5 805.4,442.0zM825.9,443.2 827.5,440.6 829.3,441.6 827.7,444.3zM826.4,440.3 829.3,442.8 827.9,444.5 825.0,442.1zM812.5,437.0 816.0,434.1 817.7,436.3 814.3,439.2zM430.4,358.2 431.1,362.0 429.8,362.2 429.2,358.4zM417.6,350.2 422.1,350.2 422.1,352.8 417.6,352.8zM415.2,330.9 416.8,333.8 415.8,334.4 414.1,331.5zM411.1,333.8 414.5,333.8 414.5,335.9 411.1,335.9zM411.7,333.9 414.8,331.3 415.5,332.2 412.4,334.9zM424.4,368.4 427.9,365.5 429.4,367.3 426.0,370.2zM433.3,365.4 433.7,368.0 431.6,368.3 431.1,365.8zM414.6,355.0 417.9,353.8 418.7,356.1 415.4,357.2zM573.0,549.8 574.5,549.2 575.1,550.9 573.6,551.4zM560.2,556.4 562.3,552.8 564.0,553.7 561.9,557.3zM543.1,507.7 546.1,506.6 546.7,508.3 543.7,509.4zM543.6,511.0 545.6,507.5 547.9,508.8 545.8,512.3zM519.8,484.0 520.7,485.6 518.5,486.9 517.6,485.3zM803.7,361.7 805.1,359.3 806.8,360.3 805.5,362.7zM798.9,357.9 799.2,359.9 797.8,360.2 797.5,358.1zM786.4,329.3 788.8,327.2 790.1,328.7 787.6,330.8zM803.1,369.4 806.8,370.7 806.2,372.5 802.4,371.1zM809.6,350.2 811.4,350.2 811.4,352.1 809.6,352.1zM825.3,349.1 827.3,348.4 827.8,349.7 825.8,350.5zM196.3,401.8 197.2,403.5 195.4,404.6 194.4,402.9zM235.1,402.0 235.9,403.4 233.9,404.5 233.1,403.2zM191.2,400.3 194.1,400.3 194.1,401.8 191.2,401.8zM209.6,398.2 211.8,396.3 212.5,397.2 210.3,399.0zM198.7,401.9 201.3,404.1 200.3,405.2 197.8,403.1zM264.4,385.8 267.8,385.8 267.8,388.1 264.4,388.1zM137.2,382.3 139.2,381.6 139.6,382.7 137.6,383.4zM130.5,372.7 132.3,372.0 133.0,373.8 131.2,374.5zM122.0,373.0 124.2,372.2 124.8,374.0 122.6,374.8z" fill="#fdc77a"/>
<path d="M788.8,433.7 790.0,431.6 791.7,432.5 790.5,434.7zM778.3,425.7 779.0,430.0 777.1,430.3 776.3,426.0zM756.9,425.9 759.0,425.2 759.6,426.9 757.5,427.7zM776.1,439.6 778.8,434.9 780.6,435.9 777.9,440.6zM792.1,430.5 792.5,433.0 790.7,433.3 790.2,430.9zM769.0,417.9 772.3,415.2 774.3,417.5 771.0,420.3zM763.7,445.4 765.4,446.8 764.5,448.0 762.7,446.5zM804.6,424.5 806.8,426.4 805.5,427.9 803.3,426.1zM756.2,419.5 757.7,420.8 756.6,422.1 755.1,420.8zM784.5,426.6 789.0,426.6 789.0,429.2 784.5,429.2zM753.4,413.5 755.2,412.0 757.1,414.4 755.4,415.8zM760.0,411.3 764.7,409.6 765.6,412.2 760.9,413.9zM772.1,415.7 774.4,411.6 776.8,413.0 774.4,417.1zM766.9,410.0 768.1,412.2 766.6,413.1 765.3,411.0zM770.5,437.7 771.5,435.9 773.4,437.0 772.4,438.8zM758.9,430.2 760.3,427.9 761.8,428.7 760.5,431.0zM778.7,440.0 783.2,438.4 784.2,441.1 779.7,442.8zM747.2,431.9 751.3,428.4 753.1,430.6 749.0,434.1zM789.0,414.7 790.9,418.1 789.6,418.9 787.7,415.5zM765.6,441.5 767.1,440.1 769.1,442.5 767.5,443.8zM745.5,420.3 748.4,422.7 747.0,424.4 744.1,422.0zM765.4,417.2 768.1,421.9 765.4,423.5 762.7,418.8zM753.7,433.9 754.4,437.9 751.7,438.4 751.0,434.4zM791.9,418.2 797.2,418.2 797.2,419.6 791.9,419.6zM769.6,409.6 772.9,408.4 773.7,410.4 770.3,411.7zM783.1,408.7 785.0,409.4 784.5,410.9 782.6,410.1zM782.0,454.1 783.5,456.7 781.0,458.1 779.5,455.5zM818.5,443.1 821.7,445.9 819.9,448.1 816.6,445.3zM791.4,453.1 793.7,449.1 795.0,449.9 792.7,453.9zM810.4,441.1 811.9,442.4 810.5,444.1 809.0,442.8zM807.2,447.0 808.5,449.2 806.3,450.5 805.0,448.2zM425.6,338.3 427.3,336.8 428.0,337.7 426.3,339.1zM430.6,358.3 433.8,361.0 432.5,362.5 429.3,359.9zM414.4,361.1 416.7,363.0 415.4,364.5 413.2,362.6zM407.0,356.9 410.0,354.3 411.0,355.5 408.0,358.1zM543.2,527.2 546.0,526.2 546.6,527.8 543.8,528.9zM540.9,535.8 544.2,535.8 544.2,537.5 540.9,537.5zM543.8,512.3 545.1,514.7 543.0,515.9 541.6,513.5zM528.8,498.5 530.5,498.5 530.5,500.1 528.8,500.1zM538.2,510.5 541.4,510.5 541.4,512.8 538.2,512.8zM540.7,533.7 542.5,533.7 542.5,535.2 540.7,535.2zM790.9,342.6 792.9,346.1 791.2,347.1 789.2,343.6zM801.2,360.2 802.1,361.8 800.6,362.7 799.7,361.1zM778.0,338.7 779.5,336.1 781.0,336.9 779.5,339.6zM819.1,354.8 819.6,357.8 817.9,358.1 817.4,355.1zM785.2,346.7 787.7,347.6 787.2,349.1 784.6,348.2zM801.6,367.1 803.6,367.1 803.6,368.7 801.6,368.7zM801.0,345.2 802.6,346.6 801.3,348.3 799.6,346.9zM801.5,359.0 804.4,359.0 804.4,361.3 801.5,361.3zM807.9,333.5 810.8,335.9 809.8,337.2 806.8,334.7zM784.5,348.0 787.1,347.0 787.8,349.0 785.2,349.9zM800.6,350.4 801.8,348.3 803.0,349.0 801.8,351.1zM799.4,332.8 802.1,330.5 803.1,331.6 800.4,333.9zM201.2,401.0 204.3,401.0 204.3,402.6 201.2,402.6zM196.6,402.6 199.0,401.7 199.4,402.9 197.0,403.8zM192.6,395.6 195.5,396.6 194.9,398.1 192.1,397.1zM226.6,399.2 229.3,401.4 227.8,403.2 225.2,400.9zM216.4,395.2 216.9,398.2 215.4,398.4 214.9,395.5zM222.5,407.4 223.7,406.4 224.9,407.8 223.7,408.8zM227.7,401.5 230.1,399.5 231.2,400.8 228.8,402.8zM261.7,391.3 262.4,395.0 261.3,395.2 260.7,391.5zM121.7,354.1 123.9,354.8 123.3,356.4 121.2,355.6zM114.2,364.9 114.6,367.1 113.0,367.3 112.6,365.2zM142.3,354.3 144.9,356.4 144.0,357.6 141.4,355.4zM118.6,349.3 121.3,349.3 121.3,350.7 118.6,350.7zM127.6,390.5 130.2,389.5 130.8,391.4 128.3,392.3zM136.3,382.8 139.2,383.9 138.8,385.1 135.9,384.0zM129.3,361.1 130.2,362.7 128.5,363.7 127.6,362.2z" fill="#f4874c"/>
<path d="M788.6,425.9 790.6,427.6 789.1,429.3 787.2,427.7zM760.4,430.8 761.9,429.5 764.0,432.0 762.4,433.3zM776.8,409.9 779.1,411.8 777.1,414.1 774.9,412.2zM755.4,440.5 757.8,438.5 759.4,440.3 757.0,442.3zM781.5,420.0 786.6,421.9 786.0,423.6 780.9,421.8zM798.1,414.0 800.6,416.1 798.9,418.3 796.3,416.2zM753.3,443.6 755.6,447.4 753.4,448.7 751.1,444.8zM766.7,432.4 767.7,437.7 765.9,438.0 765.0,432.7zM803.7,426.4 804.7,424.6 805.9,425.3 804.9,427.1zM789.0,433.7 793.3,433.7 793.3,436.5 789.0,436.5zM794.4,429.4 797.0,433.8 795.6,434.7 793.0,430.3zM787.5,404.7 791.2,401.6 793.2,404.0 789.5,407.1zM751.9,444.4 753.9,447.8 752.2,448.8 750.2,445.3zM784.6,437.4 785.3,441.3 783.7,441.6 783.0,437.7zM422.7,353.3 424.0,355.7 422.4,356.6 421.0,354.2zM410.2,339.5 412.2,338.7 412.8,340.4 410.8,341.1zM411.5,356.2 412.9,357.4 412.2,358.3 410.8,357.0zM393.4,331.1 394.3,329.6 395.8,330.4 394.9,332.0zM429.4,363.4 429.7,365.0 427.1,365.4 426.8,363.8zM429.0,357.9 431.7,355.6 432.6,356.7 430.0,358.9zM402.1,343.6 402.4,345.7 400.6,346.0 400.3,343.9zM424.0,346.0 424.6,349.8 422.5,350.2 421.8,346.4zM418.4,346.9 420.4,345.2 421.2,346.1 419.2,347.8zM382.5,328.7 385.9,328.7 385.9,329.9 382.5,329.9zM413.2,348.1 414.2,349.7 412.8,350.5 411.9,348.9zM396.4,337.5 398.6,341.3 396.7,342.4 394.5,338.6zM385.6,338.8 386.8,340.9 384.5,342.2 383.3,340.1zM424.1,349.6 425.3,351.7 423.2,352.9 422.0,350.8zM420.4,342.1 421.9,343.4 420.8,344.8 419.2,343.5zM824.9,347.1 826.9,345.4 827.6,346.3 825.6,347.9zM802.9,370.3 805.0,368.5 805.8,369.5 803.7,371.3zM806.2,347.3 809.3,346.2 809.7,347.2 806.6,348.4zM790.7,359.3 791.8,357.4 793.4,358.3 792.3,360.2zM237.7,398.5 239.7,397.8 240.4,399.6 238.4,400.3zM187.1,398.0 188.2,396.0 189.7,396.8 188.5,398.8zM261.1,384.9 262.8,382.0 264.1,382.7 262.4,385.6zM267.7,387.9 268.3,390.8 266.9,391.0 266.4,388.1zM233.5,395.4 235.0,398.0 233.1,399.2 231.5,396.5zM245.1,395.6 248.1,395.6 248.1,397.2 245.1,397.2zM212.2,393.2 214.2,396.7 212.2,397.8 210.2,394.4z" fill="#97d168"/>
<path d="M754.5,428.2 756.4,426.7 757.6,428.1 755.7,429.7zM794.3,413.1 796.4,413.1 796.4,415.5 794.3,415.5zM783.8,407.8 787.4,409.1 786.3,412.1 782.7,410.8zM763.8,431.9 765.6,434.9 764.1,435.7 762.4,432.8zM780.8,437.6 783.3,439.6 782.2,440.9 779.8,438.8zM772.0,405.0 775.9,408.3 774.8,409.6 770.9,406.3zM752.0,444.4 756.1,445.9 755.3,448.0 751.2,446.5zM777.0,401.7 778.5,399.3 780.8,400.7 779.4,403.1zM774.9,399.9 777.6,398.9 778.4,401.1 775.7,402.1zM751.7,418.7 753.5,417.2 754.5,418.4 752.8,419.9zM764.4,425.1 766.1,428.1 763.3,429.7 761.6,426.8zM790.9,429.0 793.8,429.0 793.8,431.4 790.9,431.4zM770.4,441.3 773.8,441.3 773.8,443.3 770.4,443.3zM790.6,417.0 794.4,413.9 795.9,415.7 792.1,418.9zM774.9,432.0 776.7,435.1 774.9,436.1 773.1,433.1zM761.8,445.6 764.4,446.5 763.5,449.1 760.9,448.2zM768.5,444.1 770.7,444.9 769.7,447.6 767.5,446.8zM746.6,429.8 749.1,429.8 749.1,432.6 746.6,432.6zM759.3,426.3 762.4,425.2 763.2,427.3 760.1,428.5zM774.2,410.0 778.8,411.7 778.3,413.0 773.8,411.4zM753.4,426.5 755.7,430.5 753.2,431.9 750.9,427.9zM755.2,452.4 758.3,455.1 756.6,457.1 753.5,454.4zM750.4,431.5 753.6,430.3 754.6,433.2 751.4,434.4zM778.8,405.4 783.8,407.2 783.1,409.0 778.2,407.2zM779.8,417.2 780.8,422.6 778.1,423.1 777.1,417.7zM789.1,412.9 791.7,412.0 792.5,414.3 789.9,415.2zM802.4,423.1 806.2,426.4 805.3,427.5 801.5,424.3zM762.0,443.8 763.0,449.1 760.3,449.5 759.4,444.2zM761.2,429.7 762.0,434.4 758.9,434.9 758.1,430.3zM780.7,424.9 781.4,429.3 778.5,429.8 777.7,425.4zM758.6,432.6 760.1,429.9 762.7,431.4 761.1,434.1zM784.4,417.0 787.1,419.2 785.5,421.1 782.9,418.9zM779.3,430.4 779.8,433.0 776.9,433.5 776.5,430.9zM756.5,437.3 760.5,433.9 761.4,435.0 757.4,438.4zM793.2,416.3 794.0,420.7 791.9,421.1 791.1,416.7zM755.2,449.2 759.6,449.2 759.6,450.9 755.2,450.9zM750.3,444.1 752.2,440.7 753.7,441.6 751.8,444.9zM755.1,425.3 760.3,427.1 759.7,428.7 754.6,426.8zM763.5,446.9 765.9,446.9 765.9,449.6 763.5,449.6zM780.3,430.9 784.5,434.4 782.6,436.7 778.4,433.2zM790.7,432.6 793.3,433.6 792.8,435.0 790.2,434.1zM752.6,423.6 754.2,426.3 752.4,427.4 750.8,424.6zM773.9,422.3 775.5,425.1 773.0,426.5 771.4,423.7zM778.3,459.1 780.0,456.2 781.4,457.0 779.7,459.9zM810.4,447.4 811.7,445.1 813.7,446.2 812.3,448.5zM816.9,445.7 820.3,444.4 821.3,447.0 817.9,448.3zM825.0,440.8 828.0,443.2 826.6,444.9 823.7,442.4zM819.0,447.1 822.2,444.4 823.8,446.2 820.5,448.9zM790.6,449.5 790.9,451.5 788.3,452.0 787.9,450.0zM815.3,445.0 817.4,444.2 817.9,445.6 815.8,446.4zM798.8,450.3 801.2,454.5 798.7,456.0 796.2,451.8zM827.4,436.0 830.8,433.1 832.0,434.5 828.5,437.4zM790.6,450.7 794.1,453.6 792.8,455.1 789.4,452.2zM807.4,445.7 808.2,450.0 806.0,450.4 805.2,446.0zM823.0,435.4 825.7,437.6 824.3,439.3 821.6,437.1zM827.6,443.7 830.8,442.5 831.4,444.1 828.2,445.3zM788.9,452.1 790.9,455.6 789.0,456.6 787.0,453.2zM788.6,454.7 791.3,453.8 792.3,456.5 789.6,457.4zM422.0,346.5 424.9,345.4 425.8,347.9 422.9,348.9zM423.2,330.6 427.4,329.1 428.2,331.3 424.0,332.8zM413.8,341.2 415.6,338.1 416.7,338.8 414.9,341.8zM406.8,359.1 410.3,360.4 409.5,362.5 406.0,361.3zM413.5,366.0 414.3,370.3 412.0,370.7 411.3,366.4zM421.1,325.8 424.2,328.5 422.5,330.5 419.4,327.9zM429.1,363.3 431.1,361.5 432.0,362.6 429.9,364.3zM575.9,554.9 579.2,556.1 578.3,558.6 575.0,557.4zM538.9,534.4 542.5,533.1 543.3,535.1 539.7,536.5zM546.9,526.9 549.5,524.7 550.9,526.4 548.3,528.6zM539.6,528.1 543.7,528.1 543.7,530.5 539.6,530.5zM525.8,493.7 528.0,493.7 528.0,496.1 525.8,496.1zM529.0,493.1 530.8,496.2 528.9,497.4 527.1,494.2zM521.2,480.9 524.2,478.3 525.5,479.8 522.5,482.4zM548.7,549.5 549.6,547.9 551.6,549.0 550.7,550.7zM547.1,539.3 548.6,539.8 548.0,541.4 546.6,540.9zM555.8,549.1 557.1,546.8 558.2,547.4 556.8,549.7z" fill="#a50026"/>
<path d="M414.8,331.1 416.3,331.6 415.7,333.2 414.3,332.6zM410.9,349.7 411.1,351.2 408.8,351.7 408.5,350.1zM420.2,349.7 421.1,351.2 418.9,352.5 418.0,351.0zM426.0,359.2 427.3,357.0 429.4,358.2 428.1,360.4zM414.5,364.3 415.3,368.6 414.0,368.8 413.3,364.6zM399.6,335.0 401.1,334.5 401.5,335.8 400.0,336.3zM536.3,494.7 540.3,493.3 540.7,494.5 536.7,495.9zM537.9,498.2 539.3,497.0 540.1,497.9 538.6,499.1zM542.8,528.0 545.4,530.1 544.4,531.3 541.8,529.2zM220.9,407.4 224.9,407.4 224.9,408.9 220.9,408.9zM268.8,383.0 270.4,384.3 269.3,385.5 267.7,384.2zM197.5,399.3 198.5,397.5 199.7,398.2 198.7,400.0zM221.9,396.4 224.4,398.5 223.5,399.5 221.1,397.4z" fill="#15884b"/>
<path d="M544.0,521.2 544.5,524.0 543.4,524.2 542.9,521.4zM542.5,543.3 544.1,546.1 542.5,547.0 540.8,544.2zM518.0,485.0 519.7,482.0 520.8,482.6 519.1,485.7zM542.8,517.8 545.3,519.9 544.5,520.9 542.0,518.8zM539.5,521.6 540.9,520.5 542.6,522.4 541.1,523.6zM543.0,546.5 545.2,542.6 546.4,543.3 544.1,547.2zM539.2,512.1 541.6,513.0 540.9,515.2 538.4,514.3zM533.4,521.8 534.3,523.4 533.3,523.9 532.4,522.3zM541.8,533.0 543.9,531.1 545.4,532.8 543.2,534.7zM543.7,532.6 547.2,531.3 547.7,532.7 544.2,533.9zM528.2,499.5 528.8,503.0 526.3,503.4 525.7,499.9zM551.0,518.4 551.4,520.8 549.4,521.1 549.0,518.8zM531.0,494.7 533.0,496.4 531.8,497.8 529.8,496.1zM529.0,496.7 531.8,494.3 533.3,496.0 530.4,498.5zM557.2,544.5 559.4,546.3 558.5,547.3 556.3,545.5zM537.1,517.9 541.4,517.9 541.4,520.1 537.1,520.1zM796.3,348.4 798.4,346.7 799.2,347.7 797.2,349.4zM819.5,340.3 821.2,343.1 819.4,344.1 817.8,341.3zM788.8,328.4 791.7,329.5 791.3,330.7 788.4,329.6zM814.3,365.3 815.7,362.9 817.0,363.6 815.6,366.0zM785.2,339.7 786.3,341.7 784.6,342.7 783.4,340.7zM789.1,337.7 789.6,340.2 787.6,340.6 787.2,338.0zM818.9,344.9 821.4,344.9 821.4,346.4 818.9,346.4zM807.4,358.6 808.8,361.0 807.2,361.9 805.8,359.5z" fill="#fbf3b0"/>
<path d="M292.0,252.5 C293.8,254.1 300.1,258.2 302.8,262.0 C305.6,265.8 306.4,269.6 308.5,275.4 C310.6,281.2 313.4,289.5 315.5,296.6 C317.6,303.7 319.8,311.9 321.2,317.8 C322.6,323.7 321.4,326.8 324.0,332.0 C326.6,337.2 333.9,343.0 336.7,348.9 C339.5,354.8 339.8,361.4 341.0,367.3 C342.2,373.2 343.3,381.4 343.8,384.2" fill="none" stroke="#15884b" stroke-width="5.2" stroke-linecap="round" stroke-dasharray="15.6 1.8 7.3 1.6"/>
<path d="M362.2,268.4 C360.8,269.1 357.0,268.6 353.7,272.6 C350.4,276.6 346.6,286.8 342.4,292.4 C338.2,298.0 331.4,302.5 328.3,306.5 C325.2,310.5 324.7,314.8 324.0,316.4" fill="none" stroke="#15884b" stroke-width="3.4" stroke-linecap="round" stroke-dasharray="10.2 1.2 4.8 1.0"/>
<path d="M338.0,345.0 C341.6,343.3 352.4,336.7 359.3,334.8 C366.2,332.9 372.5,332.9 379.1,333.4 C385.7,333.9 395.6,336.9 398.9,337.6" fill="none" stroke="#97d168" stroke-width="2.2" stroke-linecap="round" stroke-dasharray="6.6 0.8 3.1 0.7"/>
<path d="M334.0,382.0 C334.8,384.2 337.5,391.2 339.0,395.0 C340.5,398.8 342.3,403.3 343.0,405.0" fill="none" stroke="#fdc77a" stroke-width="1.5" stroke-linecap="round" stroke-dasharray="4.5 0.5 2.1 0.4"/>
<path d="M348.0,390.0 C348.7,391.7 350.7,396.7 352.0,400.0 C353.3,403.3 355.3,408.3 356.0,410.0" fill="none" stroke="#97d168" stroke-width="1.5" stroke-linecap="round" stroke-dasharray="4.5 0.5 2.1 0.4"/>
<path d="M377.5,463.9 C379.1,464.5 383.2,466.1 386.8,467.8 C390.4,469.5 396.9,471.1 399.2,474.0 C401.5,476.9 401.2,481.5 400.7,484.9 C400.2,488.3 396.4,491.1 396.1,494.2 C395.9,497.3 399.2,499.4 399.2,503.5 C399.2,507.6 395.9,514.8 396.1,518.9 C396.4,523.0 397.6,526.9 400.7,528.2 C403.8,529.5 413.3,525.2 414.6,526.7 C415.9,528.2 411.6,534.9 408.5,537.5 C405.4,540.1 398.7,539.1 396.1,542.2 C393.5,545.3 393.5,553.8 393.0,556.1" fill="none" stroke="#97d168" stroke-width="2.2" stroke-linecap="round" stroke-dasharray="6.6 0.8 3.1 0.7"/>
<path d="M892.5,278.3 C892.7,280.6 892.7,287.7 893.9,292.4 C895.1,297.1 898.2,302.3 899.6,306.5 C901.0,310.7 902.9,314.0 902.4,317.8 C901.9,321.6 898.0,325.8 896.8,329.1 C895.6,332.4 894.0,334.3 895.4,337.6 C896.8,340.9 903.2,345.6 905.3,348.9 C907.4,352.2 908.8,354.6 908.1,357.4 C907.4,360.2 903.4,362.8 901.0,365.9 C898.6,369.0 896.4,372.4 893.9,375.8 C891.4,379.2 886.9,382.2 886.0,386.0 C885.1,389.8 887.9,396.3 888.3,398.4" fill="none" stroke="#15884b" stroke-width="5" stroke-linecap="round" stroke-dasharray="15.0 1.8 7.0 1.5"/>
<path d="M719.2,292.4 C720.0,295.7 722.3,306.5 724.1,312.2 C725.9,317.9 728.4,320.6 729.8,326.3 C731.2,332.0 731.7,340.5 732.6,346.1 C733.5,351.7 734.6,357.7 735.0,360.0" fill="none" stroke="#97d168" stroke-width="2.6" stroke-linecap="round" stroke-dasharray="7.8 0.9 3.6 0.8"/>
<path d="M712.0,280.0 C713.0,282.0 716.5,287.8 718.0,292.0 C719.5,296.2 720.5,302.8 721.0,305.0" fill="none" stroke="#fdc77a" stroke-width="1.5" stroke-linecap="round" stroke-dasharray="4.5 0.5 2.1 0.4"/>
</g></g>
<rect x="96.2" y="252" width="3.1" height="308" fill="#4a8fd8"/>
<rect x="96.2" y="557" width="858" height="3" fill="#4a8fd8"/>
</g>
<circle cx="97.4" cy="559.2" r="3.9" fill="#fff" stroke="#2d2d3a" stroke-width="1.6"/>
<circle cx="534.1" cy="337.6" r="4.1" fill="#fff" stroke="#2d2d3a" stroke-width="1.6"/>
</svg>
<svg width="1950" height="1097" viewBox="0 0 1950 1097" style="pointer-events:none">
<g id="chart">
<path d="M1049.6,286 V612.5 H1922.5" fill="none" stroke="#dcdcdc" stroke-width="1.2"/>
<path d="M1137.2,547.0 C1160.5,543.3 1265.2,535.4 1311.7,519.9 C1358.2,504.3 1439.7,432.6 1486.2,430.4 C1532.7,428.3 1614.2,522.8 1660.7,503.6 C1707.2,484.4 1811.9,315.7 1835.2,286.8 L1835.2,612.0 L1137.2,612.0 Z" fill="#e9df96" fill-opacity="0.4"/>
<path d="M1137.2,547.0 C1160.5,543.3 1265.2,535.4 1311.7,519.9 C1358.2,504.3 1439.7,432.6 1486.2,430.4 C1532.7,428.3 1614.2,522.8 1660.7,503.6 C1707.2,484.4 1811.9,315.7 1835.2,286.8" fill="none" stroke="#e9df96" stroke-width="1.6"/>
<circle cx="1137.2" cy="547.0" r="4.3" fill="#e9df96" fill-opacity="0.3" stroke="#e9df96" stroke-width="1.5"/>
<circle cx="1311.7" cy="519.9" r="4.3" fill="#e9df96" fill-opacity="0.3" stroke="#e9df96" stroke-width="1.5"/>
<circle cx="1486.2" cy="430.4" r="4.3" fill="#e9df96" fill-opacity="0.3" stroke="#e9df96" stroke-width="1.5"/>
<circle cx="1660.7" cy="503.6" r="4.3" fill="#e9df96" fill-opacity="0.3" stroke="#e9df96" stroke-width="1.5"/>
<circle cx="1835.2" cy="286.8" r="4.3" fill="#e9df96" fill-opacity="0.3" stroke="#e9df96" stroke-width="1.5"/>
<path d="M1137.2,384.4 C1160.5,383.3 1265.2,379.5 1311.7,376.2 C1358.2,373.0 1439.7,348.8 1486.2,360.0 C1532.7,371.2 1614.2,441.1 1660.7,460.2 C1707.2,479.4 1811.9,497.8 1835.2,503.6 L1835.2,612.0 L1137.2,612.0 Z" fill="#c8d522" fill-opacity="0.36"/>
<path d="M1137.2,384.4 C1160.5,383.3 1265.2,379.5 1311.7,376.2 C1358.2,373.0 1439.7,348.8 1486.2,360.0 C1532.7,371.2 1614.2,441.1 1660.7,460.2 C1707.2,479.4 1811.9,497.8 1835.2,503.6" fill="none" stroke="#c8d522" stroke-width="1.6"/>
<circle cx="1137.2" cy="384.4" r="4.3" fill="#c8d522" fill-opacity="0.3" stroke="#c8d522" stroke-width="1.5"/>
<circle cx="1311.7" cy="376.2" r="4.3" fill="#c8d522" fill-opacity="0.3" stroke="#c8d522" stroke-width="1.5"/>
<circle cx="1486.2" cy="360.0" r="4.3" fill="#c8d522" fill-opacity="0.3" stroke="#c8d522" stroke-width="1.5"/>
<circle cx="1660.7" cy="460.2" r="4.3" fill="#c8d522" fill-opacity="0.3" stroke="#c8d522" stroke-width="1.5"/>
<circle cx="1835.2" cy="503.6" r="4.3" fill="#c8d522" fill-opacity="0.3" stroke="#c8d522" stroke-width="1.5"/>
<path d="M1137.2,487.3 C1160.5,493.1 1265.2,541.9 1311.7,530.7 C1358.2,519.5 1439.7,417.4 1486.2,403.3 C1532.7,389.2 1614.2,416.0 1660.7,425.0 C1707.2,434.0 1811.9,464.9 1835.2,471.1 L1835.2,612.0 L1137.2,612.0 Z" fill="#a4b51c" fill-opacity="0.31"/>
<path d="M1137.2,487.3 C1160.5,493.1 1265.2,541.9 1311.7,530.7 C1358.2,519.5 1439.7,417.4 1486.2,403.3 C1532.7,389.2 1614.2,416.0 1660.7,425.0 C1707.2,434.0 1811.9,464.9 1835.2,471.1" fill="none" stroke="#a4b51c" stroke-width="1.6"/>
<circle cx="1137.2" cy="487.3" r="4.3" fill="#a4b51c" fill-opacity="0.3" stroke="#a4b51c" stroke-width="1.5"/>
<circle cx="1311.7" cy="530.7" r="4.3" fill="#a4b51c" fill-opacity="0.3" stroke="#a4b51c" stroke-width="1.5"/>
<circle cx="1486.2" cy="403.3" r="4.3" fill="#a4b51c" fill-opacity="0.3" stroke="#a4b51c" stroke-width="1.5"/>
<circle cx="1660.7" cy="425.0" r="4.3" fill="#a4b51c" fill-opacity="0.3" stroke="#a4b51c" stroke-width="1.5"/>
<circle cx="1835.2" cy="471.1" r="4.3" fill="#a4b51c" fill-opacity="0.3" stroke="#a4b51c" stroke-width="1.5"/>
<path d="M1137.2,378.9 C1160.5,389.8 1265.2,436.8 1311.7,460.2 C1358.2,483.7 1439.7,541.4 1486.2,555.1 C1532.7,568.8 1614.2,560.0 1660.7,563.2 C1707.2,566.5 1811.9,577.3 1835.2,579.5 L1835.2,612.0 L1137.2,612.0 Z" fill="#8a9a14" fill-opacity="0.31"/>
<path d="M1137.2,378.9 C1160.5,389.8 1265.2,436.8 1311.7,460.2 C1358.2,483.7 1439.7,541.4 1486.2,555.1 C1532.7,568.8 1614.2,560.0 1660.7,563.2 C1707.2,566.5 1811.9,577.3 1835.2,579.5" fill="none" stroke="#8a9a14" stroke-width="1.6"/>
<circle cx="1137.2" cy="378.9" r="4.3" fill="#8a9a14" fill-opacity="0.3" stroke="#8a9a14" stroke-width="1.5"/>
<circle cx="1311.7" cy="460.2" r="4.3" fill="#8a9a14" fill-opacity="0.3" stroke="#8a9a14" stroke-width="1.5"/>
<circle cx="1486.2" cy="555.1" r="4.3" fill="#8a9a14" fill-opacity="0.3" stroke="#8a9a14" stroke-width="1.5"/>
<circle cx="1660.7" cy="563.2" r="4.3" fill="#8a9a14" fill-opacity="0.3" stroke="#8a9a14" stroke-width="1.5"/>
<circle cx="1835.2" cy="579.5" r="4.3" fill="#8a9a14" fill-opacity="0.3" stroke="#8a9a14" stroke-width="1.5"/>
<circle cx="1009" cy="262.2" r="4.6" fill="#8a9a14" fill-opacity="0.35" stroke="#8a9a14" stroke-width="1.5"/>
<circle cx="1086" cy="262.2" r="4.6" fill="#a4b51c" fill-opacity="0.35" stroke="#a4b51c" stroke-width="1.5"/>
<circle cx="1163" cy="262.2" r="4.6" fill="#c8d522" fill-opacity="0.35" stroke="#c8d522" stroke-width="1.5"/>
<circle cx="1240" cy="262.2" r="4.6" fill="#e9df96" fill-opacity="0.35" stroke="#e9df96" stroke-width="1.5"/>
</g></svg>
<svg width="1950" height="1097" viewBox="0 0 1950 1097" style="pointer-events:none">
<g id="gauges">
<path d="M1113.50,1016.20 A104,104 0 0 1 1218.23,912.20 L1217.93,955.20 A61,61 0 0 0 1156.50,1016.20 Z" fill="#8a9a0c"/>
<path d="M1217.50,912.20 A104,104 0 0 1 1307.57,964.20 L1270.33,985.70 A61,61 0 0 0 1217.50,955.20 Z" fill="#a8b800"/>
<path d="M1307.57,964.20 A104,104 0 0 1 1321.50,1016.20 L1278.50,1016.20 A61,61 0 0 0 1270.33,985.70 Z" fill="#c5d600"/>
<line x1="1267.73" y1="987.20" x2="1310.16" y2="962.70" stroke="#fff" stroke-width="6"/>
<polygon points="1220.85,1019.35 1298.71,932.64 1295.79,929.91 1214.15,1013.05" fill="#444"/>
<circle cx="1217.5" cy="1016.2" r="7.4" fill="#444"/>
<path d="M1596.80,1016.20 A104,104 0 0 1 1701.53,912.20 L1701.23,955.20 A61,61 0 0 0 1639.80,1016.20 Z" fill="#8a9a0c"/>
<path d="M1700.80,912.20 A104,104 0 0 1 1790.87,964.20 L1753.63,985.70 A61,61 0 0 0 1700.80,955.20 Z" fill="#a8b800"/>
<path d="M1790.87,964.20 A104,104 0 0 1 1804.80,1016.20 L1761.80,1016.20 A61,61 0 0 0 1753.63,985.70 Z" fill="#c5d600"/>
<line x1="1751.03" y1="987.20" x2="1793.46" y2="962.70" stroke="#fff" stroke-width="6"/>
<polygon points="1703.47,1012.45 1607.07,946.99 1604.75,950.24 1698.13,1019.95" fill="#444"/>
<circle cx="1700.8" cy="1016.2" r="7.4" fill="#444"/>
</g></svg>
<svg width="1950" height="1097" viewBox="0 0 1950 1097" style="pointer-events:none">
<g id="logo-carbontribe">
<circle cx="67" cy="60.7" r="28" fill="#78b45a"/>
<text x="66.5" y="62.4" font-family="Liberation Sans, sans-serif" font-weight="700" font-size="9.2" fill="#fff" text-anchor="middle" textLength="51" lengthAdjust="spacingAndGlyphs">Carbontribe</text>
<line x1="46" y1="68.6" x2="88" y2="68.6" stroke="#e8f4e0" stroke-opacity="0.75" stroke-width="1.1" stroke-dasharray="3.2 0.9 1.4 0.8 4 0.9 2.2 0.8"/>
</g>
<g id="logo-forest">
<defs><clipPath id="fc"><circle cx="63.6" cy="145.6" r="28.1"/></clipPath></defs>
<g clip-path="url(#fc)">
<rect x="35" y="117" width="58" height="58" fill="#fff"/>
<!-- gray far trees -->
<polygon points="56,175 56,150 58,146 59.5,150 61,143 63,150 64.5,146 66,152 67,148 69,153 70,146 72,152 73,175" fill="#c4c4c4"/>
<polygon points="60,175 60.5,160 62,155 63.5,161 65,158 66.5,163 68,175" fill="#f6f6f6"/>
<!-- mid gray trees -->
<polygon points="44,175 47,152 49,145 50.5,150 52,144 54,152 56,158 58,166 60,175" fill="#555"/>
<polygon points="67,175 69,164 71,156 73,149 75,143 76.5,148 78,140 80,147 82,175" fill="#555"/>
<!-- black foreground -->
<polygon points="34,175 34,134 36.5,136 38,134.5 39,139 41,138 42.5,143 44,142 45.5,148 47.5,147 49,153 50.5,152 52,158 53.5,157 55,163 57,166 59,169 62,168 64,169.5 66,166 68,162 69.5,163 71,157 72.5,158 74,152 75.5,153 77,147 78.5,148 80,142 81.5,143 83,137 84.5,138 86,132 88,133 89,131 91,134 93,140 93,175" fill="#0c0c0c"/>
</g>
<text x="64" y="137.3" font-family="Liberation Serif, serif" font-style="italic" font-weight="700" font-size="8.5" fill="#222" text-anchor="middle" textLength="22" lengthAdjust="spacingAndGlyphs">forest</text>
<line x1="56" y1="139.7" x2="71" y2="139.7" stroke="#777" stroke-width="0.7" stroke-dasharray="1.4 1"/>
</g>
</svg>

<span class="t" id="t0" style="font-size:28.17px;line-height:28.17px;top:45.00px;color:#fff;font-weight:700;left:686.00px;letter-spacing:-0.444px;">Carbontribe Labs | Dashboard - alpha</span>
<span class="t" id="t1" style="font-size:29.7px;line-height:29.7px;top:136.00px;color:#111;font-weight:700;left:132.80px;letter-spacing:-0.497px;">Project β | Change Detection in fragmented areas</span>
<span class="t" id="t2" style="font-size:20.39px;line-height:20.39px;top:147.00px;color:#111;font-weight:400;left:1033.20px;letter-spacing:-0.500px;">J Credit</span>
<span class="t" id="t3" style="font-size:20.99px;line-height:20.99px;top:139.00px;color:#3a4509;font-weight:400;left:1473.70px;letter-spacing:-0.413px;">Select Area</span>
<span class="t" id="t4" style="font-size:19.01px;line-height:19.01px;top:144.00px;color:#111;font-weight:400;left:1715.00px;letter-spacing:-0.497px;">Area 1</span>
<span class="t" id="t5" style="font-size:20.26px;line-height:20.26px;top:212.00px;color:#3a4509;font-weight:400;-webkit-text-stroke:0.45px #3a4509;left:371.80px;letter-spacing:0.113px;">Change Detection by Area</span>
<span class="t" id="t6" style="font-size:20.47px;line-height:20.47px;top:214.00px;color:#3a4509;font-weight:400;-webkit-text-stroke:0.45px #3a4509;left:998.20px;letter-spacing:0.361px;">Incremental difference after reforestation</span>
<span class="t" id="t7" style="font-size:17.93px;line-height:17.93px;top:254.00px;color:#757575;font-weight:400;left:1022.00px;letter-spacing:-0.362px;">Area 1</span>
<span class="t" id="t8" style="font-size:17.93px;line-height:17.93px;top:254.00px;color:#757575;font-weight:400;left:1099.00px;letter-spacing:-0.362px;">Area 2</span>
<span class="t" id="t9" style="font-size:17.93px;line-height:17.93px;top:254.00px;color:#757575;font-weight:400;left:1176.00px;letter-spacing:-0.163px;">Area 3</span>
<span class="t" id="t10" style="font-size:17.93px;line-height:17.93px;top:254.00px;color:#757575;font-weight:400;left:1253.00px;letter-spacing:-0.163px;">Area 4</span>
<span class="t" id="t11" style="font-size:17.5px;line-height:17.5px;top:603.00px;color:#5f5f5f;font-weight:400;left:832.90px;width:200px;text-align:right;">0</span>
<span class="t" id="t12" style="font-size:17.5px;line-height:17.5px;top:576.00px;color:#5f5f5f;font-weight:400;left:832.90px;width:200px;text-align:right;">10</span>
<span class="t" id="t13" style="font-size:17.5px;line-height:17.5px;top:549.00px;color:#5f5f5f;font-weight:400;left:832.90px;width:200px;text-align:right;">20</span>
<span class="t" id="t14" style="font-size:17.5px;line-height:17.5px;top:522.00px;color:#5f5f5f;font-weight:400;left:832.90px;width:200px;text-align:right;">30</span>
<span class="t" id="t15" style="font-size:17.5px;line-height:17.5px;top:495.00px;color:#5f5f5f;font-weight:400;left:832.90px;width:200px;text-align:right;">40</span>
<span class="t" id="t16" style="font-size:17.5px;line-height:17.5px;top:468.00px;color:#5f5f5f;font-weight:400;left:832.90px;width:200px;text-align:right;">50</span>
<span class="t" id="t17" style="font-size:17.5px;line-height:17.5px;top:440.00px;color:#5f5f5f;font-weight:400;left:832.90px;width:200px;text-align:right;">60</span>
<span class="t" id="t18" style="font-size:17.5px;line-height:17.5px;top:413.00px;color:#5f5f5f;font-weight:400;left:832.90px;width:200px;text-align:right;">70</span>
<span class="t" id="t19" style="font-size:17.5px;line-height:17.5px;top:386.00px;color:#5f5f5f;font-weight:400;left:832.90px;width:200px;text-align:right;">80</span>
<span class="t" id="t20" style="font-size:17.5px;line-height:17.5px;top:359.00px;color:#5f5f5f;font-weight:400;left:832.90px;width:200px;text-align:right;">90</span>
<span class="t" id="t21" style="font-size:17.5px;line-height:17.5px;top:332.00px;color:#5f5f5f;font-weight:400;left:832.90px;width:200px;text-align:right;">100</span>
<span class="t" id="t22" style="font-size:17.5px;line-height:17.5px;top:305.00px;color:#5f5f5f;font-weight:400;left:832.90px;width:200px;text-align:right;">110</span>
<span class="t" id="t23" style="font-size:17.5px;line-height:17.5px;top:278.00px;color:#5f5f5f;font-weight:400;left:832.90px;width:200px;text-align:right;">120</span>
<span class="t" id="t24" style="font-size:17.8px;line-height:17.8px;top:626.00px;color:#555;font-weight:400;left:1037.20px;width:200px;text-align:center;">2019</span>
<span class="t" id="t25" style="font-size:17.8px;line-height:17.8px;top:626.00px;color:#555;font-weight:400;left:1211.70px;width:200px;text-align:center;">2020</span>
<span class="t" id="t26" style="font-size:17.8px;line-height:17.8px;top:626.00px;color:#555;font-weight:400;left:1386.20px;width:200px;text-align:center;">2021</span>
<span class="t" id="t27" style="font-size:17.8px;line-height:17.8px;top:626.00px;color:#555;font-weight:400;left:1560.70px;width:200px;text-align:center;">2022</span>
<span class="t" id="t28" style="font-size:17.8px;line-height:17.8px;top:626.00px;color:#555;font-weight:400;left:1735.20px;width:200px;text-align:center;">2023</span>
<span class="t" id="t29" style="font-size:20.99px;line-height:20.99px;top:685.00px;color:#3a4509;font-weight:400;-webkit-text-stroke:0.45px #3a4509;left:29.60px;letter-spacing:-0.286px;">Change Detection by Area</span>
<span class="t" id="t30" style="font-size:18.78px;line-height:18.78px;top:688.00px;color:#5a6580;font-weight:400;left:419.00px;letter-spacing:-0.294px;">Reforestation Plan</span>
<span class="t" id="t31" style="font-size:18.78px;line-height:18.78px;top:688.00px;color:#5a6580;font-weight:400;left:619.60px;letter-spacing:-0.241px;">Deforestation Plan</span>
<span class="t" id="t32" style="font-size:18.78px;line-height:18.78px;top:688.00px;color:#5a6580;font-weight:400;left:821.00px;letter-spacing:-0.361px;">Co2 Prediction</span>
<span class="t" id="t33" style="font-size:18.78px;line-height:18.78px;top:732.00px;color:#8f9c1d;font-weight:400;-webkit-text-stroke:0.6px #8f9c1d;left:46.40px;letter-spacing:-0.074px;">Total ha. of forest (ha.) growth</span>
<span class="t" id="t34" style="font-size:27.34px;line-height:27.34px;top:758.00px;color:#333;font-weight:400;left:39.60px;letter-spacing:-0.498px;">1,182</span>
<span class="t" id="t35" style="font-size:15.55px;line-height:15.55px;top:765.00px;color:#444;font-weight:400;left:125.60px;letter-spacing:-0.513px;">12%</span>
<span class="t" id="t36" style="font-size:16px;line-height:16px;top:806.00px;color:#000;font-weight:400;left:73.00px;width:200px;text-align:center;">2019</span>
<span class="t" id="t37" style="font-size:16px;line-height:16px;top:806.00px;color:#000;font-weight:400;left:245.60px;width:200px;text-align:center;">2020</span>
<span class="t" id="t38" style="font-size:16px;line-height:16px;top:806.00px;color:#000;font-weight:400;left:418.20px;width:200px;text-align:center;">2021</span>
<span class="t" id="t39" style="font-size:16px;line-height:16px;top:806.00px;color:#000;font-weight:400;left:590.80px;width:200px;text-align:center;">2022</span>
<span class="t" id="t40" style="font-size:16px;line-height:16px;top:806.00px;color:#000;font-weight:400;left:763.40px;width:200px;text-align:center;">2023</span>
<span class="t" id="t41" style="font-size:16.4px;line-height:16.4px;top:867.00px;color:#000;font-weight:400;left:27.60px;letter-spacing:-0.059px;">Area 1</span>
<span class="t" id="t42" style="font-size:16.3px;line-height:16.3px;top:866.00px;color:#000;font-weight:400;left:76.30px;width:200px;text-align:center;">86</span>
<span class="t" id="t43" style="font-size:16.3px;line-height:16.3px;top:866.00px;color:#000;font-weight:400;left:248.90px;width:200px;text-align:center;">56</span>
<span class="t" id="t44" style="font-size:16.3px;line-height:16.3px;top:866.00px;color:#000;font-weight:400;left:421.50px;width:200px;text-align:center;">21</span>
<span class="t" id="t45" style="font-size:16.3px;line-height:16.3px;top:866.00px;color:#000;font-weight:400;left:594.10px;width:200px;text-align:center;">18</span>
<span class="t" id="t46" style="font-size:16.3px;line-height:16.3px;top:866.00px;color:#000;font-weight:400;left:766.70px;width:200px;text-align:center;">12</span>
<span class="t" id="t47" style="font-size:16.4px;line-height:16.4px;top:924.00px;color:#000;font-weight:400;left:27.60px;letter-spacing:-0.059px;">Area 2</span>
<span class="t" id="t48" style="font-size:16.3px;line-height:16.3px;top:923.00px;color:#000;font-weight:400;left:76.30px;width:200px;text-align:center;">46</span>
<span class="t" id="t49" style="font-size:16.3px;line-height:16.3px;top:923.00px;color:#000;font-weight:400;left:248.90px;width:200px;text-align:center;">30</span>
<span class="t" id="t50" style="font-size:16.3px;line-height:16.3px;top:923.00px;color:#000;font-weight:400;left:421.50px;width:200px;text-align:center;">77</span>
<span class="t" id="t51" style="font-size:16.3px;line-height:16.3px;top:923.00px;color:#000;font-weight:400;left:594.10px;width:200px;text-align:center;">69</span>
<span class="t" id="t52" style="font-size:16.3px;line-height:16.3px;top:923.00px;color:#000;font-weight:400;left:766.70px;width:200px;text-align:center;">50</span>
<span class="t" id="t53" style="font-size:16.4px;line-height:16.4px;top:981.00px;color:#000;font-weight:400;left:27.60px;letter-spacing:-0.059px;">Area 3</span>
<span class="t" id="t54" style="font-size:16.3px;line-height:16.3px;top:980.00px;color:#000;font-weight:400;left:76.30px;width:200px;text-align:center;">84</span>
<span class="t" id="t55" style="font-size:16.3px;line-height:16.3px;top:980.00px;color:#000;font-weight:400;left:248.90px;width:200px;text-align:center;">87</span>
<span class="t" id="t56" style="font-size:16.3px;line-height:16.3px;top:980.00px;color:#000;font-weight:400;left:421.50px;width:200px;text-align:center;">93</span>
<span class="t" id="t57" style="font-size:16.3px;line-height:16.3px;top:980.00px;color:#000;font-weight:400;left:594.10px;width:200px;text-align:center;">56</span>
<span class="t" id="t58" style="font-size:16.3px;line-height:16.3px;top:980.00px;color:#000;font-weight:400;left:766.70px;width:200px;text-align:center;">40</span>
<span class="t" id="t59" style="font-size:16.4px;line-height:16.4px;top:1038.00px;color:#000;font-weight:400;left:27.60px;letter-spacing:-0.059px;">Area 4</span>
<span class="t" id="t60" style="font-size:16.3px;line-height:16.3px;top:1037.00px;color:#000;font-weight:400;left:76.30px;width:200px;text-align:center;">24</span>
<span class="t" id="t61" style="font-size:16.3px;line-height:16.3px;top:1037.00px;color:#000;font-weight:400;left:248.90px;width:200px;text-align:center;">34</span>
<span class="t" id="t62" style="font-size:16.3px;line-height:16.3px;top:1037.00px;color:#000;font-weight:400;left:421.50px;width:200px;text-align:center;">67</span>
<span class="t" id="t63" style="font-size:16.3px;line-height:16.3px;top:1037.00px;color:#000;font-weight:400;left:594.10px;width:200px;text-align:center;">100</span>
<span class="t" id="t64" style="font-size:16.3px;line-height:16.3px;top:1037.00px;color:#000;font-weight:400;left:766.70px;width:200px;text-align:center;">120</span>
<span class="t" id="t65" style="font-size:21.1px;line-height:21.1px;top:685.00px;color:#3a4509;font-weight:400;left:991.00px;letter-spacing:-0.367px;">Find archived data</span>
<span class="t" id="t66" style="font-size:20.51px;line-height:20.51px;top:729.00px;color:#111;font-weight:400;left:1004.00px;letter-spacing:-0.498px;">All</span>
<span class="t" id="t67" style="font-size:20.87px;line-height:20.87px;top:683.00px;color:#fff;font-weight:400;-webkit-text-stroke:0.3px #fff;left:1570.00px;letter-spacing:-0.496px;">Download coordination (XML)</span>
<span class="t" id="t68" style="font-size:20.41px;line-height:20.41px;top:735.00px;color:#63676d;font-weight:400;left:1576.40px;letter-spacing:-0.502px;">Download parameters (CSV)</span>
<span class="t" id="t69" style="font-size:21.1px;line-height:21.1px;top:815.00px;color:#3a4509;font-weight:400;-webkit-text-stroke:0.45px #3a4509;left:998.50px;letter-spacing:-0.180px;">Total Reforestation annual target (SAMPLE)</span>
<span class="t" id="t70" style="font-size:21.1px;line-height:21.1px;top:815.00px;color:#3a4509;font-weight:400;-webkit-text-stroke:0.45px #3a4509;left:1481.70px;letter-spacing:-0.149px;">Total Reforestation area total target (SAMPLE)</span>
<span class="t" id="t71" style="font-size:18.08px;line-height:18.08px;top:853.00px;color:#3a4509;font-weight:400;left:1257.70px;letter-spacing:-0.510px;">Year</span>
<span class="t" id="t72" style="font-size:18.03px;line-height:18.03px;top:853.00px;color:#3a4509;font-weight:400;left:1740.70px;letter-spacing:-0.502px;">Year</span>
<span class="t" id="t73" style="font-size:18.62px;line-height:18.62px;top:854.00px;color:#5a6580;font-weight:400;left:1348.80px;letter-spacing:-0.502px;">2023</span>
<span class="t" id="t74" style="font-size:18.64px;line-height:18.64px;top:854.00px;color:#5a6580;font-weight:400;left:1841.60px;letter-spacing:-0.502px;">All</span>
<span class="t" id="t75" style="font-size:16.46px;line-height:16.46px;top:1008.00px;color:#555;font-weight:400;left:1066.00px;letter-spacing:-0.333px;">0ha.</span>
<span class="t" id="t76" style="font-size:16.46px;line-height:16.46px;top:914.00px;color:#555;font-weight:400;left:1080.40px;letter-spacing:-0.276px;">150ha.</span>
<span class="t" id="t77" style="font-size:16.46px;line-height:16.46px;top:896.00px;color:#555;font-weight:400;left:1264.40px;letter-spacing:-0.076px;">250ha.</span>
<span class="t" id="t78" style="font-size:16.46px;line-height:16.46px;top:1007.00px;color:#555;font-weight:400;left:1334.00px;letter-spacing:-0.136px;">300ha.</span>
<span class="t" id="t79" style="font-size:27.64px;line-height:27.64px;top:1024.00px;color:#000;font-weight:700;left:1171.40px;letter-spacing:-0.183px;">222ha.</span>
<span class="t" id="t80" style="font-size:16.67px;line-height:16.67px;top:1056.00px;color:#9aa0a6;font-weight:400;left:1160.00px;letter-spacing:0.034px;">Target : 250ha.</span>
<span class="t" id="t81" style="font-size:16.46px;line-height:16.46px;top:1008.00px;color:#555;font-weight:400;left:1549.00px;letter-spacing:-0.233px;">0ha.</span>
<span class="t" id="t82" style="font-size:16.46px;line-height:16.46px;top:914.00px;color:#555;font-weight:400;left:1552.80px;letter-spacing:-0.104px;">3000ha.</span>
<span class="t" id="t83" style="font-size:16.46px;line-height:16.46px;top:896.00px;color:#555;font-weight:400;left:1745.40px;letter-spacing:-0.104px;">5000ha.</span>
<span class="t" id="t84" style="font-size:16.46px;line-height:16.46px;top:1007.00px;color:#555;font-weight:400;left:1816.10px;letter-spacing:-0.087px;">6000ha.</span>
<span class="t" id="t85" style="font-size:27.64px;line-height:27.64px;top:1024.00px;color:#000;font-weight:700;left:1647.60px;letter-spacing:0.059px;">1182ha.</span>
<span class="t" id="t86" style="font-size:16.67px;line-height:16.67px;top:1056.00px;color:#9aa0a6;font-weight:400;left:1638.20px;letter-spacing:0.041px;">Target : 5000ha.</span>
</div>
</body></html>
